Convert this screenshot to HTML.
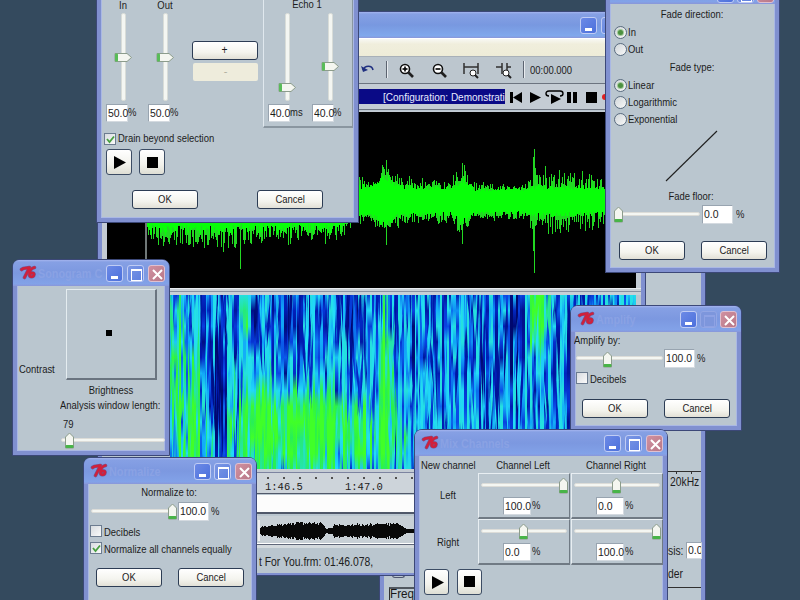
<!DOCTYPE html><html><head><meta charset="utf-8"><style>
*{margin:0;padding:0;box-sizing:border-box}
html,body{width:800px;height:600px;overflow:hidden;background:#344a5e;font-family:"Liberation Sans",sans-serif;font-size:11px;color:#1c1c1c}
.a{position:absolute}
.dlg{position:absolute;background:#bac6cf;border:4px solid #8090d0;outline:1px solid #3c4878;box-shadow:inset 0 0 0 1px #aab8e4}
.tb{position:absolute;left:0;right:0;top:0;height:26px;background:linear-gradient(#a4b4ee 0,#86a0e4 2px,#7c98e0 50%,#82a2e8 92%,#8a96d8 100%);}
.ttl{position:absolute;left:24px;top:6px;font-size:12px;font-weight:bold;color:#8aa2e4;white-space:nowrap;transform:scaleX(.9);transform-origin:0 0}
.logo{position:absolute;left:4px;top:3px;font:italic bold 15px "Liberation Sans",sans-serif;color:#d0203a;letter-spacing:-1px;text-shadow:1px 0 0 #a01828}
.tbtn{position:absolute;top:5px;width:17px;height:17px;border-radius:3px;border:1px solid #c0ccf4}
.bmin{background:linear-gradient(135deg,#6c8ae6,#4c70dc);}
.bmin:after{content:"";position:absolute;left:4px;top:10px;width:7px;height:3px;background:#fff}
.bmax{background:linear-gradient(135deg,#7c98e4,#5c7ee0)}
.bmax:after{content:"";position:absolute;left:3px;top:3px;width:9px;height:9px;border:1px solid #fff;border-top-width:2px}
.bmaxd{background:#7d96dc;border-color:#92a6e4}
.bmaxd:after{content:"";position:absolute;left:3px;top:3px;width:9px;height:9px;border:1px solid #8ea2e4;border-top-width:2px}
.bcls{background:linear-gradient(135deg,#d090a0,#b87888);border-color:#e0c0d0}
.btn{position:absolute;height:19px;border:1px solid #2c3c54;border-radius:3px;background:linear-gradient(#ffffff,#f4f4ee 60%,#e2e0d6);text-align:center;line-height:17px;font-size:11px;color:#1c1c1c}
.edit{position:absolute;height:19px;background:#fff;border:1px solid;border-color:#98a4b0 #d4dae0 #d4dae0 #98a4b0;line-height:17px;padding-left:1px;font-size:11px;color:#1c1c1c;white-space:nowrap}
.edit .sx{transform-origin:0 0;transform:scaleX(.95)}
.chk{position:absolute;width:12px;height:12px;background:linear-gradient(135deg,#d8dce0,#fafafa);border:1px solid #6c7c90}
.rad{position:absolute;width:13px;height:13px;border-radius:50%;background:linear-gradient(135deg,#d0d6da,#f8f8f8);border:1px solid #5a6c80}
.rad.on:after{content:"";position:absolute;left:3px;top:3px;width:5px;height:5px;border-radius:50%;background:#4c9040;box-shadow:0 0 0 1px #a0c898}
.trk{position:absolute;height:4px;background:#f4f6f2;border:1px solid #dcdcd8;border-radius:2px}
.vtrk{position:absolute;width:5px;background:#f4f6f2;border:1px solid #d8dcd8;border-radius:2px}
.t{position:absolute;white-space:nowrap;transform:scaleX(.86);transform-origin:0 0}
.sx{display:inline-block;transform:scaleX(.86)}
.pbtn{position:absolute;width:26px;height:26px;border:1px solid #3c4c64;border-radius:3px;background:linear-gradient(#fff,#f2f2ec 60%,#deded4)}
</style></head><body>
<div class="a" style="left:380px;top:260px;width:325px;height:345px;background:#bcc8d0;border:4px solid #8090d0;outline:1px solid #3c4878"></div>
<div class="a" style="left:668px;top:471px;width:33px;height:1px;background:#303030"></div><div class="a" style="left:676px;top:471px;width:1px;height:3px;background:#303030"></div><div class="a" style="left:691px;top:471px;width:1px;height:3px;background:#303030"></div>
<div class="t" style="left:670px;top:475px;font-size:12px">20kHz</div>
<div class="t" style="left:668px;top:544px;font-size:12px">sis:</div>
<div class="edit" style="left:686px;top:542px;width:16px;height:17px;overflow:hidden;line-height:15px"><span class="sx">0.0</span></div>
<div class="t" style="left:668px;top:567px;font-size:12px">der</div>
<div class="a" style="left:668px;top:587px;width:33px;height:1px;background:#303030"></div>
<div class="a" style="left:389px;top:587px;width:30px;height:14px;border-top:2px solid #505860;border-left:1px solid #303030"></div>
<div class="t" style="left:390px;top:586px;font-size:13px;color:#181818;transform:scaleX(.9)">Frequ</div>
<div class="a" style="left:392px;top:574px;width:13px;height:4px;border:1px solid #505870;border-top:0;border-radius:0 0 3px 3px"></div>
<div class="a" style="left:98px;top:12px;width:547px;height:563px;background:#bac6cf;border:4px solid #8090d0;border-top:0;outline:1px solid #3c4878"></div>
<div class="a" style="left:98px;top:12px;width:547px;height:26px;background:linear-gradient(#a4b4ee 0,#86a0e4 2px,#7898e0 50%,#80a8ec 92%,#8a96d8 100%)"></div>
<div class="tbtn bmin" style="left:580px;top:17px"></div>
<div class="tbtn bmax" style="left:601px;top:17px"></div>
<div class="a" style="left:102px;top:38px;width:539px;height:19px;background:linear-gradient(#f8f8f4,#f0eedc 30%,#eeecd8);border-top:1px solid #fff;border-bottom:1px solid #a8b0b8"></div>
<div class="a" style="left:102px;top:57px;width:539px;height:27px;background:#bcc6ce;border-bottom:1px solid #6c7480"></div>
<svg class="a" style="left:360px;top:62px" width="16" height="14"><path d="M3 8C5 3 12 3 13 8" stroke="#203080" stroke-width="1.6" fill="none"/><path d="M1 4L3 10L8 8Z" fill="#203080"/></svg>
<div class="a" style="left:386px;top:61px;width:2px;height:17px;background:#5c6470;border-right:1px solid #e8ecf0"></div>
<svg class="a" style="left:399px;top:63px" width="16" height="16"><circle cx="6" cy="6" r="4.5" fill="#fff" stroke="#101010" stroke-width="1.6"/><path d="M3.5 6H8.5" stroke="#000" stroke-width="1.6"/><path d="M6 3.5V8.5" stroke="#000" stroke-width="1.6"/><path d="M9 9L14 14" stroke="#202020" stroke-width="2.6"/></svg>
<svg class="a" style="left:432px;top:63px" width="16" height="16"><circle cx="6" cy="6" r="4.5" fill="#fff" stroke="#101010" stroke-width="1.6"/><path d="M3.5 6H8.5" stroke="#000" stroke-width="1.6"/><path d="M9 9L14 14" stroke="#202020" stroke-width="2.6"/></svg>
<svg class="a" style="left:462px;top:62px" width="18" height="17"><path d="M2 1V12M16 1V12M2 5H16" stroke="#303030" stroke-width="1.5" fill="none"/><circle cx="11" cy="11" r="3" fill="#fff" stroke="#202020"/><path d="M13 13L16 16" stroke="#202020" stroke-width="2"/></svg>
<svg class="a" style="left:495px;top:62px" width="18" height="17"><path d="M1 5H7M7 1V12M12 1V12M12 5H16" stroke="#303030" stroke-width="1.5" fill="none"/><circle cx="11" cy="11" r="3" fill="#fff" stroke="#202020"/><path d="M13 13L16 16" stroke="#202020" stroke-width="2"/></svg>
<div class="a" style="left:523px;top:61px;width:2px;height:17px;background:#5c6470;border-right:1px solid #e8ecf0"></div>
<div class="t" style="left:530px;top:64px;font-size:11px;color:#202020">00:00.000</div>
<div class="a" style="left:102px;top:84px;width:539px;height:26px;background:#c4ccd4;border-bottom:1px solid #6c7480"></div>
<div class="a" style="left:102px;top:89px;width:403px;height:15px;background:#0a0a86;overflow:hidden"><div class="t" style="left:281px;top:1px;color:#e8ecff;font-size:11px;line-height:15px;transform:scaleX(.91)">[Configuration: Demonstration</div></div>
<svg class="a" style="left:508px;top:90px" width="100" height="16"><rect x="2" y="2" width="3" height="11" fill="#000"/><path d="M14 2V13L5 7.5Z" fill="#000"/><path d="M22 2V13L33 7.5Z" fill="#000"/><path d="M41 6C37 6 37 1 41 1H52C56 1 56 6 52 6" stroke="#000" stroke-width="1.4" fill="none"/><path d="M43 4V14L53 9Z" fill="#000"/><rect x="59" y="2" width="4" height="11" fill="#000"/><rect x="65" y="2" width="4" height="11" fill="#000"/><rect x="78" y="2" width="11" height="11" fill="#000"/><circle cx="97" cy="7" r="3" fill="#e02020"/></svg>
<div class="a" style="left:102px;top:111px;width:539px;height:178px;background:#c4ccd4"></div>
<div class="a" style="left:107px;top:112px;width:529px;height:176px;background:#000"></div>
<div class="a" style="left:145px;top:112px;width:2px;height:176px;background:#707878"></div>
<svg class="a" style="left:0;top:0" width="800" height="600"><path d="M147.5 165V227M148.5 171V235M149.5 176V230M150.5 172V235M151.5 163V239M152.5 153V228M153.5 173V239M154.5 167V234M155.5 171V227M156.5 167V237M157.5 160V238M158.5 168V245M159.5 152V228M160.5 172V238M161.5 165V239M162.5 158V236M163.5 158V246M164.5 172V242M165.5 157V237M166.5 173V237M167.5 175V238M168.5 172V242M169.5 170V244M170.5 167V238M171.5 157V235M172.5 174V233M173.5 171V232M174.5 157V240M175.5 162V231M176.5 153V245M177.5 173V237M178.5 175V226M179.5 174V226M180.5 176V243M181.5 169V229M182.5 160V244M183.5 172V230M184.5 160V228M185.5 171V235M186.5 165V243M187.5 167V235M188.5 169V245M189.5 161V245M190.5 155V244M191.5 172V230M192.5 175V237M193.5 151V247M194.5 166V230M195.5 167V242M196.5 160V242M197.5 161V244M198.5 169V242M199.5 156V237M200.5 163V235M201.5 160V239M202.5 158V242M203.5 173V230M204.5 161V248M205.5 160V235M206.5 173V235M207.5 174V245M208.5 166V245M209.5 167V240M210.5 168V226M211.5 177V238M212.5 167V236M213.5 171V239M214.5 163V233M215.5 156V237M216.5 165V240M217.5 168V247M218.5 153V235M219.5 158V235M220.5 176V231M221.5 164V247M222.5 167V232M223.5 167V252M224.5 155V243M225.5 170V232M226.5 165V228M227.5 172V232M228.5 171V248M229.5 169V236M230.5 175V233M231.5 160V235M232.5 169V244M233.5 167V229M234.5 168V247M235.5 177V248M236.5 166V244M237.5 169V227M238.5 177V227M239.5 164V229M240.5 170V269M241.5 165V230M242.5 161V229M243.5 165V240M244.5 166V244M245.5 166V240M246.5 174V228M247.5 176V232M248.5 165V240M249.5 173V231M250.5 175V243M251.5 167V244M252.5 175V231M253.5 172V234M254.5 178V230M255.5 176V226M256.5 163V237M257.5 168V235M258.5 159V233M259.5 165V239M260.5 170V237M261.5 163V243M262.5 164V241M263.5 175V227M264.5 171V239M265.5 167V231M266.5 165V237M267.5 163V226M268.5 169V228M269.5 166V237M270.5 164V237M271.5 171V226M272.5 165V227M273.5 170V235M274.5 166V231M275.5 161V226M276.5 168V237M277.5 166V235M278.5 175V239M279.5 163V230M280.5 158V237M281.5 172V233M282.5 174V231M283.5 175V238M284.5 167V232M285.5 157V233M286.5 160V234M287.5 173V228M288.5 175V245M289.5 171V227M290.5 163V244M291.5 159V238M292.5 162V228M293.5 169V230M294.5 165V227M295.5 161V233M296.5 166V230M297.5 176V238M298.5 161V240M299.5 173V225M300.5 174V226M301.5 164V236M302.5 171V231M303.5 164V227M304.5 162V231M305.5 173V230M306.5 157V232M307.5 166V235M308.5 170V236M309.5 156V233M310.5 173V233M311.5 162V240M312.5 174V239M313.5 169V235M314.5 170V234M315.5 173V230M316.5 169V226M317.5 162V235M318.5 168V230M319.5 167V231M320.5 170V232M321.5 171V233M322.5 168V229M323.5 166V232M324.5 159V228M325.5 175V244M326.5 172V229M327.5 171V236M328.5 176V233M329.5 166V239M330.5 159V235M331.5 168V233M332.5 169V229M333.5 175V226M334.5 156V226M335.5 165V235M336.5 175V240M337.5 165V227M338.5 166V231M339.5 166V225M340.5 169V234M341.5 169V236M342.5 178V232M343.5 162V226M344.5 169V235M345.5 177V224M346.5 169V226M347.5 174V224M348.5 177V218M349.5 185V220M350.5 186V228M351.5 183V219M352.5 184V217M353.5 184V219M354.5 181V217M355.5 182V216M356.5 185V214M357.5 185V218M358.5 185V218M359.5 177V216M360.5 180V224M361.5 189V215M362.5 177V217M363.5 184V221M364.5 181V217M365.5 187V216M366.5 184V217M367.5 185V215M368.5 182V217M369.5 187V216M370.5 185V218M371.5 185V221M372.5 186V218M373.5 182V220M374.5 184V222M375.5 183V227M376.5 184V220M377.5 182V226M378.5 183V221M379.5 181V227M380.5 178V225M381.5 173V225M382.5 165V227M383.5 167V222M384.5 169V228M385.5 175V227M386.5 160V245M387.5 172V225M388.5 169V226M389.5 175V227M390.5 177V227M391.5 180V223M392.5 176V223M393.5 182V220M394.5 182V219M395.5 176V223M396.5 181V217M397.5 174V226M398.5 184V228M399.5 178V218M400.5 185V219M401.5 178V215M402.5 182V221M403.5 185V216M404.5 189V222M405.5 185V223M406.5 184V217M407.5 181V223M408.5 185V220M409.5 176V218M410.5 185V217M411.5 179V214M412.5 183V222M413.5 188V213M414.5 183V222M415.5 184V214M416.5 189V216M417.5 185V216M418.5 186V223M419.5 188V217M420.5 183V217M421.5 186V217M422.5 178V220M423.5 189V220M424.5 188V219M425.5 182V215M426.5 186V219M427.5 185V214M428.5 184V221M429.5 184V219M430.5 186V214M431.5 187V218M432.5 182V217M433.5 181V217M434.5 180V216M435.5 185V213M436.5 181V218M437.5 185V221M438.5 183V224M439.5 183V223M440.5 185V216M441.5 189V222M442.5 189V220M443.5 189V212M444.5 182V220M445.5 189V221M446.5 187V223M447.5 186V216M448.5 183V218M449.5 184V216M450.5 185V212M451.5 188V215M452.5 186V218M453.5 175V221M454.5 185V224M455.5 181V219M456.5 172V216M457.5 177V231M458.5 181V230M459.5 181V232M460.5 181V225M461.5 178V230M462.5 163V244M463.5 176V224M464.5 165V218M465.5 171V223M466.5 182V226M467.5 175V227M468.5 185V226M469.5 184V221M470.5 184V219M471.5 184V215M472.5 186V216M473.5 187V213M474.5 182V216M475.5 191V216M476.5 183V216M477.5 190V214M478.5 188V216M479.5 185V215M480.5 189V218M481.5 185V217M482.5 185V218M483.5 182V218M484.5 188V216M485.5 186V217M486.5 187V214M487.5 185V219M488.5 186V215M489.5 189V217M490.5 184V216M491.5 188V217M492.5 184V216M493.5 189V218M494.5 190V221M495.5 189V212M496.5 190V216M497.5 189V216M498.5 187V218M499.5 190V216M500.5 186V216M501.5 189V218M502.5 186V215M503.5 184V212M504.5 187V212M505.5 190V215M506.5 189V214M507.5 186V214M508.5 187V219M509.5 187V219M510.5 189V217M511.5 189V212M512.5 189V214M513.5 187V219M514.5 186V219M515.5 188V218M516.5 188V219M517.5 189V212M518.5 188V211M519.5 187V218M520.5 190V216M521.5 187V216M522.5 185V214M523.5 188V219M524.5 188V216M525.5 184V213M526.5 189V216M527.5 188V216M528.5 181V215M529.5 182V215M530.5 180V228M531.5 186V221M532.5 186V229M533.5 157V251M534.5 149V273M535.5 168V226M536.5 175V225M537.5 175V220M538.5 184V213M539.5 175V221M540.5 177V219M541.5 185V220M542.5 186V225M543.5 175V221M544.5 185V219M545.5 166V223M546.5 178V215M547.5 189V223M548.5 188V234M549.5 177V214M550.5 186V227M551.5 174V217M552.5 181V234M553.5 177V217M554.5 175V216M555.5 187V232M556.5 184V220M557.5 187V229M558.5 179V220M559.5 170V229M560.5 187V233M561.5 183V225M562.5 177V219M563.5 184V227M564.5 173V219M565.5 185V221M566.5 186V230M567.5 179V218M568.5 176V232M569.5 181V225M570.5 173V217M571.5 182V217M572.5 177V220M573.5 178V217M574.5 173V222M575.5 187V216M576.5 186V222M577.5 188V214M578.5 185V222M579.5 179V215M580.5 188V229M581.5 180V216M582.5 171V224M583.5 185V216M584.5 189V213M585.5 183V231M586.5 179V215M587.5 188V222M588.5 179V219M589.5 174V228M590.5 188V214M591.5 175V216M592.5 180V230M593.5 181V226M594.5 181V222M595.5 188V213M596.5 187V213M597.5 179V212M598.5 189V228M599.5 186V219M600.5 180V222M601.5 179V217M602.5 187V212M603.5 187V224M604.5 189V215M605.5 186V217M606.5 189V228M607.5 184V216M608.5 187V214M609.5 176V227M610.5 179V213M611.5 175V213M612.5 186V213M613.5 186V217M614.5 181V213M615.5 182V216M616.5 185V216M617.5 184V220M618.5 186V214M619.5 180V213M620.5 177V223M621.5 177V215M622.5 186V222M623.5 187V218M624.5 187V218M625.5 181V225M626.5 187V223M627.5 178V219M628.5 184V214M629.5 185V213M630.5 189V215M631.5 187V218M632.5 181V214M633.5 187V215M634.5 187V214M635.5 183V222" stroke="#22d822" stroke-width="1" fill="none"/><path d="M147.5 174V227M148.5 171V229M149.5 177V230M150.5 173V234M151.5 170V235M152.5 167V225M153.5 176V226M154.5 175V231M155.5 171V226M156.5 170V229M157.5 172V228M158.5 175V231M159.5 169V228M160.5 173V233M161.5 177V232M162.5 168V228M163.5 171V230M164.5 172V232M165.5 170V235M166.5 173V232M167.5 175V226M168.5 176V227M169.5 176V229M170.5 169V234M171.5 173V234M172.5 175V227M173.5 171V228M174.5 173V231M175.5 172V231M176.5 168V233M177.5 173V229M178.5 177V225M179.5 174V225M180.5 176V229M181.5 171V226M182.5 174V226M183.5 172V230M184.5 174V227M185.5 177V235M186.5 172V225M187.5 168V232M188.5 176V233M189.5 174V227M190.5 169V233M191.5 175V230M192.5 177V228M193.5 167V229M194.5 168V228M195.5 175V227M196.5 169V230M197.5 177V231M198.5 170V230M199.5 174V233M200.5 173V234M201.5 176V226M202.5 176V233M203.5 174V230M204.5 167V231M205.5 173V233M206.5 175V228M207.5 175V229M208.5 174V229M209.5 173V234M210.5 172V225M211.5 177V233M212.5 170V230M213.5 172V232M214.5 175V227M215.5 172V232M216.5 171V230M217.5 173V230M218.5 170V233M219.5 172V234M220.5 176V229M221.5 177V231M222.5 176V232M223.5 169V234M224.5 174V229M225.5 176V229M226.5 176V228M227.5 172V229M228.5 171V230M229.5 170V234M230.5 177V232M231.5 173V234M232.5 176V234M233.5 177V225M234.5 177V234M235.5 177V233M236.5 173V228M237.5 175V226M238.5 177V226M239.5 175V227M240.5 173V226M241.5 175V224M242.5 176V229M243.5 169V229M244.5 174V229M245.5 174V233M246.5 174V228M247.5 177V232M248.5 177V233M249.5 175V227M250.5 176V229M251.5 168V230M252.5 175V228M253.5 173V229M254.5 178V227M255.5 177V224M256.5 172V229M257.5 171V233M258.5 168V226M259.5 177V233M260.5 171V232M261.5 173V232M262.5 172V233M263.5 176V224M264.5 177V232M265.5 172V231M266.5 170V232M267.5 171V225M268.5 177V227M269.5 171V234M270.5 173V231M271.5 172V225M272.5 171V227M273.5 177V227M274.5 171V227M275.5 173V225M276.5 168V233M277.5 170V234M278.5 176V233M279.5 177V229M280.5 170V229M281.5 176V233M282.5 178V229M283.5 177V227M284.5 178V231M285.5 169V231M286.5 174V228M287.5 175V228M288.5 177V232M289.5 176V226M290.5 174V233M291.5 172V233M292.5 171V224M293.5 171V230M294.5 169V225M295.5 175V231M296.5 172V227M297.5 177V225M298.5 173V226M299.5 174V225M300.5 175V225M301.5 173V233M302.5 174V229M303.5 178V226M304.5 173V230M305.5 176V226M306.5 169V232M307.5 178V231M308.5 173V224M309.5 170V232M310.5 177V225M311.5 169V231M312.5 174V229M313.5 176V233M314.5 177V226M315.5 177V224M316.5 175V226M317.5 175V228M318.5 170V228M319.5 169V231M320.5 174V230M321.5 172V233M322.5 175V228M323.5 171V231M324.5 169V227M325.5 176V231M326.5 174V225M327.5 172V233M328.5 176V233M329.5 178V227M330.5 171V233M331.5 177V233M332.5 172V227M333.5 177V223M334.5 169V225M335.5 175V232M336.5 178V228M337.5 177V227M338.5 175V231M339.5 178V224M340.5 171V232M341.5 171V228M342.5 178V224M343.5 174V226M344.5 180V224M345.5 180V221M346.5 177V219M347.5 179V222M348.5 184V218M349.5 186V220M350.5 188V217M351.5 184V218M352.5 189V215M353.5 189V214M354.5 186V217M355.5 185V214M356.5 186V213M357.5 189V217M358.5 187V218M359.5 185V216M360.5 187V217M361.5 189V214M362.5 184V216M363.5 184V215M364.5 184V214M365.5 188V215M366.5 187V216M367.5 189V215M368.5 187V214M369.5 188V214M370.5 185V214M371.5 186V215M372.5 187V217M373.5 183V219M374.5 184V215M375.5 185V219M376.5 184V216M377.5 182V221M378.5 183V220M379.5 182V223M380.5 179V224M381.5 177V225M382.5 176V222M383.5 176V220M384.5 179V227M385.5 180V224M386.5 180V223M387.5 181V225M388.5 175V221M389.5 178V221M390.5 180V223M391.5 184V222M392.5 180V222M393.5 182V217M394.5 186V219M395.5 183V216M396.5 185V215M397.5 183V214M398.5 185V217M399.5 186V218M400.5 185V218M401.5 185V214M402.5 185V214M403.5 188V214M404.5 189V214M405.5 186V217M406.5 189V215M407.5 185V216M408.5 189V218M409.5 185V214M410.5 188V217M411.5 186V213M412.5 186V218M413.5 188V213M414.5 186V215M415.5 189V214M416.5 190V214M417.5 188V215M418.5 187V215M419.5 188V213M420.5 185V216M421.5 190V215M422.5 187V214M423.5 189V217M424.5 188V213M425.5 190V215M426.5 189V215M427.5 186V213M428.5 190V216M429.5 190V216M430.5 186V214M431.5 189V212M432.5 187V216M433.5 187V214M434.5 189V215M435.5 186V212M436.5 187V216M437.5 186V213M438.5 187V215M439.5 188V216M440.5 188V215M441.5 189V215M442.5 190V212M443.5 189V212M444.5 187V215M445.5 190V214M446.5 187V216M447.5 186V216M448.5 190V212M449.5 188V215M450.5 190V212M451.5 188V214M452.5 188V216M453.5 184V216M454.5 188V216M455.5 186V219M456.5 182V216M457.5 186V217M458.5 186V219M459.5 184V220M460.5 183V224M461.5 179V222M462.5 183V225M463.5 179V221M464.5 178V218M465.5 184V218M466.5 184V222M467.5 183V220M468.5 185V217M469.5 184V218M470.5 185V216M471.5 185V214M472.5 187V216M473.5 190V213M474.5 190V211M475.5 191V215M476.5 187V214M477.5 191V213M478.5 190V211M479.5 188V213M480.5 191V213M481.5 188V212M482.5 190V212M483.5 188V214M484.5 189V213M485.5 191V212M486.5 189V212M487.5 189V212M488.5 191V213M489.5 189V215M490.5 191V214M491.5 191V213M492.5 189V213M493.5 190V215M494.5 190V214M495.5 190V211M496.5 191V212M497.5 190V212M498.5 187V213M499.5 190V211M500.5 188V213M501.5 190V215M502.5 188V214M503.5 189V211M504.5 188V212M505.5 190V211M506.5 190V212M507.5 190V213M508.5 187V214M509.5 188V214M510.5 189V211M511.5 189V212M512.5 190V214M513.5 188V214M514.5 189V214M515.5 188V214M516.5 189V214M517.5 189V212M518.5 189V211M519.5 189V213M520.5 191V214M521.5 189V214M522.5 187V211M523.5 191V213M524.5 190V215M525.5 188V211M526.5 190V214M527.5 189V214M528.5 189V214M529.5 187V213M530.5 188V216M531.5 188V214M532.5 186V216M533.5 185V215M534.5 189V214M535.5 186V217M536.5 186V216M537.5 186V214M538.5 185V213M539.5 185V218M540.5 185V217M541.5 188V215M542.5 186V218M543.5 189V213M544.5 185V215M545.5 186V217M546.5 187V213M547.5 189V213M548.5 189V217M549.5 189V213M550.5 186V213M551.5 186V217M552.5 186V216M553.5 188V217M554.5 190V216M555.5 188V216M556.5 187V213M557.5 188V216M558.5 188V215M559.5 188V216M560.5 187V214M561.5 186V216M562.5 185V216M563.5 188V216M564.5 187V216M565.5 190V213M566.5 186V216M567.5 186V216M568.5 186V216M569.5 188V212M570.5 189V216M571.5 187V215M572.5 189V216M573.5 190V216M574.5 187V216M575.5 188V215M576.5 189V215M577.5 188V214M578.5 185V214M579.5 186V213M580.5 188V212M581.5 186V214M582.5 187V214M583.5 186V216M584.5 189V213M585.5 188V216M586.5 186V212M587.5 190V216M588.5 187V216M589.5 188V212M590.5 189V212M591.5 186V216M592.5 187V215M593.5 190V212M594.5 187V213M595.5 190V213M596.5 188V212M597.5 187V212M598.5 190V216M599.5 187V216M600.5 190V216M601.5 188V213M602.5 188V212M603.5 187V214M604.5 189V213M605.5 187V213M606.5 189V216M607.5 190V215M608.5 188V213M609.5 189V216M610.5 190V213M611.5 187V213M612.5 187V213M613.5 187V214M614.5 186V212M615.5 190V215M616.5 190V212M617.5 189V212M618.5 187V214M619.5 187V213M620.5 187V213M621.5 188V211M622.5 187V213M623.5 189V212M624.5 191V214M625.5 190V215M626.5 189V215M627.5 190V215M628.5 188V214M629.5 186V212M630.5 189V215M631.5 187V212M632.5 188V214M633.5 187V215M634.5 188V214M635.5 189V212" stroke="#08ff08" stroke-width="1" fill="none"/></svg>
<div class="a" style="left:102px;top:288px;width:539px;height:7px;background:#c8d0d6;border-top:1px solid #e8ecf0"></div>
<div class="a" style="left:102px;top:291px;width:539px;height:1px;background:#8890a0"></div>
<svg class="a" style="left:107px;top:295px" width="529" height="174"><defs><linearGradient id="g0" x2="0" y2="1"><stop offset="0.00" stop-color="#0fa0f7"/><stop offset="0.09" stop-color="#24e3be"/><stop offset="0.18" stop-color="#19c0f8"/><stop offset="0.27" stop-color="#11a7f8"/><stop offset="0.36" stop-color="#1dc9f8"/><stop offset="0.45" stop-color="#24e795"/><stop offset="0.55" stop-color="#19c0f8"/><stop offset="0.64" stop-color="#18bbf8"/><stop offset="0.73" stop-color="#20d3f8"/><stop offset="0.82" stop-color="#1dccf8"/><stop offset="0.91" stop-color="#0c72ee"/><stop offset="1.00" stop-color="#0d75ef"/></linearGradient><linearGradient id="g1" x2="0" y2="1"><stop offset="0.00" stop-color="#1eccf8"/><stop offset="0.09" stop-color="#24e3bc"/><stop offset="0.18" stop-color="#25ea7a"/><stop offset="0.27" stop-color="#24e1d4"/><stop offset="0.36" stop-color="#37f935"/><stop offset="0.45" stop-color="#24e4af"/><stop offset="0.55" stop-color="#27ee58"/><stop offset="0.64" stop-color="#36f937"/><stop offset="0.73" stop-color="#29f04d"/><stop offset="0.82" stop-color="#24e3ba"/><stop offset="0.91" stop-color="#24e1d2"/><stop offset="1.00" stop-color="#11a7f8"/></linearGradient><linearGradient id="g2" x2="0" y2="1"><stop offset="0.00" stop-color="#0531cd"/><stop offset="0.09" stop-color="#1ecdf8"/><stop offset="0.18" stop-color="#0c70ee"/><stop offset="0.27" stop-color="#1cc7f8"/><stop offset="0.36" stop-color="#2cf248"/><stop offset="0.45" stop-color="#0d7bf0"/><stop offset="0.55" stop-color="#25ea7d"/><stop offset="0.64" stop-color="#24e4af"/><stop offset="0.73" stop-color="#24dfea"/><stop offset="0.82" stop-color="#24e4b3"/><stop offset="0.91" stop-color="#24e3be"/><stop offset="1.00" stop-color="#24e4ad"/></linearGradient><linearGradient id="g3" x2="0" y2="1"><stop offset="0.00" stop-color="#0a46e6"/><stop offset="0.09" stop-color="#24e88f"/><stop offset="0.18" stop-color="#1fd0f8"/><stop offset="0.27" stop-color="#24e2c3"/><stop offset="0.36" stop-color="#24e2c4"/><stop offset="0.45" stop-color="#25ea79"/><stop offset="0.55" stop-color="#20d3f8"/><stop offset="0.64" stop-color="#3cfd2d"/><stop offset="0.73" stop-color="#26ec6d"/><stop offset="0.82" stop-color="#24e4ad"/><stop offset="0.91" stop-color="#15b3f8"/><stop offset="1.00" stop-color="#13aef8"/></linearGradient><linearGradient id="g4" x2="0" y2="1"><stop offset="0.00" stop-color="#27ef57"/><stop offset="0.09" stop-color="#25e981"/><stop offset="0.18" stop-color="#39fa33"/><stop offset="0.27" stop-color="#40ff28"/><stop offset="0.36" stop-color="#40ff28"/><stop offset="0.45" stop-color="#40ff28"/><stop offset="0.55" stop-color="#40ff28"/><stop offset="0.64" stop-color="#40ff28"/><stop offset="0.73" stop-color="#40ff28"/><stop offset="0.82" stop-color="#40ff28"/><stop offset="0.91" stop-color="#40ff28"/><stop offset="1.00" stop-color="#40ff28"/></linearGradient><linearGradient id="g5" x2="0" y2="1"><stop offset="0.00" stop-color="#1dcbf8"/><stop offset="0.09" stop-color="#11a8f8"/><stop offset="0.18" stop-color="#0f98f5"/><stop offset="0.27" stop-color="#22daf8"/><stop offset="0.36" stop-color="#0c6bed"/><stop offset="0.45" stop-color="#0f94f5"/><stop offset="0.55" stop-color="#10a5f8"/><stop offset="0.64" stop-color="#24e69f"/><stop offset="0.73" stop-color="#0942e2"/><stop offset="0.82" stop-color="#18bbf8"/><stop offset="0.91" stop-color="#1fd0f8"/><stop offset="1.00" stop-color="#24dfe4"/></linearGradient><linearGradient id="g6" x2="0" y2="1"><stop offset="0.00" stop-color="#20d4f8"/><stop offset="0.09" stop-color="#1ac2f8"/><stop offset="0.18" stop-color="#22daf8"/><stop offset="0.27" stop-color="#24e3be"/><stop offset="0.36" stop-color="#26eb75"/><stop offset="0.45" stop-color="#24e0dc"/><stop offset="0.55" stop-color="#24e2c6"/><stop offset="0.64" stop-color="#40ff28"/><stop offset="0.73" stop-color="#27ed63"/><stop offset="0.82" stop-color="#24dfe6"/><stop offset="0.91" stop-color="#40ff28"/><stop offset="1.00" stop-color="#25e88b"/></linearGradient><linearGradient id="g7" x2="0" y2="1"><stop offset="0.00" stop-color="#19c0f8"/><stop offset="0.09" stop-color="#0b5bea"/><stop offset="0.18" stop-color="#24e0da"/><stop offset="0.27" stop-color="#0c69ec"/><stop offset="0.36" stop-color="#28f04e"/><stop offset="0.45" stop-color="#27ed63"/><stop offset="0.55" stop-color="#24e3bc"/><stop offset="0.64" stop-color="#22d9f8"/><stop offset="0.73" stop-color="#1ecdf8"/><stop offset="0.82" stop-color="#1ac3f8"/><stop offset="0.91" stop-color="#25ea7b"/><stop offset="1.00" stop-color="#1cc9f8"/></linearGradient><linearGradient id="g8" x2="0" y2="1"><stop offset="0.00" stop-color="#0637d5"/><stop offset="0.09" stop-color="#12aaf8"/><stop offset="0.18" stop-color="#0b63eb"/><stop offset="0.27" stop-color="#0b64eb"/><stop offset="0.36" stop-color="#0e8cf3"/><stop offset="0.45" stop-color="#0a4de7"/><stop offset="0.55" stop-color="#0d7cf0"/><stop offset="0.64" stop-color="#24e792"/><stop offset="0.73" stop-color="#24e2c5"/><stop offset="0.82" stop-color="#0c74ee"/><stop offset="0.91" stop-color="#24dfec"/><stop offset="1.00" stop-color="#0b63eb"/></linearGradient><linearGradient id="g9" x2="0" y2="1"><stop offset="0.00" stop-color="#24e0de"/><stop offset="0.09" stop-color="#24e0de"/><stop offset="0.18" stop-color="#23dbf8"/><stop offset="0.27" stop-color="#10a4f8"/><stop offset="0.36" stop-color="#26ec69"/><stop offset="0.45" stop-color="#40ff28"/><stop offset="0.55" stop-color="#27ed63"/><stop offset="0.64" stop-color="#31f540"/><stop offset="0.73" stop-color="#34f73b"/><stop offset="0.82" stop-color="#40ff28"/><stop offset="0.91" stop-color="#27ee5c"/><stop offset="1.00" stop-color="#40ff28"/></linearGradient><linearGradient id="g10" x2="0" y2="1"><stop offset="0.00" stop-color="#0f9bf6"/><stop offset="0.09" stop-color="#24e0de"/><stop offset="0.18" stop-color="#0120b9"/><stop offset="0.27" stop-color="#1fcff8"/><stop offset="0.36" stop-color="#20d4f8"/><stop offset="0.45" stop-color="#14b1f8"/><stop offset="0.55" stop-color="#24e797"/><stop offset="0.64" stop-color="#25e981"/><stop offset="0.73" stop-color="#38fa34"/><stop offset="0.82" stop-color="#24e69c"/><stop offset="0.91" stop-color="#24dfe8"/><stop offset="1.00" stop-color="#2bf24a"/></linearGradient><linearGradient id="g11" x2="0" y2="1"><stop offset="0.00" stop-color="#21d6f8"/><stop offset="0.09" stop-color="#1cc8f8"/><stop offset="0.18" stop-color="#24e0de"/><stop offset="0.27" stop-color="#0b5ae9"/><stop offset="0.36" stop-color="#35f839"/><stop offset="0.45" stop-color="#2ff443"/><stop offset="0.55" stop-color="#2cf347"/><stop offset="0.64" stop-color="#40ff28"/><stop offset="0.73" stop-color="#2ff443"/><stop offset="0.82" stop-color="#40ff28"/><stop offset="0.91" stop-color="#40ff28"/><stop offset="1.00" stop-color="#30f541"/></linearGradient><linearGradient id="g12" x2="0" y2="1"><stop offset="0.00" stop-color="#0a53e8"/><stop offset="0.09" stop-color="#24e0de"/><stop offset="0.18" stop-color="#24e0de"/><stop offset="0.27" stop-color="#24e0de"/><stop offset="0.36" stop-color="#1ac3f8"/><stop offset="0.45" stop-color="#26ec6c"/><stop offset="0.55" stop-color="#24e4ac"/><stop offset="0.64" stop-color="#3afb30"/><stop offset="0.73" stop-color="#40ff28"/><stop offset="0.82" stop-color="#37f935"/><stop offset="0.91" stop-color="#25e985"/><stop offset="1.00" stop-color="#24e69f"/></linearGradient><linearGradient id="g13" x2="0" y2="1"><stop offset="0.00" stop-color="#24def4"/><stop offset="0.09" stop-color="#24dfe3"/><stop offset="0.18" stop-color="#22daf8"/><stop offset="0.27" stop-color="#24e0de"/><stop offset="0.36" stop-color="#13aef8"/><stop offset="0.45" stop-color="#27ed61"/><stop offset="0.55" stop-color="#24e69e"/><stop offset="0.64" stop-color="#25ea7c"/><stop offset="0.73" stop-color="#20d3f8"/><stop offset="0.82" stop-color="#25ea79"/><stop offset="0.91" stop-color="#2ff443"/><stop offset="1.00" stop-color="#26eb71"/></linearGradient><linearGradient id="g14" x2="0" y2="1"><stop offset="0.00" stop-color="#0e93f4"/><stop offset="0.09" stop-color="#17baf8"/><stop offset="0.18" stop-color="#24e0de"/><stop offset="0.27" stop-color="#24dfe3"/><stop offset="0.36" stop-color="#26eb74"/><stop offset="0.45" stop-color="#37f936"/><stop offset="0.55" stop-color="#30f541"/><stop offset="0.64" stop-color="#26ed67"/><stop offset="0.73" stop-color="#40ff28"/><stop offset="0.82" stop-color="#40ff28"/><stop offset="0.91" stop-color="#3cfc2d"/><stop offset="1.00" stop-color="#24e4ab"/></linearGradient><linearGradient id="g15" x2="0" y2="1"><stop offset="0.00" stop-color="#0017a3"/><stop offset="0.09" stop-color="#0018a8"/><stop offset="0.18" stop-color="#001aaf"/><stop offset="0.27" stop-color="#0016a2"/><stop offset="0.36" stop-color="#001bb3"/><stop offset="0.45" stop-color="#16b6f8"/><stop offset="0.55" stop-color="#0124bd"/><stop offset="0.64" stop-color="#0c6eed"/><stop offset="0.73" stop-color="#24dfe5"/><stop offset="0.82" stop-color="#0c68ec"/><stop offset="0.91" stop-color="#0b5bea"/><stop offset="1.00" stop-color="#0f99f5"/></linearGradient><linearGradient id="g16" x2="0" y2="1"><stop offset="0.00" stop-color="#032cc7"/><stop offset="0.09" stop-color="#0019ac"/><stop offset="0.18" stop-color="#083fde"/><stop offset="0.27" stop-color="#000e85"/><stop offset="0.36" stop-color="#042dc8"/><stop offset="0.45" stop-color="#11a8f8"/><stop offset="0.55" stop-color="#24dfe4"/><stop offset="0.64" stop-color="#24e2c7"/><stop offset="0.73" stop-color="#0b5eea"/><stop offset="0.82" stop-color="#16b6f8"/><stop offset="0.91" stop-color="#0f9ef6"/><stop offset="1.00" stop-color="#0123bc"/></linearGradient><linearGradient id="g17" x2="0" y2="1"><stop offset="0.00" stop-color="#0430cc"/><stop offset="0.09" stop-color="#0019aa"/><stop offset="0.18" stop-color="#0019a9"/><stop offset="0.27" stop-color="#001bb2"/><stop offset="0.36" stop-color="#0f9cf6"/><stop offset="0.45" stop-color="#0d82f1"/><stop offset="0.55" stop-color="#1cc6f8"/><stop offset="0.64" stop-color="#0123bc"/><stop offset="0.73" stop-color="#17b9f8"/><stop offset="0.82" stop-color="#12aaf8"/><stop offset="0.91" stop-color="#24e1d5"/><stop offset="1.00" stop-color="#14b1f8"/></linearGradient><linearGradient id="g18" x2="0" y2="1"><stop offset="0.00" stop-color="#13adf8"/><stop offset="0.09" stop-color="#0d80f1"/><stop offset="0.18" stop-color="#1cc9f8"/><stop offset="0.27" stop-color="#18bbf8"/><stop offset="0.36" stop-color="#24e0de"/><stop offset="0.45" stop-color="#19bef8"/><stop offset="0.55" stop-color="#1ac1f8"/><stop offset="0.64" stop-color="#24e1cf"/><stop offset="0.73" stop-color="#26ec6a"/><stop offset="0.82" stop-color="#24e69f"/><stop offset="0.91" stop-color="#26ec6d"/><stop offset="1.00" stop-color="#15b5f8"/></linearGradient><linearGradient id="g19" x2="0" y2="1"><stop offset="0.00" stop-color="#0f9af6"/><stop offset="0.09" stop-color="#0226bf"/><stop offset="0.18" stop-color="#1ecef8"/><stop offset="0.27" stop-color="#0fa1f7"/><stop offset="0.36" stop-color="#0a47e6"/><stop offset="0.45" stop-color="#0943e2"/><stop offset="0.55" stop-color="#11a9f8"/><stop offset="0.64" stop-color="#17baf8"/><stop offset="0.73" stop-color="#24dfe5"/><stop offset="0.82" stop-color="#23dbf8"/><stop offset="0.91" stop-color="#0f96f5"/><stop offset="1.00" stop-color="#0c72ee"/></linearGradient><linearGradient id="g20" x2="0" y2="1"><stop offset="0.00" stop-color="#0b5dea"/><stop offset="0.09" stop-color="#0019aa"/><stop offset="0.18" stop-color="#0635d2"/><stop offset="0.27" stop-color="#00108b"/><stop offset="0.36" stop-color="#001db5"/><stop offset="0.45" stop-color="#0c6ded"/><stop offset="0.55" stop-color="#0a4de7"/><stop offset="0.64" stop-color="#001292"/><stop offset="0.73" stop-color="#16b7f8"/><stop offset="0.82" stop-color="#1dcaf8"/><stop offset="0.91" stop-color="#0c69ec"/><stop offset="1.00" stop-color="#24def1"/></linearGradient><linearGradient id="g21" x2="0" y2="1"><stop offset="0.00" stop-color="#0f9ff7"/><stop offset="0.09" stop-color="#0e90f4"/><stop offset="0.18" stop-color="#12a9f8"/><stop offset="0.27" stop-color="#0018a9"/><stop offset="0.36" stop-color="#083edd"/><stop offset="0.45" stop-color="#00118e"/><stop offset="0.55" stop-color="#0018a9"/><stop offset="0.64" stop-color="#0638d6"/><stop offset="0.73" stop-color="#032ac5"/><stop offset="0.82" stop-color="#1cc8f8"/><stop offset="0.91" stop-color="#17b8f8"/><stop offset="1.00" stop-color="#0121ba"/></linearGradient><linearGradient id="g22" x2="0" y2="1"><stop offset="0.00" stop-color="#24e0de"/><stop offset="0.09" stop-color="#24e0de"/><stop offset="0.18" stop-color="#23dcf8"/><stop offset="0.27" stop-color="#24e0de"/><stop offset="0.36" stop-color="#24dfe6"/><stop offset="0.45" stop-color="#0e85f2"/><stop offset="0.55" stop-color="#0e89f2"/><stop offset="0.64" stop-color="#12acf8"/><stop offset="0.73" stop-color="#11a9f8"/><stop offset="0.82" stop-color="#24e0de"/><stop offset="0.91" stop-color="#1ac2f8"/><stop offset="1.00" stop-color="#24e0de"/></linearGradient><linearGradient id="g23" x2="0" y2="1"><stop offset="0.00" stop-color="#00149a"/><stop offset="0.09" stop-color="#0017a4"/><stop offset="0.18" stop-color="#001db5"/><stop offset="0.27" stop-color="#00086f"/><stop offset="0.36" stop-color="#00086e"/><stop offset="0.45" stop-color="#00086e"/><stop offset="0.55" stop-color="#00086e"/><stop offset="0.64" stop-color="#00086e"/><stop offset="0.73" stop-color="#00086e"/><stop offset="0.82" stop-color="#000b7a"/><stop offset="0.91" stop-color="#001bb2"/><stop offset="1.00" stop-color="#00159c"/></linearGradient><linearGradient id="g24" x2="0" y2="1"><stop offset="0.00" stop-color="#1cc9f8"/><stop offset="0.09" stop-color="#0d84f1"/><stop offset="0.18" stop-color="#1dcbf8"/><stop offset="0.27" stop-color="#0533cf"/><stop offset="0.36" stop-color="#000f88"/><stop offset="0.45" stop-color="#000c7e"/><stop offset="0.55" stop-color="#0019aa"/><stop offset="0.64" stop-color="#000e85"/><stop offset="0.73" stop-color="#0945e5"/><stop offset="0.82" stop-color="#15b2f8"/><stop offset="0.91" stop-color="#1bc5f8"/><stop offset="1.00" stop-color="#24e0de"/></linearGradient><linearGradient id="g25" x2="0" y2="1"><stop offset="0.00" stop-color="#0533cf"/><stop offset="0.09" stop-color="#13adf8"/><stop offset="0.18" stop-color="#00118f"/><stop offset="0.27" stop-color="#00149a"/><stop offset="0.36" stop-color="#0016a1"/><stop offset="0.45" stop-color="#000d82"/><stop offset="0.55" stop-color="#00086e"/><stop offset="0.64" stop-color="#0531ce"/><stop offset="0.73" stop-color="#0739d7"/><stop offset="0.82" stop-color="#12aaf8"/><stop offset="0.91" stop-color="#0122bc"/><stop offset="1.00" stop-color="#14b1f8"/></linearGradient><linearGradient id="g26" x2="0" y2="1"><stop offset="0.00" stop-color="#00108d"/><stop offset="0.09" stop-color="#083fde"/><stop offset="0.18" stop-color="#0639d6"/><stop offset="0.27" stop-color="#0018a9"/><stop offset="0.36" stop-color="#00159e"/><stop offset="0.45" stop-color="#001aae"/><stop offset="0.55" stop-color="#00086e"/><stop offset="0.64" stop-color="#00086e"/><stop offset="0.73" stop-color="#000c7d"/><stop offset="0.82" stop-color="#000f86"/><stop offset="0.91" stop-color="#000c7c"/><stop offset="1.00" stop-color="#001498"/></linearGradient><linearGradient id="g27" x2="0" y2="1"><stop offset="0.00" stop-color="#0e93f4"/><stop offset="0.09" stop-color="#042ec9"/><stop offset="0.18" stop-color="#0533d0"/><stop offset="0.27" stop-color="#17b9f8"/><stop offset="0.36" stop-color="#0532cf"/><stop offset="0.45" stop-color="#0a54e8"/><stop offset="0.55" stop-color="#001bb2"/><stop offset="0.64" stop-color="#0c67ec"/><stop offset="0.73" stop-color="#0c71ee"/><stop offset="0.82" stop-color="#0532cf"/><stop offset="0.91" stop-color="#0a53e8"/><stop offset="1.00" stop-color="#0121ba"/></linearGradient><linearGradient id="g28" x2="0" y2="1"><stop offset="0.00" stop-color="#0226c0"/><stop offset="0.09" stop-color="#032bc6"/><stop offset="0.18" stop-color="#000c7f"/><stop offset="0.27" stop-color="#00086e"/><stop offset="0.36" stop-color="#0017a4"/><stop offset="0.45" stop-color="#001bb0"/><stop offset="0.55" stop-color="#000c7f"/><stop offset="0.64" stop-color="#00159d"/><stop offset="0.73" stop-color="#00086e"/><stop offset="0.82" stop-color="#001aad"/><stop offset="0.91" stop-color="#073ddb"/><stop offset="1.00" stop-color="#0635d2"/></linearGradient><linearGradient id="g29" x2="0" y2="1"><stop offset="0.00" stop-color="#24e0de"/><stop offset="0.09" stop-color="#24e0de"/><stop offset="0.18" stop-color="#24e0de"/><stop offset="0.27" stop-color="#24e0de"/><stop offset="0.36" stop-color="#24e0de"/><stop offset="0.45" stop-color="#24e0de"/><stop offset="0.55" stop-color="#24e0de"/><stop offset="0.64" stop-color="#14b1f8"/><stop offset="0.73" stop-color="#24e0de"/><stop offset="0.82" stop-color="#25ea7c"/><stop offset="0.91" stop-color="#35f839"/><stop offset="1.00" stop-color="#24e0de"/></linearGradient><linearGradient id="g30" x2="0" y2="1"><stop offset="0.00" stop-color="#24e0de"/><stop offset="0.09" stop-color="#24e0de"/><stop offset="0.18" stop-color="#24e0de"/><stop offset="0.27" stop-color="#24e0de"/><stop offset="0.36" stop-color="#24e0de"/><stop offset="0.45" stop-color="#15b4f8"/><stop offset="0.55" stop-color="#24e0de"/><stop offset="0.64" stop-color="#24e0de"/><stop offset="0.73" stop-color="#28f04f"/><stop offset="0.82" stop-color="#26eb75"/><stop offset="0.91" stop-color="#3dfd2c"/><stop offset="1.00" stop-color="#3ffe28"/></linearGradient><linearGradient id="g31" x2="0" y2="1"><stop offset="0.00" stop-color="#10a6f8"/><stop offset="0.09" stop-color="#24e0de"/><stop offset="0.18" stop-color="#24e0de"/><stop offset="0.27" stop-color="#24e0de"/><stop offset="0.36" stop-color="#1fd0f8"/><stop offset="0.45" stop-color="#1dc9f8"/><stop offset="0.55" stop-color="#24e0de"/><stop offset="0.64" stop-color="#13aef8"/><stop offset="0.73" stop-color="#40ff28"/><stop offset="0.82" stop-color="#38fa34"/><stop offset="0.91" stop-color="#22d8f8"/><stop offset="1.00" stop-color="#27ef54"/></linearGradient><linearGradient id="g32" x2="0" y2="1"><stop offset="0.00" stop-color="#24e0de"/><stop offset="0.09" stop-color="#0840df"/><stop offset="0.18" stop-color="#032ac4"/><stop offset="0.27" stop-color="#0d79ef"/><stop offset="0.36" stop-color="#24e0de"/><stop offset="0.45" stop-color="#24e0de"/><stop offset="0.55" stop-color="#0d84f1"/><stop offset="0.64" stop-color="#0fa3f7"/><stop offset="0.73" stop-color="#21d6f8"/><stop offset="0.82" stop-color="#13adf8"/><stop offset="0.91" stop-color="#23dcf8"/><stop offset="1.00" stop-color="#12aaf8"/></linearGradient><linearGradient id="g33" x2="0" y2="1"><stop offset="0.00" stop-color="#0532cf"/><stop offset="0.09" stop-color="#0016a1"/><stop offset="0.18" stop-color="#073ad8"/><stop offset="0.27" stop-color="#001bb1"/><stop offset="0.36" stop-color="#00108b"/><stop offset="0.45" stop-color="#15b3f8"/><stop offset="0.55" stop-color="#032bc6"/><stop offset="0.64" stop-color="#0d76ef"/><stop offset="0.73" stop-color="#0019aa"/><stop offset="0.82" stop-color="#0a52e8"/><stop offset="0.91" stop-color="#073cda"/><stop offset="1.00" stop-color="#001bb3"/></linearGradient><linearGradient id="g34" x2="0" y2="1"><stop offset="0.00" stop-color="#032cc7"/><stop offset="0.09" stop-color="#0531ce"/><stop offset="0.18" stop-color="#0c6eed"/><stop offset="0.27" stop-color="#0840df"/><stop offset="0.36" stop-color="#0942e1"/><stop offset="0.45" stop-color="#0329c3"/><stop offset="0.55" stop-color="#00159d"/><stop offset="0.64" stop-color="#001eb7"/><stop offset="0.73" stop-color="#0e93f4"/><stop offset="0.82" stop-color="#0f95f5"/><stop offset="0.91" stop-color="#1cc8f8"/><stop offset="1.00" stop-color="#0019ac"/></linearGradient><linearGradient id="g35" x2="0" y2="1"><stop offset="0.00" stop-color="#24e0de"/><stop offset="0.09" stop-color="#27ef56"/><stop offset="0.18" stop-color="#24e796"/><stop offset="0.27" stop-color="#21d6f8"/><stop offset="0.36" stop-color="#24e0de"/><stop offset="0.45" stop-color="#14b0f8"/><stop offset="0.55" stop-color="#1bc6f8"/><stop offset="0.64" stop-color="#38fa34"/><stop offset="0.73" stop-color="#40ff28"/><stop offset="0.82" stop-color="#40ff28"/><stop offset="0.91" stop-color="#3dfd2c"/><stop offset="1.00" stop-color="#26eb72"/></linearGradient><linearGradient id="g36" x2="0" y2="1"><stop offset="0.00" stop-color="#24e0de"/><stop offset="0.09" stop-color="#24e795"/><stop offset="0.18" stop-color="#0fa1f7"/><stop offset="0.27" stop-color="#24dfe7"/><stop offset="0.36" stop-color="#24e0de"/><stop offset="0.45" stop-color="#0b63eb"/><stop offset="0.55" stop-color="#24e69a"/><stop offset="0.64" stop-color="#27ed63"/><stop offset="0.73" stop-color="#24dfe3"/><stop offset="0.82" stop-color="#25e88b"/><stop offset="0.91" stop-color="#24e4ab"/><stop offset="1.00" stop-color="#24def6"/></linearGradient><linearGradient id="g37" x2="0" y2="1"><stop offset="0.00" stop-color="#24e0de"/><stop offset="0.09" stop-color="#25ea79"/><stop offset="0.18" stop-color="#25e88b"/><stop offset="0.27" stop-color="#13adf8"/><stop offset="0.36" stop-color="#13adf8"/><stop offset="0.45" stop-color="#24e0de"/><stop offset="0.55" stop-color="#18bcf8"/><stop offset="0.64" stop-color="#26ed65"/><stop offset="0.73" stop-color="#35f839"/><stop offset="0.82" stop-color="#24e88c"/><stop offset="0.91" stop-color="#2bf24a"/><stop offset="1.00" stop-color="#24deed"/></linearGradient><linearGradient id="g38" x2="0" y2="1"><stop offset="0.00" stop-color="#24e0de"/><stop offset="0.09" stop-color="#25e88a"/><stop offset="0.18" stop-color="#40ff28"/><stop offset="0.27" stop-color="#1ecdf8"/><stop offset="0.36" stop-color="#24e0de"/><stop offset="0.45" stop-color="#24e0de"/><stop offset="0.55" stop-color="#27ed63"/><stop offset="0.64" stop-color="#40ff28"/><stop offset="0.73" stop-color="#31f540"/><stop offset="0.82" stop-color="#34f73b"/><stop offset="0.91" stop-color="#40ff28"/><stop offset="1.00" stop-color="#25e88a"/></linearGradient><linearGradient id="g39" x2="0" y2="1"><stop offset="0.00" stop-color="#22d8f8"/><stop offset="0.09" stop-color="#24e0de"/><stop offset="0.18" stop-color="#24e0de"/><stop offset="0.27" stop-color="#0a46e6"/><stop offset="0.36" stop-color="#24def6"/><stop offset="0.45" stop-color="#24dfe8"/><stop offset="0.55" stop-color="#24def0"/><stop offset="0.64" stop-color="#24e794"/><stop offset="0.73" stop-color="#2df346"/><stop offset="0.82" stop-color="#35f839"/><stop offset="0.91" stop-color="#26ec6c"/><stop offset="1.00" stop-color="#24e0da"/></linearGradient><linearGradient id="g40" x2="0" y2="1"><stop offset="0.00" stop-color="#11a9f8"/><stop offset="0.09" stop-color="#000f88"/><stop offset="0.18" stop-color="#032bc6"/><stop offset="0.27" stop-color="#0635d2"/><stop offset="0.36" stop-color="#24e0de"/><stop offset="0.45" stop-color="#16b6f8"/><stop offset="0.55" stop-color="#21d8f8"/><stop offset="0.64" stop-color="#3bfb30"/><stop offset="0.73" stop-color="#27ee5a"/><stop offset="0.82" stop-color="#40ff28"/><stop offset="0.91" stop-color="#24e4b4"/><stop offset="1.00" stop-color="#24e0db"/></linearGradient><linearGradient id="g41" x2="0" y2="1"><stop offset="0.00" stop-color="#11a9f8"/><stop offset="0.09" stop-color="#000c7c"/><stop offset="0.18" stop-color="#00086e"/><stop offset="0.27" stop-color="#083edd"/><stop offset="0.36" stop-color="#042dc8"/><stop offset="0.45" stop-color="#0c6bed"/><stop offset="0.55" stop-color="#1fd1f8"/><stop offset="0.64" stop-color="#24e69b"/><stop offset="0.73" stop-color="#31f540"/><stop offset="0.82" stop-color="#32f63e"/><stop offset="0.91" stop-color="#0f9ff7"/><stop offset="1.00" stop-color="#16b8f8"/></linearGradient><linearGradient id="g42" x2="0" y2="1"><stop offset="0.00" stop-color="#0b5cea"/><stop offset="0.09" stop-color="#0638d6"/><stop offset="0.18" stop-color="#0942e2"/><stop offset="0.27" stop-color="#0329c3"/><stop offset="0.36" stop-color="#23ddf8"/><stop offset="0.45" stop-color="#0f9df6"/><stop offset="0.55" stop-color="#25ea7e"/><stop offset="0.64" stop-color="#40ff28"/><stop offset="0.73" stop-color="#40ff28"/><stop offset="0.82" stop-color="#40ff28"/><stop offset="0.91" stop-color="#25e986"/><stop offset="1.00" stop-color="#24e0de"/></linearGradient><linearGradient id="g43" x2="0" y2="1"><stop offset="0.00" stop-color="#1fd1f8"/><stop offset="0.09" stop-color="#0a49e6"/><stop offset="0.18" stop-color="#042dc9"/><stop offset="0.27" stop-color="#24e0de"/><stop offset="0.36" stop-color="#18bdf8"/><stop offset="0.45" stop-color="#24e0de"/><stop offset="0.55" stop-color="#3dfd2b"/><stop offset="0.64" stop-color="#40ff28"/><stop offset="0.73" stop-color="#40ff28"/><stop offset="0.82" stop-color="#40ff28"/><stop offset="0.91" stop-color="#40ff28"/><stop offset="1.00" stop-color="#34f73b"/></linearGradient><linearGradient id="g44" x2="0" y2="1"><stop offset="0.00" stop-color="#0b62eb"/><stop offset="0.09" stop-color="#0fa0f7"/><stop offset="0.18" stop-color="#0945e4"/><stop offset="0.27" stop-color="#001bb3"/><stop offset="0.36" stop-color="#1cc7f8"/><stop offset="0.45" stop-color="#24dfeb"/><stop offset="0.55" stop-color="#24e2c8"/><stop offset="0.64" stop-color="#27ef55"/><stop offset="0.73" stop-color="#40ff28"/><stop offset="0.82" stop-color="#40ff28"/><stop offset="0.91" stop-color="#25e983"/><stop offset="1.00" stop-color="#24e69d"/></linearGradient><linearGradient id="g45" x2="0" y2="1"><stop offset="0.00" stop-color="#18bcf8"/><stop offset="0.09" stop-color="#21d6f8"/><stop offset="0.18" stop-color="#24e0de"/><stop offset="0.27" stop-color="#0f9ef7"/><stop offset="0.36" stop-color="#24dfe3"/><stop offset="0.45" stop-color="#1ac2f8"/><stop offset="0.55" stop-color="#40ff28"/><stop offset="0.64" stop-color="#40ff28"/><stop offset="0.73" stop-color="#40ff28"/><stop offset="0.82" stop-color="#27ed63"/><stop offset="0.91" stop-color="#25ea7c"/><stop offset="1.00" stop-color="#25e980"/></linearGradient><linearGradient id="g46" x2="0" y2="1"><stop offset="0.00" stop-color="#0b5eea"/><stop offset="0.09" stop-color="#14aff8"/><stop offset="0.18" stop-color="#21d6f8"/><stop offset="0.27" stop-color="#0d75ef"/><stop offset="0.36" stop-color="#0329c4"/><stop offset="0.45" stop-color="#24dfe9"/><stop offset="0.55" stop-color="#25e88b"/><stop offset="0.64" stop-color="#40ff28"/><stop offset="0.73" stop-color="#40ff28"/><stop offset="0.82" stop-color="#40ff28"/><stop offset="0.91" stop-color="#40ff28"/><stop offset="1.00" stop-color="#39fa33"/></linearGradient><linearGradient id="g47" x2="0" y2="1"><stop offset="0.00" stop-color="#24e0de"/><stop offset="0.09" stop-color="#24e0de"/><stop offset="0.18" stop-color="#0533d0"/><stop offset="0.27" stop-color="#22d8f8"/><stop offset="0.36" stop-color="#24e0de"/><stop offset="0.45" stop-color="#0f9bf6"/><stop offset="0.55" stop-color="#2af14b"/><stop offset="0.64" stop-color="#40ff28"/><stop offset="0.73" stop-color="#39fb32"/><stop offset="0.82" stop-color="#39fa32"/><stop offset="0.91" stop-color="#40ff28"/><stop offset="1.00" stop-color="#26ec6d"/></linearGradient><linearGradient id="g48" x2="0" y2="1"><stop offset="0.00" stop-color="#24e0de"/><stop offset="0.09" stop-color="#0fa3f7"/><stop offset="0.18" stop-color="#24e0de"/><stop offset="0.27" stop-color="#24e0de"/><stop offset="0.36" stop-color="#20d4f8"/><stop offset="0.45" stop-color="#24e0de"/><stop offset="0.55" stop-color="#22daf8"/><stop offset="0.64" stop-color="#40ff28"/><stop offset="0.73" stop-color="#40ff28"/><stop offset="0.82" stop-color="#40ff28"/><stop offset="0.91" stop-color="#37f936"/><stop offset="1.00" stop-color="#24e4ab"/></linearGradient><linearGradient id="g49" x2="0" y2="1"><stop offset="0.00" stop-color="#0c65ec"/><stop offset="0.09" stop-color="#24e0de"/><stop offset="0.18" stop-color="#0534d0"/><stop offset="0.27" stop-color="#18bbf8"/><stop offset="0.36" stop-color="#24e0de"/><stop offset="0.45" stop-color="#13aef8"/><stop offset="0.55" stop-color="#25e984"/><stop offset="0.64" stop-color="#40ff28"/><stop offset="0.73" stop-color="#40ff28"/><stop offset="0.82" stop-color="#40ff28"/><stop offset="0.91" stop-color="#3dfd2c"/><stop offset="1.00" stop-color="#24e3ba"/></linearGradient><linearGradient id="g50" x2="0" y2="1"><stop offset="0.00" stop-color="#1cc7f8"/><stop offset="0.09" stop-color="#0b5eea"/><stop offset="0.18" stop-color="#083edc"/><stop offset="0.27" stop-color="#0a49e6"/><stop offset="0.36" stop-color="#0b5cea"/><stop offset="0.45" stop-color="#0019ac"/><stop offset="0.55" stop-color="#24e1d5"/><stop offset="0.64" stop-color="#1fd2f8"/><stop offset="0.73" stop-color="#24e2cb"/><stop offset="0.82" stop-color="#40ff28"/><stop offset="0.91" stop-color="#26eb77"/><stop offset="1.00" stop-color="#24e2c8"/></linearGradient><linearGradient id="g51" x2="0" y2="1"><stop offset="0.00" stop-color="#00118e"/><stop offset="0.09" stop-color="#001292"/><stop offset="0.18" stop-color="#0533cf"/><stop offset="0.27" stop-color="#0121bb"/><stop offset="0.36" stop-color="#0017a5"/><stop offset="0.45" stop-color="#0226c0"/><stop offset="0.55" stop-color="#0f97f5"/><stop offset="0.64" stop-color="#24e699"/><stop offset="0.73" stop-color="#24e794"/><stop offset="0.82" stop-color="#24e5a6"/><stop offset="0.91" stop-color="#24def5"/><stop offset="1.00" stop-color="#24e4b2"/></linearGradient><linearGradient id="g52" x2="0" y2="1"><stop offset="0.00" stop-color="#0e93f4"/><stop offset="0.09" stop-color="#042dc8"/><stop offset="0.18" stop-color="#1dc9f8"/><stop offset="0.27" stop-color="#0f9ff7"/><stop offset="0.36" stop-color="#24e0de"/><stop offset="0.45" stop-color="#24e0de"/><stop offset="0.55" stop-color="#24e0df"/><stop offset="0.64" stop-color="#40ff28"/><stop offset="0.73" stop-color="#40ff28"/><stop offset="0.82" stop-color="#40ff28"/><stop offset="0.91" stop-color="#26ed65"/><stop offset="1.00" stop-color="#27ee59"/></linearGradient><linearGradient id="g53" x2="0" y2="1"><stop offset="0.00" stop-color="#1bc4f8"/><stop offset="0.09" stop-color="#0fa1f7"/><stop offset="0.18" stop-color="#0e88f2"/><stop offset="0.27" stop-color="#24e0de"/><stop offset="0.36" stop-color="#0534d1"/><stop offset="0.45" stop-color="#0a48e6"/><stop offset="0.55" stop-color="#24dfe3"/><stop offset="0.64" stop-color="#1fd1f8"/><stop offset="0.73" stop-color="#31f63f"/><stop offset="0.82" stop-color="#40ff28"/><stop offset="0.91" stop-color="#25e88b"/><stop offset="1.00" stop-color="#24e1cc"/></linearGradient><linearGradient id="g54" x2="0" y2="1"><stop offset="0.00" stop-color="#0a54e8"/><stop offset="0.09" stop-color="#073ad7"/><stop offset="0.18" stop-color="#0739d7"/><stop offset="0.27" stop-color="#032bc6"/><stop offset="0.36" stop-color="#19bff8"/><stop offset="0.45" stop-color="#0943e3"/><stop offset="0.55" stop-color="#22d9f8"/><stop offset="0.64" stop-color="#24e69f"/><stop offset="0.73" stop-color="#24def3"/><stop offset="0.82" stop-color="#27ee5b"/><stop offset="0.91" stop-color="#24dfe5"/><stop offset="1.00" stop-color="#20d2f8"/></linearGradient><linearGradient id="g55" x2="0" y2="1"><stop offset="0.00" stop-color="#0d7ff1"/><stop offset="0.09" stop-color="#11a8f8"/><stop offset="0.18" stop-color="#10a5f8"/><stop offset="0.27" stop-color="#0b5dea"/><stop offset="0.36" stop-color="#0a54e8"/><stop offset="0.45" stop-color="#12acf8"/><stop offset="0.55" stop-color="#24def4"/><stop offset="0.64" stop-color="#2af14c"/><stop offset="0.73" stop-color="#40ff28"/><stop offset="0.82" stop-color="#29f14d"/><stop offset="0.91" stop-color="#40ff28"/><stop offset="1.00" stop-color="#0b56e9"/></linearGradient><linearGradient id="g56" x2="0" y2="1"><stop offset="0.00" stop-color="#0123bc"/><stop offset="0.09" stop-color="#001bb1"/><stop offset="0.18" stop-color="#000b7a"/><stop offset="0.27" stop-color="#001bb2"/><stop offset="0.36" stop-color="#0b5bea"/><stop offset="0.45" stop-color="#000d82"/><stop offset="0.55" stop-color="#1cc6f8"/><stop offset="0.64" stop-color="#24e69a"/><stop offset="0.73" stop-color="#24e69a"/><stop offset="0.82" stop-color="#24e5a1"/><stop offset="0.91" stop-color="#24dfe8"/><stop offset="1.00" stop-color="#13aef8"/></linearGradient><linearGradient id="g57" x2="0" y2="1"><stop offset="0.00" stop-color="#0fa0f7"/><stop offset="0.09" stop-color="#073bda"/><stop offset="0.18" stop-color="#001cb4"/><stop offset="0.27" stop-color="#0639d6"/><stop offset="0.36" stop-color="#0639d6"/><stop offset="0.45" stop-color="#14b0f8"/><stop offset="0.55" stop-color="#24e1d2"/><stop offset="0.64" stop-color="#3cfc2d"/><stop offset="0.73" stop-color="#40ff28"/><stop offset="0.82" stop-color="#40ff28"/><stop offset="0.91" stop-color="#37f935"/><stop offset="1.00" stop-color="#32f63d"/></linearGradient><linearGradient id="g58" x2="0" y2="1"><stop offset="0.00" stop-color="#1cc8f8"/><stop offset="0.09" stop-color="#083edd"/><stop offset="0.18" stop-color="#0945e4"/><stop offset="0.27" stop-color="#14b1f8"/><stop offset="0.36" stop-color="#24e0de"/><stop offset="0.45" stop-color="#0fa2f7"/><stop offset="0.55" stop-color="#0b59e9"/><stop offset="0.64" stop-color="#40ff28"/><stop offset="0.73" stop-color="#40ff28"/><stop offset="0.82" stop-color="#40ff28"/><stop offset="0.91" stop-color="#40ff28"/><stop offset="1.00" stop-color="#24e796"/></linearGradient><linearGradient id="g59" x2="0" y2="1"><stop offset="0.00" stop-color="#24def3"/><stop offset="0.09" stop-color="#0a55e8"/><stop offset="0.18" stop-color="#0c70ee"/><stop offset="0.27" stop-color="#0840df"/><stop offset="0.36" stop-color="#24dfe8"/><stop offset="0.45" stop-color="#24e0de"/><stop offset="0.55" stop-color="#24dfec"/><stop offset="0.64" stop-color="#40ff28"/><stop offset="0.73" stop-color="#40ff28"/><stop offset="0.82" stop-color="#27ee5a"/><stop offset="0.91" stop-color="#40ff28"/><stop offset="1.00" stop-color="#28f04f"/></linearGradient><linearGradient id="g60" x2="0" y2="1"><stop offset="0.00" stop-color="#0b64eb"/><stop offset="0.09" stop-color="#0121ba"/><stop offset="0.18" stop-color="#0017a2"/><stop offset="0.27" stop-color="#0f96f5"/><stop offset="0.36" stop-color="#083fde"/><stop offset="0.45" stop-color="#042dc8"/><stop offset="0.55" stop-color="#31f63f"/><stop offset="0.64" stop-color="#24e69b"/><stop offset="0.73" stop-color="#40ff28"/><stop offset="0.82" stop-color="#33f73c"/><stop offset="0.91" stop-color="#2ff443"/><stop offset="1.00" stop-color="#24e2c4"/></linearGradient><linearGradient id="g61" x2="0" y2="1"><stop offset="0.00" stop-color="#14b1f8"/><stop offset="0.09" stop-color="#0d80f1"/><stop offset="0.18" stop-color="#0d79ef"/><stop offset="0.27" stop-color="#24def0"/><stop offset="0.36" stop-color="#24dfea"/><stop offset="0.45" stop-color="#24e0de"/><stop offset="0.55" stop-color="#36f937"/><stop offset="0.64" stop-color="#40ff28"/><stop offset="0.73" stop-color="#40ff28"/><stop offset="0.82" stop-color="#40ff28"/><stop offset="0.91" stop-color="#40ff28"/><stop offset="1.00" stop-color="#40ff28"/></linearGradient><linearGradient id="g62" x2="0" y2="1"><stop offset="0.00" stop-color="#0f9ef7"/><stop offset="0.09" stop-color="#0739d7"/><stop offset="0.18" stop-color="#000d7f"/><stop offset="0.27" stop-color="#000f89"/><stop offset="0.36" stop-color="#0b64eb"/><stop offset="0.45" stop-color="#0c66ec"/><stop offset="0.55" stop-color="#24def1"/><stop offset="0.64" stop-color="#2bf24a"/><stop offset="0.73" stop-color="#40ff28"/><stop offset="0.82" stop-color="#27ee5c"/><stop offset="0.91" stop-color="#24e1d1"/><stop offset="1.00" stop-color="#27ed61"/></linearGradient><linearGradient id="g63" x2="0" y2="1"><stop offset="0.00" stop-color="#001ab0"/><stop offset="0.09" stop-color="#0228c2"/><stop offset="0.18" stop-color="#0019a9"/><stop offset="0.27" stop-color="#001bb3"/><stop offset="0.36" stop-color="#0d7cf0"/><stop offset="0.45" stop-color="#0f94f5"/><stop offset="0.55" stop-color="#23dbf8"/><stop offset="0.64" stop-color="#24e69c"/><stop offset="0.73" stop-color="#40ff28"/><stop offset="0.82" stop-color="#25ea7a"/><stop offset="0.91" stop-color="#25e88b"/><stop offset="1.00" stop-color="#24e4ae"/></linearGradient><linearGradient id="g64" x2="0" y2="1"><stop offset="0.00" stop-color="#15b4f8"/><stop offset="0.09" stop-color="#0d79ef"/><stop offset="0.18" stop-color="#24dfe5"/><stop offset="0.27" stop-color="#0535d1"/><stop offset="0.36" stop-color="#24e0de"/><stop offset="0.45" stop-color="#24e0de"/><stop offset="0.55" stop-color="#11a8f8"/><stop offset="0.64" stop-color="#3efe29"/><stop offset="0.73" stop-color="#40ff28"/><stop offset="0.82" stop-color="#40ff28"/><stop offset="0.91" stop-color="#2ff444"/><stop offset="1.00" stop-color="#24e3be"/></linearGradient><linearGradient id="g65" x2="0" y2="1"><stop offset="0.00" stop-color="#24deed"/><stop offset="0.09" stop-color="#19c0f8"/><stop offset="0.18" stop-color="#0637d4"/><stop offset="0.27" stop-color="#1fd1f8"/><stop offset="0.36" stop-color="#24e0de"/><stop offset="0.45" stop-color="#0841e0"/><stop offset="0.55" stop-color="#24e0e1"/><stop offset="0.64" stop-color="#2af14b"/><stop offset="0.73" stop-color="#40ff28"/><stop offset="0.82" stop-color="#40ff28"/><stop offset="0.91" stop-color="#24e4af"/><stop offset="1.00" stop-color="#2cf248"/></linearGradient><linearGradient id="g66" x2="0" y2="1"><stop offset="0.00" stop-color="#20d4f8"/><stop offset="0.09" stop-color="#24dfe8"/><stop offset="0.18" stop-color="#1ac2f8"/><stop offset="0.27" stop-color="#0d7cf0"/><stop offset="0.36" stop-color="#10a6f8"/><stop offset="0.45" stop-color="#24e0de"/><stop offset="0.55" stop-color="#26ec6d"/><stop offset="0.64" stop-color="#26eb72"/><stop offset="0.73" stop-color="#40ff28"/><stop offset="0.82" stop-color="#27ee5e"/><stop offset="0.91" stop-color="#40ff28"/><stop offset="1.00" stop-color="#25ea7c"/></linearGradient><linearGradient id="g67" x2="0" y2="1"><stop offset="0.00" stop-color="#001aae"/><stop offset="0.09" stop-color="#00086e"/><stop offset="0.18" stop-color="#000b7a"/><stop offset="0.27" stop-color="#000d81"/><stop offset="0.36" stop-color="#0a4ce7"/><stop offset="0.45" stop-color="#0637d4"/><stop offset="0.55" stop-color="#14b0f8"/><stop offset="0.64" stop-color="#24e4b1"/><stop offset="0.73" stop-color="#2cf248"/><stop offset="0.82" stop-color="#40ff28"/><stop offset="0.91" stop-color="#24e0df"/><stop offset="1.00" stop-color="#24e0de"/></linearGradient><linearGradient id="g68" x2="0" y2="1"><stop offset="0.00" stop-color="#24e0de"/><stop offset="0.09" stop-color="#18bcf8"/><stop offset="0.18" stop-color="#1dcbf8"/><stop offset="0.27" stop-color="#10a4f8"/><stop offset="0.36" stop-color="#0b56e9"/><stop offset="0.45" stop-color="#12aaf8"/><stop offset="0.55" stop-color="#25ea79"/><stop offset="0.64" stop-color="#40ff28"/><stop offset="0.73" stop-color="#40ff28"/><stop offset="0.82" stop-color="#40ff28"/><stop offset="0.91" stop-color="#40ff28"/><stop offset="1.00" stop-color="#24e4ae"/></linearGradient><linearGradient id="g69" x2="0" y2="1"><stop offset="0.00" stop-color="#24e0de"/><stop offset="0.09" stop-color="#21d7f8"/><stop offset="0.18" stop-color="#24e0de"/><stop offset="0.27" stop-color="#24dfeb"/><stop offset="0.36" stop-color="#24e0de"/><stop offset="0.45" stop-color="#24e0de"/><stop offset="0.55" stop-color="#23ddf8"/><stop offset="0.64" stop-color="#40ff28"/><stop offset="0.73" stop-color="#40ff28"/><stop offset="0.82" stop-color="#40ff28"/><stop offset="0.91" stop-color="#40ff28"/><stop offset="1.00" stop-color="#3cfc2d"/></linearGradient><linearGradient id="g70" x2="0" y2="1"><stop offset="0.00" stop-color="#1fd1f8"/><stop offset="0.09" stop-color="#24deed"/><stop offset="0.18" stop-color="#23dcf8"/><stop offset="0.27" stop-color="#23dcf8"/><stop offset="0.36" stop-color="#24e0de"/><stop offset="0.45" stop-color="#24e0de"/><stop offset="0.55" stop-color="#2ef345"/><stop offset="0.64" stop-color="#2ef445"/><stop offset="0.73" stop-color="#40ff28"/><stop offset="0.82" stop-color="#40ff28"/><stop offset="0.91" stop-color="#40ff28"/><stop offset="1.00" stop-color="#24e2c3"/></linearGradient><linearGradient id="g71" x2="0" y2="1"><stop offset="0.00" stop-color="#11a9f8"/><stop offset="0.09" stop-color="#001bb2"/><stop offset="0.18" stop-color="#073ad8"/><stop offset="0.27" stop-color="#0d82f1"/><stop offset="0.36" stop-color="#0b64eb"/><stop offset="0.45" stop-color="#1bc6f8"/><stop offset="0.55" stop-color="#12abf8"/><stop offset="0.64" stop-color="#3afb30"/><stop offset="0.73" stop-color="#40ff28"/><stop offset="0.82" stop-color="#40ff28"/><stop offset="0.91" stop-color="#40ff28"/><stop offset="1.00" stop-color="#24e0de"/></linearGradient><linearGradient id="g72" x2="0" y2="1"><stop offset="0.00" stop-color="#24def6"/><stop offset="0.09" stop-color="#0d79ef"/><stop offset="0.18" stop-color="#042fcb"/><stop offset="0.27" stop-color="#0b64eb"/><stop offset="0.36" stop-color="#0840df"/><stop offset="0.45" stop-color="#0c6fed"/><stop offset="0.55" stop-color="#1ecff8"/><stop offset="0.64" stop-color="#25ea79"/><stop offset="0.73" stop-color="#3ffe29"/><stop offset="0.82" stop-color="#2ef345"/><stop offset="0.91" stop-color="#24e69c"/><stop offset="1.00" stop-color="#24e3b9"/></linearGradient><linearGradient id="g73" x2="0" y2="1"><stop offset="0.00" stop-color="#12aaf8"/><stop offset="0.09" stop-color="#0a4ce7"/><stop offset="0.18" stop-color="#17b8f8"/><stop offset="0.27" stop-color="#13aff8"/><stop offset="0.36" stop-color="#0f96f5"/><stop offset="0.45" stop-color="#24def1"/><stop offset="0.55" stop-color="#2ef444"/><stop offset="0.64" stop-color="#40ff28"/><stop offset="0.73" stop-color="#40ff28"/><stop offset="0.82" stop-color="#40ff28"/><stop offset="0.91" stop-color="#2df346"/><stop offset="1.00" stop-color="#2cf249"/></linearGradient><linearGradient id="g74" x2="0" y2="1"><stop offset="0.00" stop-color="#0016a0"/><stop offset="0.09" stop-color="#0636d3"/><stop offset="0.18" stop-color="#001ab0"/><stop offset="0.27" stop-color="#083ddc"/><stop offset="0.36" stop-color="#0534d1"/><stop offset="0.45" stop-color="#1ecff8"/><stop offset="0.55" stop-color="#20d3f8"/><stop offset="0.64" stop-color="#30f541"/><stop offset="0.73" stop-color="#40ff28"/><stop offset="0.82" stop-color="#40ff28"/><stop offset="0.91" stop-color="#40ff28"/><stop offset="1.00" stop-color="#23ddf8"/></linearGradient><linearGradient id="g75" x2="0" y2="1"><stop offset="0.00" stop-color="#0fa1f7"/><stop offset="0.09" stop-color="#0227c1"/><stop offset="0.18" stop-color="#00149a"/><stop offset="0.27" stop-color="#0a48e6"/><stop offset="0.36" stop-color="#24e0de"/><stop offset="0.45" stop-color="#00159e"/><stop offset="0.55" stop-color="#0c6bed"/><stop offset="0.64" stop-color="#24e69b"/><stop offset="0.73" stop-color="#2df346"/><stop offset="0.82" stop-color="#27ee5b"/><stop offset="0.91" stop-color="#13aef8"/><stop offset="1.00" stop-color="#24e2c2"/></linearGradient><linearGradient id="g76" x2="0" y2="1"><stop offset="0.00" stop-color="#24e0de"/><stop offset="0.09" stop-color="#0c6aed"/><stop offset="0.18" stop-color="#24e0de"/><stop offset="0.27" stop-color="#24e0de"/><stop offset="0.36" stop-color="#24e0de"/><stop offset="0.45" stop-color="#1bc5f8"/><stop offset="0.55" stop-color="#27ee5d"/><stop offset="0.64" stop-color="#2ef444"/><stop offset="0.73" stop-color="#40ff28"/><stop offset="0.82" stop-color="#40ff28"/><stop offset="0.91" stop-color="#40ff28"/><stop offset="1.00" stop-color="#31f540"/></linearGradient><linearGradient id="g77" x2="0" y2="1"><stop offset="0.00" stop-color="#0944e3"/><stop offset="0.09" stop-color="#24e0de"/><stop offset="0.18" stop-color="#1cc7f8"/><stop offset="0.27" stop-color="#1ecdf8"/><stop offset="0.36" stop-color="#1ac3f8"/><stop offset="0.45" stop-color="#24e0de"/><stop offset="0.55" stop-color="#27ef55"/><stop offset="0.64" stop-color="#40ff28"/><stop offset="0.73" stop-color="#40ff28"/><stop offset="0.82" stop-color="#40ff28"/><stop offset="0.91" stop-color="#40ff28"/><stop offset="1.00" stop-color="#3ffe28"/></linearGradient><linearGradient id="g78" x2="0" y2="1"><stop offset="0.00" stop-color="#24e0de"/><stop offset="0.09" stop-color="#24e0de"/><stop offset="0.18" stop-color="#15b4f8"/><stop offset="0.27" stop-color="#24dfec"/><stop offset="0.36" stop-color="#0d7df0"/><stop offset="0.45" stop-color="#24e0de"/><stop offset="0.55" stop-color="#1dcbf8"/><stop offset="0.64" stop-color="#26eb73"/><stop offset="0.73" stop-color="#40ff28"/><stop offset="0.82" stop-color="#40ff28"/><stop offset="0.91" stop-color="#40ff28"/><stop offset="1.00" stop-color="#24e69b"/></linearGradient><linearGradient id="g79" x2="0" y2="1"><stop offset="0.00" stop-color="#1ac3f8"/><stop offset="0.09" stop-color="#24def7"/><stop offset="0.18" stop-color="#24def6"/><stop offset="0.27" stop-color="#0c70ee"/><stop offset="0.36" stop-color="#24e0e1"/><stop offset="0.45" stop-color="#24e0de"/><stop offset="0.55" stop-color="#24e4ac"/><stop offset="0.64" stop-color="#33f63d"/><stop offset="0.73" stop-color="#40ff28"/><stop offset="0.82" stop-color="#3afb30"/><stop offset="0.91" stop-color="#2ef444"/><stop offset="1.00" stop-color="#32f63f"/></linearGradient><linearGradient id="g80" x2="0" y2="1"><stop offset="0.00" stop-color="#0018a6"/><stop offset="0.09" stop-color="#0a49e6"/><stop offset="0.18" stop-color="#001db6"/><stop offset="0.27" stop-color="#032bc6"/><stop offset="0.36" stop-color="#19c0f8"/><stop offset="0.45" stop-color="#0b56e9"/><stop offset="0.55" stop-color="#0019ac"/><stop offset="0.64" stop-color="#2bf24a"/><stop offset="0.73" stop-color="#2bf14a"/><stop offset="0.82" stop-color="#24e791"/><stop offset="0.91" stop-color="#1ac1f8"/><stop offset="1.00" stop-color="#23dcf8"/></linearGradient><linearGradient id="g81" x2="0" y2="1"><stop offset="0.00" stop-color="#042dc9"/><stop offset="0.09" stop-color="#001bb1"/><stop offset="0.18" stop-color="#0018a6"/><stop offset="0.27" stop-color="#0018a7"/><stop offset="0.36" stop-color="#0e8cf3"/><stop offset="0.45" stop-color="#0841e0"/><stop offset="0.55" stop-color="#0c65ec"/><stop offset="0.64" stop-color="#26eb71"/><stop offset="0.73" stop-color="#26ed64"/><stop offset="0.82" stop-color="#25e889"/><stop offset="0.91" stop-color="#0b61eb"/><stop offset="1.00" stop-color="#15b5f8"/></linearGradient><linearGradient id="g82" x2="0" y2="1"><stop offset="0.00" stop-color="#0019aa"/><stop offset="0.09" stop-color="#001bb1"/><stop offset="0.18" stop-color="#001bb1"/><stop offset="0.27" stop-color="#000974"/><stop offset="0.36" stop-color="#0841e0"/><stop offset="0.45" stop-color="#001bb0"/><stop offset="0.55" stop-color="#0a49e6"/><stop offset="0.64" stop-color="#24e69f"/><stop offset="0.73" stop-color="#24e2c1"/><stop offset="0.82" stop-color="#24dfea"/><stop offset="0.91" stop-color="#1fd0f8"/><stop offset="1.00" stop-color="#0a50e7"/></linearGradient><linearGradient id="g83" x2="0" y2="1"><stop offset="0.00" stop-color="#21d6f8"/><stop offset="0.09" stop-color="#16b8f8"/><stop offset="0.18" stop-color="#18bbf8"/><stop offset="0.27" stop-color="#24e0de"/><stop offset="0.36" stop-color="#24e0de"/><stop offset="0.45" stop-color="#24e0de"/><stop offset="0.55" stop-color="#27ef50"/><stop offset="0.64" stop-color="#2ff443"/><stop offset="0.73" stop-color="#40ff28"/><stop offset="0.82" stop-color="#40ff28"/><stop offset="0.91" stop-color="#40ff28"/><stop offset="1.00" stop-color="#26eb70"/></linearGradient><linearGradient id="g84" x2="0" y2="1"><stop offset="0.00" stop-color="#0a4ae6"/><stop offset="0.09" stop-color="#0d7bf0"/><stop offset="0.18" stop-color="#00118f"/><stop offset="0.27" stop-color="#24e0de"/><stop offset="0.36" stop-color="#24e0de"/><stop offset="0.45" stop-color="#15b3f8"/><stop offset="0.55" stop-color="#24e0de"/><stop offset="0.64" stop-color="#27ee5b"/><stop offset="0.73" stop-color="#40ff28"/><stop offset="0.82" stop-color="#2cf248"/><stop offset="0.91" stop-color="#27ef50"/><stop offset="1.00" stop-color="#28f04e"/></linearGradient><linearGradient id="g85" x2="0" y2="1"><stop offset="0.00" stop-color="#001395"/><stop offset="0.09" stop-color="#000f89"/><stop offset="0.18" stop-color="#000f86"/><stop offset="0.27" stop-color="#0636d3"/><stop offset="0.36" stop-color="#001db6"/><stop offset="0.45" stop-color="#0638d6"/><stop offset="0.55" stop-color="#1cc9f8"/><stop offset="0.64" stop-color="#11a8f8"/><stop offset="0.73" stop-color="#24e88f"/><stop offset="0.82" stop-color="#27ed62"/><stop offset="0.91" stop-color="#23ddf8"/><stop offset="1.00" stop-color="#11a7f8"/></linearGradient><linearGradient id="g86" x2="0" y2="1"><stop offset="0.00" stop-color="#0019ac"/><stop offset="0.09" stop-color="#000b7b"/><stop offset="0.18" stop-color="#000f87"/><stop offset="0.27" stop-color="#12abf8"/><stop offset="0.36" stop-color="#24e0de"/><stop offset="0.45" stop-color="#0943e2"/><stop offset="0.55" stop-color="#24e0de"/><stop offset="0.64" stop-color="#22d8f8"/><stop offset="0.73" stop-color="#27ee5a"/><stop offset="0.82" stop-color="#2ef444"/><stop offset="0.91" stop-color="#25e987"/><stop offset="1.00" stop-color="#24e2cb"/></linearGradient><linearGradient id="g87" x2="0" y2="1"><stop offset="0.00" stop-color="#001190"/><stop offset="0.09" stop-color="#00086e"/><stop offset="0.18" stop-color="#00086e"/><stop offset="0.27" stop-color="#001396"/><stop offset="0.36" stop-color="#000f87"/><stop offset="0.45" stop-color="#001bb2"/><stop offset="0.55" stop-color="#00149a"/><stop offset="0.64" stop-color="#11a7f8"/><stop offset="0.73" stop-color="#1dcbf8"/><stop offset="0.82" stop-color="#25ea7b"/><stop offset="0.91" stop-color="#15b2f8"/><stop offset="1.00" stop-color="#042fca"/></linearGradient><linearGradient id="g88" x2="0" y2="1"><stop offset="0.00" stop-color="#0a47e6"/><stop offset="0.09" stop-color="#00086e"/><stop offset="0.18" stop-color="#00108c"/><stop offset="0.27" stop-color="#000d81"/><stop offset="0.36" stop-color="#0637d4"/><stop offset="0.45" stop-color="#001bb1"/><stop offset="0.55" stop-color="#0f9df6"/><stop offset="0.64" stop-color="#24e69c"/><stop offset="0.73" stop-color="#25e888"/><stop offset="0.82" stop-color="#24e3be"/><stop offset="0.91" stop-color="#24e2c7"/><stop offset="1.00" stop-color="#1bc6f8"/></linearGradient><linearGradient id="g89" x2="0" y2="1"><stop offset="0.00" stop-color="#001396"/><stop offset="0.09" stop-color="#00086e"/><stop offset="0.18" stop-color="#000b7a"/><stop offset="0.27" stop-color="#0121ba"/><stop offset="0.36" stop-color="#0943e2"/><stop offset="0.45" stop-color="#0739d7"/><stop offset="0.55" stop-color="#0d7af0"/><stop offset="0.64" stop-color="#26eb71"/><stop offset="0.73" stop-color="#40ff28"/><stop offset="0.82" stop-color="#26ec6d"/><stop offset="0.91" stop-color="#26ed65"/><stop offset="1.00" stop-color="#11a7f8"/></linearGradient><linearGradient id="g90" x2="0" y2="1"><stop offset="0.00" stop-color="#001aae"/><stop offset="0.09" stop-color="#000a76"/><stop offset="0.18" stop-color="#0531cd"/><stop offset="0.27" stop-color="#0d78ef"/><stop offset="0.36" stop-color="#24e0de"/><stop offset="0.45" stop-color="#0a53e8"/><stop offset="0.55" stop-color="#15b3f8"/><stop offset="0.64" stop-color="#2df346"/><stop offset="0.73" stop-color="#40ff28"/><stop offset="0.82" stop-color="#2cf248"/><stop offset="0.91" stop-color="#3dfd2b"/><stop offset="1.00" stop-color="#24e3c0"/></linearGradient><linearGradient id="g91" x2="0" y2="1"><stop offset="0.00" stop-color="#24e0de"/><stop offset="0.09" stop-color="#0534d0"/><stop offset="0.18" stop-color="#073ad8"/><stop offset="0.27" stop-color="#24e0de"/><stop offset="0.36" stop-color="#0f96f5"/><stop offset="0.45" stop-color="#15b5f8"/><stop offset="0.55" stop-color="#24e0de"/><stop offset="0.64" stop-color="#40ff28"/><stop offset="0.73" stop-color="#40ff28"/><stop offset="0.82" stop-color="#40ff28"/><stop offset="0.91" stop-color="#40ff28"/><stop offset="1.00" stop-color="#27ef51"/></linearGradient><linearGradient id="g92" x2="0" y2="1"><stop offset="0.00" stop-color="#0122bb"/><stop offset="0.09" stop-color="#032ac5"/><stop offset="0.18" stop-color="#0226c1"/><stop offset="0.27" stop-color="#0018a6"/><stop offset="0.36" stop-color="#24dfe8"/><stop offset="0.45" stop-color="#22d9f8"/><stop offset="0.55" stop-color="#24dfe7"/><stop offset="0.64" stop-color="#0e87f2"/><stop offset="0.73" stop-color="#25ea78"/><stop offset="0.82" stop-color="#24e698"/><stop offset="0.91" stop-color="#3afb30"/><stop offset="1.00" stop-color="#1cc7f8"/></linearGradient><linearGradient id="g93" x2="0" y2="1"><stop offset="0.00" stop-color="#24e0de"/><stop offset="0.09" stop-color="#14b0f8"/><stop offset="0.18" stop-color="#22d8f8"/><stop offset="0.27" stop-color="#24e0de"/><stop offset="0.36" stop-color="#24def7"/><stop offset="0.45" stop-color="#24e0de"/><stop offset="0.55" stop-color="#24e0de"/><stop offset="0.64" stop-color="#40ff28"/><stop offset="0.73" stop-color="#40ff28"/><stop offset="0.82" stop-color="#40ff28"/><stop offset="0.91" stop-color="#40ff28"/><stop offset="1.00" stop-color="#26eb75"/></linearGradient><linearGradient id="g94" x2="0" y2="1"><stop offset="0.00" stop-color="#18bcf8"/><stop offset="0.09" stop-color="#0b5eea"/><stop offset="0.18" stop-color="#0f9cf6"/><stop offset="0.27" stop-color="#073bd9"/><stop offset="0.36" stop-color="#17baf8"/><stop offset="0.45" stop-color="#001aad"/><stop offset="0.55" stop-color="#24dfeb"/><stop offset="0.64" stop-color="#1bc5f8"/><stop offset="0.73" stop-color="#1bc6f8"/><stop offset="0.82" stop-color="#24e2c9"/><stop offset="0.91" stop-color="#13adf8"/><stop offset="1.00" stop-color="#1bc6f8"/></linearGradient><linearGradient id="g95" x2="0" y2="1"><stop offset="0.00" stop-color="#0636d3"/><stop offset="0.09" stop-color="#22daf8"/><stop offset="0.18" stop-color="#083fde"/><stop offset="0.27" stop-color="#0b58e9"/><stop offset="0.36" stop-color="#0a51e8"/><stop offset="0.45" stop-color="#0b65eb"/><stop offset="0.55" stop-color="#0e8ef3"/><stop offset="0.64" stop-color="#0f9ff7"/><stop offset="0.73" stop-color="#24e1d0"/><stop offset="0.82" stop-color="#24deed"/><stop offset="0.91" stop-color="#1ecef8"/><stop offset="1.00" stop-color="#0942e1"/></linearGradient><linearGradient id="g96" x2="0" y2="1"><stop offset="0.00" stop-color="#24e0de"/><stop offset="0.09" stop-color="#24def0"/><stop offset="0.18" stop-color="#073cda"/><stop offset="0.27" stop-color="#24e0de"/><stop offset="0.36" stop-color="#24e0de"/><stop offset="0.45" stop-color="#24e0de"/><stop offset="0.55" stop-color="#24e0de"/><stop offset="0.64" stop-color="#24def7"/><stop offset="0.73" stop-color="#39fa32"/><stop offset="0.82" stop-color="#40ff28"/><stop offset="0.91" stop-color="#40ff28"/><stop offset="1.00" stop-color="#24e5a4"/></linearGradient><linearGradient id="g97" x2="0" y2="1"><stop offset="0.00" stop-color="#042eca"/><stop offset="0.09" stop-color="#0639d6"/><stop offset="0.18" stop-color="#0d83f1"/><stop offset="0.27" stop-color="#0b5cea"/><stop offset="0.36" stop-color="#10a5f8"/><stop offset="0.45" stop-color="#0e88f2"/><stop offset="0.55" stop-color="#0123bd"/><stop offset="0.64" stop-color="#073ad8"/><stop offset="0.73" stop-color="#13adf8"/><stop offset="0.82" stop-color="#0d7af0"/><stop offset="0.91" stop-color="#0f9df6"/><stop offset="1.00" stop-color="#083fde"/></linearGradient><linearGradient id="g98" x2="0" y2="1"><stop offset="0.00" stop-color="#0f98f5"/><stop offset="0.09" stop-color="#0c6ced"/><stop offset="0.18" stop-color="#24e0de"/><stop offset="0.27" stop-color="#12aaf8"/><stop offset="0.36" stop-color="#18bcf8"/><stop offset="0.45" stop-color="#0c65ec"/><stop offset="0.55" stop-color="#18bdf8"/><stop offset="0.64" stop-color="#24e2ca"/><stop offset="0.73" stop-color="#24e3bc"/><stop offset="0.82" stop-color="#25ea7b"/><stop offset="0.91" stop-color="#23ddf8"/><stop offset="1.00" stop-color="#24e2c1"/></linearGradient><linearGradient id="g99" x2="0" y2="1"><stop offset="0.00" stop-color="#001eb6"/><stop offset="0.09" stop-color="#001aaf"/><stop offset="0.18" stop-color="#0639d6"/><stop offset="0.27" stop-color="#0a46e6"/><stop offset="0.36" stop-color="#0b5bea"/><stop offset="0.45" stop-color="#0f94f5"/><stop offset="0.55" stop-color="#0636d3"/><stop offset="0.64" stop-color="#1cc9f8"/><stop offset="0.73" stop-color="#24dfe9"/><stop offset="0.82" stop-color="#23ddf8"/><stop offset="0.91" stop-color="#18bcf8"/><stop offset="1.00" stop-color="#0c70ee"/></linearGradient><linearGradient id="g100" x2="0" y2="1"><stop offset="0.00" stop-color="#1ac1f8"/><stop offset="0.09" stop-color="#0f9ff7"/><stop offset="0.18" stop-color="#24def6"/><stop offset="0.27" stop-color="#0f99f5"/><stop offset="0.36" stop-color="#1ac1f8"/><stop offset="0.45" stop-color="#24deef"/><stop offset="0.55" stop-color="#0e8ef3"/><stop offset="0.64" stop-color="#1fd1f8"/><stop offset="0.73" stop-color="#20d5f8"/><stop offset="0.82" stop-color="#24e2ca"/><stop offset="0.91" stop-color="#24e791"/><stop offset="1.00" stop-color="#24e2c4"/></linearGradient><linearGradient id="g101" x2="0" y2="1"><stop offset="0.00" stop-color="#15b3f8"/><stop offset="0.09" stop-color="#1dcbf8"/><stop offset="0.18" stop-color="#24e0de"/><stop offset="0.27" stop-color="#18bdf8"/><stop offset="0.36" stop-color="#19bff8"/><stop offset="0.45" stop-color="#1cc9f8"/><stop offset="0.55" stop-color="#40ff28"/><stop offset="0.64" stop-color="#40ff28"/><stop offset="0.73" stop-color="#29f04d"/><stop offset="0.82" stop-color="#3afb30"/><stop offset="0.91" stop-color="#2cf248"/><stop offset="1.00" stop-color="#24e5a5"/></linearGradient><linearGradient id="g102" x2="0" y2="1"><stop offset="0.00" stop-color="#24e0de"/><stop offset="0.09" stop-color="#24e0de"/><stop offset="0.18" stop-color="#23ddf8"/><stop offset="0.27" stop-color="#2df346"/><stop offset="0.36" stop-color="#2ff443"/><stop offset="0.45" stop-color="#2cf248"/><stop offset="0.55" stop-color="#31f63f"/><stop offset="0.64" stop-color="#27ee5e"/><stop offset="0.73" stop-color="#40ff28"/><stop offset="0.82" stop-color="#40ff28"/><stop offset="0.91" stop-color="#40ff28"/><stop offset="1.00" stop-color="#2df347"/></linearGradient><linearGradient id="g103" x2="0" y2="1"><stop offset="0.00" stop-color="#26ec6d"/><stop offset="0.09" stop-color="#3dfd2c"/><stop offset="0.18" stop-color="#40ff28"/><stop offset="0.27" stop-color="#40ff28"/><stop offset="0.36" stop-color="#40ff28"/><stop offset="0.45" stop-color="#40ff28"/><stop offset="0.55" stop-color="#40ff28"/><stop offset="0.64" stop-color="#40ff28"/><stop offset="0.73" stop-color="#40ff28"/><stop offset="0.82" stop-color="#40ff28"/><stop offset="0.91" stop-color="#40ff28"/><stop offset="1.00" stop-color="#27ee5c"/></linearGradient><linearGradient id="g104" x2="0" y2="1"><stop offset="0.00" stop-color="#24e5a8"/><stop offset="0.09" stop-color="#25ea7e"/><stop offset="0.18" stop-color="#24e3bd"/><stop offset="0.27" stop-color="#28f04f"/><stop offset="0.36" stop-color="#24e2c3"/><stop offset="0.45" stop-color="#24e4b2"/><stop offset="0.55" stop-color="#28f04f"/><stop offset="0.64" stop-color="#27ee5c"/><stop offset="0.73" stop-color="#38fa34"/><stop offset="0.82" stop-color="#30f541"/><stop offset="0.91" stop-color="#26eb70"/><stop offset="1.00" stop-color="#27ee5d"/></linearGradient><linearGradient id="g105" x2="0" y2="1"><stop offset="0.00" stop-color="#0c72ee"/><stop offset="0.09" stop-color="#0d83f1"/><stop offset="0.18" stop-color="#0c72ee"/><stop offset="0.27" stop-color="#24e5a3"/><stop offset="0.36" stop-color="#1eccf8"/><stop offset="0.45" stop-color="#24e69d"/><stop offset="0.55" stop-color="#24deed"/><stop offset="0.64" stop-color="#25e984"/><stop offset="0.73" stop-color="#20d3f8"/><stop offset="0.82" stop-color="#1bc4f8"/><stop offset="0.91" stop-color="#26ec6a"/><stop offset="1.00" stop-color="#1ac1f8"/></linearGradient><linearGradient id="g106" x2="0" y2="1"><stop offset="0.00" stop-color="#0a46e6"/><stop offset="0.09" stop-color="#0534d0"/><stop offset="0.18" stop-color="#0017a4"/><stop offset="0.27" stop-color="#24e5a6"/><stop offset="0.36" stop-color="#24e2c9"/><stop offset="0.45" stop-color="#1fcff8"/><stop offset="0.55" stop-color="#24e794"/><stop offset="0.64" stop-color="#1cc9f8"/><stop offset="0.73" stop-color="#18bcf8"/><stop offset="0.82" stop-color="#24e1d2"/><stop offset="0.91" stop-color="#25ea7a"/><stop offset="1.00" stop-color="#16b6f8"/></linearGradient><linearGradient id="g107" x2="0" y2="1"><stop offset="0.00" stop-color="#23ddf8"/><stop offset="0.09" stop-color="#24e0de"/><stop offset="0.18" stop-color="#24dfe9"/><stop offset="0.27" stop-color="#0e93f4"/><stop offset="0.36" stop-color="#1dcbf8"/><stop offset="0.45" stop-color="#2bf24a"/><stop offset="0.55" stop-color="#24e5a6"/><stop offset="0.64" stop-color="#2af14b"/><stop offset="0.73" stop-color="#27ee59"/><stop offset="0.82" stop-color="#39fb32"/><stop offset="0.91" stop-color="#24e3be"/><stop offset="1.00" stop-color="#24e0d9"/></linearGradient><linearGradient id="g108" x2="0" y2="1"><stop offset="0.00" stop-color="#0638d5"/><stop offset="0.09" stop-color="#001eb7"/><stop offset="0.18" stop-color="#0d75ef"/><stop offset="0.27" stop-color="#0123bd"/><stop offset="0.36" stop-color="#0a52e8"/><stop offset="0.45" stop-color="#0c6fed"/><stop offset="0.55" stop-color="#11a8f8"/><stop offset="0.64" stop-color="#0e8df3"/><stop offset="0.73" stop-color="#1bc4f8"/><stop offset="0.82" stop-color="#25e888"/><stop offset="0.91" stop-color="#24def0"/><stop offset="1.00" stop-color="#0b5dea"/></linearGradient><linearGradient id="g109" x2="0" y2="1"><stop offset="0.00" stop-color="#001bb2"/><stop offset="0.09" stop-color="#001499"/><stop offset="0.18" stop-color="#0019aa"/><stop offset="0.27" stop-color="#00086e"/><stop offset="0.36" stop-color="#0636d3"/><stop offset="0.45" stop-color="#0739d7"/><stop offset="0.55" stop-color="#073bd9"/><stop offset="0.64" stop-color="#001cb4"/><stop offset="0.73" stop-color="#12aaf8"/><stop offset="0.82" stop-color="#001498"/><stop offset="0.91" stop-color="#0329c4"/><stop offset="1.00" stop-color="#0535d1"/></linearGradient><linearGradient id="g110" x2="0" y2="1"><stop offset="0.00" stop-color="#0120b9"/><stop offset="0.09" stop-color="#001bb1"/><stop offset="0.18" stop-color="#0c69ec"/><stop offset="0.27" stop-color="#0b59e9"/><stop offset="0.36" stop-color="#0d7bf0"/><stop offset="0.45" stop-color="#032cc7"/><stop offset="0.55" stop-color="#0c71ee"/><stop offset="0.64" stop-color="#0c74ee"/><stop offset="0.73" stop-color="#24e3b8"/><stop offset="0.82" stop-color="#24deee"/><stop offset="0.91" stop-color="#24e1d6"/><stop offset="1.00" stop-color="#1dccf8"/></linearGradient><linearGradient id="g111" x2="0" y2="1"><stop offset="0.00" stop-color="#20d5f8"/><stop offset="0.09" stop-color="#24e0de"/><stop offset="0.18" stop-color="#24e0de"/><stop offset="0.27" stop-color="#19bef8"/><stop offset="0.36" stop-color="#24e0de"/><stop offset="0.45" stop-color="#17baf8"/><stop offset="0.55" stop-color="#21d8f8"/><stop offset="0.64" stop-color="#24e0de"/><stop offset="0.73" stop-color="#1bc5f8"/><stop offset="0.82" stop-color="#24e3b8"/><stop offset="0.91" stop-color="#24deef"/><stop offset="1.00" stop-color="#25e983"/></linearGradient><linearGradient id="g112" x2="0" y2="1"><stop offset="0.00" stop-color="#0d7ff0"/><stop offset="0.09" stop-color="#1ecef8"/><stop offset="0.18" stop-color="#21d5f8"/><stop offset="0.27" stop-color="#0635d2"/><stop offset="0.36" stop-color="#0c65ec"/><stop offset="0.45" stop-color="#0f9cf6"/><stop offset="0.55" stop-color="#24e0de"/><stop offset="0.64" stop-color="#19c0f8"/><stop offset="0.73" stop-color="#24e4b0"/><stop offset="0.82" stop-color="#24e5a6"/><stop offset="0.91" stop-color="#27ee5c"/><stop offset="1.00" stop-color="#24e1d5"/></linearGradient><linearGradient id="g113" x2="0" y2="1"><stop offset="0.00" stop-color="#20d2f8"/><stop offset="0.09" stop-color="#0b5fea"/><stop offset="0.18" stop-color="#032bc6"/><stop offset="0.27" stop-color="#0c67ec"/><stop offset="0.36" stop-color="#0b5ae9"/><stop offset="0.45" stop-color="#042eca"/><stop offset="0.55" stop-color="#0d82f1"/><stop offset="0.64" stop-color="#0639d6"/><stop offset="0.73" stop-color="#0b5bea"/><stop offset="0.82" stop-color="#0b63eb"/><stop offset="0.91" stop-color="#1cc6f8"/><stop offset="1.00" stop-color="#073ddb"/></linearGradient><linearGradient id="g114" x2="0" y2="1"><stop offset="0.00" stop-color="#073cda"/><stop offset="0.09" stop-color="#1ac3f8"/><stop offset="0.18" stop-color="#24e0de"/><stop offset="0.27" stop-color="#0fa0f7"/><stop offset="0.36" stop-color="#12aaf8"/><stop offset="0.45" stop-color="#23ddf8"/><stop offset="0.55" stop-color="#24e0de"/><stop offset="0.64" stop-color="#17b9f8"/><stop offset="0.73" stop-color="#21d7f8"/><stop offset="0.82" stop-color="#2df346"/><stop offset="0.91" stop-color="#24e5a2"/><stop offset="1.00" stop-color="#23ddf8"/></linearGradient><linearGradient id="g115" x2="0" y2="1"><stop offset="0.00" stop-color="#0c6fed"/><stop offset="0.09" stop-color="#0c6eed"/><stop offset="0.18" stop-color="#001bb1"/><stop offset="0.27" stop-color="#11a8f8"/><stop offset="0.36" stop-color="#13aef8"/><stop offset="0.45" stop-color="#0d7ff1"/><stop offset="0.55" stop-color="#24e0de"/><stop offset="0.64" stop-color="#11a7f8"/><stop offset="0.73" stop-color="#0942e2"/><stop offset="0.82" stop-color="#24e5a1"/><stop offset="0.91" stop-color="#14b0f8"/><stop offset="1.00" stop-color="#24e0de"/></linearGradient><linearGradient id="g116" x2="0" y2="1"><stop offset="0.00" stop-color="#0e8df3"/><stop offset="0.09" stop-color="#0e92f4"/><stop offset="0.18" stop-color="#24dfe9"/><stop offset="0.27" stop-color="#24e0de"/><stop offset="0.36" stop-color="#1bc5f8"/><stop offset="0.45" stop-color="#0b63eb"/><stop offset="0.55" stop-color="#21d8f8"/><stop offset="0.64" stop-color="#0e91f4"/><stop offset="0.73" stop-color="#24e0de"/><stop offset="0.82" stop-color="#24e0df"/><stop offset="0.91" stop-color="#1fd1f8"/><stop offset="1.00" stop-color="#24e0de"/></linearGradient><linearGradient id="g117" x2="0" y2="1"><stop offset="0.00" stop-color="#1ecef8"/><stop offset="0.09" stop-color="#24e0de"/><stop offset="0.18" stop-color="#0d7ef0"/><stop offset="0.27" stop-color="#11a8f8"/><stop offset="0.36" stop-color="#0019ac"/><stop offset="0.45" stop-color="#0b5eea"/><stop offset="0.55" stop-color="#24dfe9"/><stop offset="0.64" stop-color="#032cc7"/><stop offset="0.73" stop-color="#1fd1f8"/><stop offset="0.82" stop-color="#1bc5f8"/><stop offset="0.91" stop-color="#15b2f8"/><stop offset="1.00" stop-color="#20d2f8"/></linearGradient><linearGradient id="g118" x2="0" y2="1"><stop offset="0.00" stop-color="#0532ce"/><stop offset="0.09" stop-color="#0943e3"/><stop offset="0.18" stop-color="#00086e"/><stop offset="0.27" stop-color="#00108c"/><stop offset="0.36" stop-color="#00086e"/><stop offset="0.45" stop-color="#0017a3"/><stop offset="0.55" stop-color="#001bb2"/><stop offset="0.64" stop-color="#0635d2"/><stop offset="0.73" stop-color="#0224be"/><stop offset="0.82" stop-color="#17b9f8"/><stop offset="0.91" stop-color="#0e85f2"/><stop offset="1.00" stop-color="#0226c0"/></linearGradient><linearGradient id="g119" x2="0" y2="1"><stop offset="0.00" stop-color="#24e0de"/><stop offset="0.09" stop-color="#24dfe5"/><stop offset="0.18" stop-color="#23dbf8"/><stop offset="0.27" stop-color="#24e0de"/><stop offset="0.36" stop-color="#24e0de"/><stop offset="0.45" stop-color="#19c0f8"/><stop offset="0.55" stop-color="#24dfe8"/><stop offset="0.64" stop-color="#24e0de"/><stop offset="0.73" stop-color="#24e0de"/><stop offset="0.82" stop-color="#24e0de"/><stop offset="0.91" stop-color="#24dfeb"/><stop offset="1.00" stop-color="#24e0de"/></linearGradient><linearGradient id="g120" x2="0" y2="1"><stop offset="0.00" stop-color="#001bb2"/><stop offset="0.09" stop-color="#24def5"/><stop offset="0.18" stop-color="#0b62eb"/><stop offset="0.27" stop-color="#0018a8"/><stop offset="0.36" stop-color="#0e93f4"/><stop offset="0.45" stop-color="#0531cd"/><stop offset="0.55" stop-color="#18bdf8"/><stop offset="0.64" stop-color="#0533d0"/><stop offset="0.73" stop-color="#18bdf8"/><stop offset="0.82" stop-color="#0226c0"/><stop offset="0.91" stop-color="#032bc6"/><stop offset="1.00" stop-color="#0c67ec"/></linearGradient><linearGradient id="g121" x2="0" y2="1"><stop offset="0.00" stop-color="#24e0de"/><stop offset="0.09" stop-color="#24e0de"/><stop offset="0.18" stop-color="#24e0de"/><stop offset="0.27" stop-color="#1cc7f8"/><stop offset="0.36" stop-color="#16b6f8"/><stop offset="0.45" stop-color="#24e0de"/><stop offset="0.55" stop-color="#24dfe4"/><stop offset="0.64" stop-color="#20d4f8"/><stop offset="0.73" stop-color="#23ddf8"/><stop offset="0.82" stop-color="#24e0de"/><stop offset="0.91" stop-color="#24e0de"/><stop offset="1.00" stop-color="#24deee"/></linearGradient><linearGradient id="g122" x2="0" y2="1"><stop offset="0.00" stop-color="#24e0de"/><stop offset="0.09" stop-color="#0f95f5"/><stop offset="0.18" stop-color="#24dfe3"/><stop offset="0.27" stop-color="#24e0de"/><stop offset="0.36" stop-color="#0f97f5"/><stop offset="0.45" stop-color="#24dfe2"/><stop offset="0.55" stop-color="#0225bf"/><stop offset="0.64" stop-color="#19bef8"/><stop offset="0.73" stop-color="#1dc9f8"/><stop offset="0.82" stop-color="#1fd0f8"/><stop offset="0.91" stop-color="#0e8cf3"/><stop offset="1.00" stop-color="#24e0de"/></linearGradient><linearGradient id="g123" x2="0" y2="1"><stop offset="0.00" stop-color="#0e88f2"/><stop offset="0.09" stop-color="#0a4fe7"/><stop offset="0.18" stop-color="#0b61eb"/><stop offset="0.27" stop-color="#0c66ec"/><stop offset="0.36" stop-color="#0945e5"/><stop offset="0.45" stop-color="#12abf8"/><stop offset="0.55" stop-color="#1fd2f8"/><stop offset="0.64" stop-color="#10a4f8"/><stop offset="0.73" stop-color="#24def7"/><stop offset="0.82" stop-color="#11a7f8"/><stop offset="0.91" stop-color="#24dfe7"/><stop offset="1.00" stop-color="#1bc5f8"/></linearGradient><linearGradient id="g124" x2="0" y2="1"><stop offset="0.00" stop-color="#0a4de7"/><stop offset="0.09" stop-color="#24def2"/><stop offset="0.18" stop-color="#24e0de"/><stop offset="0.27" stop-color="#0b5ae9"/><stop offset="0.36" stop-color="#00149b"/><stop offset="0.45" stop-color="#1cc9f8"/><stop offset="0.55" stop-color="#0d7ff1"/><stop offset="0.64" stop-color="#24e0de"/><stop offset="0.73" stop-color="#15b4f8"/><stop offset="0.82" stop-color="#0fa1f7"/><stop offset="0.91" stop-color="#10a4f8"/><stop offset="1.00" stop-color="#15b4f8"/></linearGradient><linearGradient id="g125" x2="0" y2="1"><stop offset="0.00" stop-color="#0329c3"/><stop offset="0.09" stop-color="#0017a5"/><stop offset="0.18" stop-color="#0a46e6"/><stop offset="0.27" stop-color="#0943e3"/><stop offset="0.36" stop-color="#001bb1"/><stop offset="0.45" stop-color="#0d7bf0"/><stop offset="0.55" stop-color="#24def2"/><stop offset="0.64" stop-color="#0f9df6"/><stop offset="0.73" stop-color="#0b57e9"/><stop offset="0.82" stop-color="#1ac1f8"/><stop offset="0.91" stop-color="#073ad8"/><stop offset="1.00" stop-color="#0739d7"/></linearGradient><linearGradient id="g126" x2="0" y2="1"><stop offset="0.00" stop-color="#24e0de"/><stop offset="0.09" stop-color="#0018a8"/><stop offset="0.18" stop-color="#042dc8"/><stop offset="0.27" stop-color="#032ac4"/><stop offset="0.36" stop-color="#0532ce"/><stop offset="0.45" stop-color="#0637d4"/><stop offset="0.55" stop-color="#0225be"/><stop offset="0.64" stop-color="#0942e1"/><stop offset="0.73" stop-color="#0225be"/><stop offset="0.82" stop-color="#001cb4"/><stop offset="0.91" stop-color="#0a4de7"/><stop offset="1.00" stop-color="#0c6bed"/></linearGradient><linearGradient id="g127" x2="0" y2="1"><stop offset="0.00" stop-color="#0d81f1"/><stop offset="0.09" stop-color="#22daf8"/><stop offset="0.18" stop-color="#19bef8"/><stop offset="0.27" stop-color="#1ac2f8"/><stop offset="0.36" stop-color="#0a47e6"/><stop offset="0.45" stop-color="#14b0f8"/><stop offset="0.55" stop-color="#14b0f8"/><stop offset="0.64" stop-color="#24e0de"/><stop offset="0.73" stop-color="#13aef8"/><stop offset="0.82" stop-color="#21d6f8"/><stop offset="0.91" stop-color="#24e0de"/><stop offset="1.00" stop-color="#15b4f8"/></linearGradient><linearGradient id="g128" x2="0" y2="1"><stop offset="0.00" stop-color="#24e0de"/><stop offset="0.09" stop-color="#17b9f8"/><stop offset="0.18" stop-color="#0fa3f7"/><stop offset="0.27" stop-color="#24e0de"/><stop offset="0.36" stop-color="#0b63eb"/><stop offset="0.45" stop-color="#24e0de"/><stop offset="0.55" stop-color="#0e94f4"/><stop offset="0.64" stop-color="#0533cf"/><stop offset="0.73" stop-color="#0840df"/><stop offset="0.82" stop-color="#21d5f8"/><stop offset="0.91" stop-color="#24e0de"/><stop offset="1.00" stop-color="#24e0de"/></linearGradient><linearGradient id="g129" x2="0" y2="1"><stop offset="0.00" stop-color="#12acf8"/><stop offset="0.09" stop-color="#18bcf8"/><stop offset="0.18" stop-color="#0e86f2"/><stop offset="0.27" stop-color="#0945e5"/><stop offset="0.36" stop-color="#11a7f8"/><stop offset="0.45" stop-color="#1bc5f8"/><stop offset="0.55" stop-color="#001bb2"/><stop offset="0.64" stop-color="#24e0de"/><stop offset="0.73" stop-color="#24dfe5"/><stop offset="0.82" stop-color="#19bef8"/><stop offset="0.91" stop-color="#24e0de"/><stop offset="1.00" stop-color="#14aff8"/></linearGradient><linearGradient id="g130" x2="0" y2="1"><stop offset="0.00" stop-color="#00159b"/><stop offset="0.09" stop-color="#0b56e9"/><stop offset="0.18" stop-color="#042fcb"/><stop offset="0.27" stop-color="#0018a6"/><stop offset="0.36" stop-color="#0b5bea"/><stop offset="0.45" stop-color="#0e92f4"/><stop offset="0.55" stop-color="#0636d2"/><stop offset="0.64" stop-color="#083ddc"/><stop offset="0.73" stop-color="#24def5"/><stop offset="0.82" stop-color="#15b3f8"/><stop offset="0.91" stop-color="#24e0de"/><stop offset="1.00" stop-color="#24e0de"/></linearGradient><linearGradient id="g131" x2="0" y2="1"><stop offset="0.00" stop-color="#0e92f4"/><stop offset="0.09" stop-color="#15b4f8"/><stop offset="0.18" stop-color="#24e0de"/><stop offset="0.27" stop-color="#00169f"/><stop offset="0.36" stop-color="#0d7af0"/><stop offset="0.45" stop-color="#0228c2"/><stop offset="0.55" stop-color="#14b1f8"/><stop offset="0.64" stop-color="#083fdd"/><stop offset="0.73" stop-color="#24e0de"/><stop offset="0.82" stop-color="#0943e3"/><stop offset="0.91" stop-color="#0c74ee"/><stop offset="1.00" stop-color="#1dcaf8"/></linearGradient><linearGradient id="g132" x2="0" y2="1"><stop offset="0.00" stop-color="#0840df"/><stop offset="0.09" stop-color="#13aff8"/><stop offset="0.18" stop-color="#24deed"/><stop offset="0.27" stop-color="#0fa2f7"/><stop offset="0.36" stop-color="#24e0e0"/><stop offset="0.45" stop-color="#001bb0"/><stop offset="0.55" stop-color="#0840df"/><stop offset="0.64" stop-color="#0c68ec"/><stop offset="0.73" stop-color="#20d2f8"/><stop offset="0.82" stop-color="#24e0de"/><stop offset="0.91" stop-color="#0c66ec"/><stop offset="1.00" stop-color="#0b5dea"/></linearGradient><linearGradient id="g133" x2="0" y2="1"><stop offset="0.00" stop-color="#24e0de"/><stop offset="0.09" stop-color="#24e0de"/><stop offset="0.18" stop-color="#24e0de"/><stop offset="0.27" stop-color="#24e0de"/><stop offset="0.36" stop-color="#0f9cf6"/><stop offset="0.45" stop-color="#24e0de"/><stop offset="0.55" stop-color="#24e0e0"/><stop offset="0.64" stop-color="#0b61eb"/><stop offset="0.73" stop-color="#24e0de"/><stop offset="0.82" stop-color="#24e0de"/><stop offset="0.91" stop-color="#0d83f1"/><stop offset="1.00" stop-color="#24e0de"/></linearGradient><linearGradient id="g134" x2="0" y2="1"><stop offset="0.00" stop-color="#0533cf"/><stop offset="0.09" stop-color="#0017a5"/><stop offset="0.18" stop-color="#001aad"/><stop offset="0.27" stop-color="#00149b"/><stop offset="0.36" stop-color="#00118e"/><stop offset="0.45" stop-color="#0840df"/><stop offset="0.55" stop-color="#042fcb"/><stop offset="0.64" stop-color="#000c7d"/><stop offset="0.73" stop-color="#0019ab"/><stop offset="0.82" stop-color="#0123bc"/><stop offset="0.91" stop-color="#001aae"/><stop offset="1.00" stop-color="#0a52e8"/></linearGradient><linearGradient id="g135" x2="0" y2="1"><stop offset="0.00" stop-color="#00149a"/><stop offset="0.09" stop-color="#073ad8"/><stop offset="0.18" stop-color="#0942e1"/><stop offset="0.27" stop-color="#12acf8"/><stop offset="0.36" stop-color="#0a55e8"/><stop offset="0.45" stop-color="#073ad7"/><stop offset="0.55" stop-color="#0fa1f7"/><stop offset="0.64" stop-color="#0b5ae9"/><stop offset="0.73" stop-color="#24e0de"/><stop offset="0.82" stop-color="#0e8af3"/><stop offset="0.91" stop-color="#0c74ee"/><stop offset="1.00" stop-color="#0a55e8"/></linearGradient><linearGradient id="g136" x2="0" y2="1"><stop offset="0.00" stop-color="#24e0de"/><stop offset="0.09" stop-color="#24dfeb"/><stop offset="0.18" stop-color="#0a48e6"/><stop offset="0.27" stop-color="#24e0de"/><stop offset="0.36" stop-color="#24e0de"/><stop offset="0.45" stop-color="#24e0de"/><stop offset="0.55" stop-color="#24def4"/><stop offset="0.64" stop-color="#1ecef8"/><stop offset="0.73" stop-color="#24dfe2"/><stop offset="0.82" stop-color="#0c69ec"/><stop offset="0.91" stop-color="#24e0de"/><stop offset="1.00" stop-color="#1fd1f8"/></linearGradient><linearGradient id="g137" x2="0" y2="1"><stop offset="0.00" stop-color="#0019ac"/><stop offset="0.09" stop-color="#1fd0f8"/><stop offset="0.18" stop-color="#0430cb"/><stop offset="0.27" stop-color="#0943e3"/><stop offset="0.36" stop-color="#0a4ce7"/><stop offset="0.45" stop-color="#0638d6"/><stop offset="0.55" stop-color="#083fde"/><stop offset="0.64" stop-color="#21d7f8"/><stop offset="0.73" stop-color="#13aff8"/><stop offset="0.82" stop-color="#13aef8"/><stop offset="0.91" stop-color="#15b3f8"/><stop offset="1.00" stop-color="#0329c4"/></linearGradient><linearGradient id="g138" x2="0" y2="1"><stop offset="0.00" stop-color="#24def1"/><stop offset="0.09" stop-color="#0c6ded"/><stop offset="0.18" stop-color="#21d6f8"/><stop offset="0.27" stop-color="#23ddf8"/><stop offset="0.36" stop-color="#001eb6"/><stop offset="0.45" stop-color="#0d7cf0"/><stop offset="0.55" stop-color="#0c6eed"/><stop offset="0.64" stop-color="#0942e2"/><stop offset="0.73" stop-color="#0c65ec"/><stop offset="0.82" stop-color="#0636d4"/><stop offset="0.91" stop-color="#0739d7"/><stop offset="1.00" stop-color="#1cc8f8"/></linearGradient><linearGradient id="g139" x2="0" y2="1"><stop offset="0.00" stop-color="#1dcaf8"/><stop offset="0.09" stop-color="#0e90f4"/><stop offset="0.18" stop-color="#24e0de"/><stop offset="0.27" stop-color="#10a4f8"/><stop offset="0.36" stop-color="#24e0de"/><stop offset="0.45" stop-color="#0945e5"/><stop offset="0.55" stop-color="#20d3f8"/><stop offset="0.64" stop-color="#24e0de"/><stop offset="0.73" stop-color="#0fa1f7"/><stop offset="0.82" stop-color="#24deed"/><stop offset="0.91" stop-color="#24e0de"/><stop offset="1.00" stop-color="#24e0de"/></linearGradient><linearGradient id="g140" x2="0" y2="1"><stop offset="0.00" stop-color="#001db6"/><stop offset="0.09" stop-color="#0e90f4"/><stop offset="0.18" stop-color="#0639d6"/><stop offset="0.27" stop-color="#0e8ff4"/><stop offset="0.36" stop-color="#1bc5f8"/><stop offset="0.45" stop-color="#14b1f8"/><stop offset="0.55" stop-color="#0e8ff3"/><stop offset="0.64" stop-color="#0a4ce7"/><stop offset="0.73" stop-color="#0a49e6"/><stop offset="0.82" stop-color="#0f97f5"/><stop offset="0.91" stop-color="#23ddf8"/><stop offset="1.00" stop-color="#0531cd"/></linearGradient><linearGradient id="g141" x2="0" y2="1"><stop offset="0.00" stop-color="#0d75ef"/><stop offset="0.09" stop-color="#0c6bed"/><stop offset="0.18" stop-color="#17baf8"/><stop offset="0.27" stop-color="#20d3f8"/><stop offset="0.36" stop-color="#24dfec"/><stop offset="0.45" stop-color="#24e0de"/><stop offset="0.55" stop-color="#24deef"/><stop offset="0.64" stop-color="#20d4f8"/><stop offset="0.73" stop-color="#24e0de"/><stop offset="0.82" stop-color="#0840df"/><stop offset="0.91" stop-color="#24e0de"/><stop offset="1.00" stop-color="#0d7af0"/></linearGradient><linearGradient id="g142" x2="0" y2="1"><stop offset="0.00" stop-color="#1dccf8"/><stop offset="0.09" stop-color="#24dfe5"/><stop offset="0.18" stop-color="#24e0de"/><stop offset="0.27" stop-color="#24e0df"/><stop offset="0.36" stop-color="#11a8f8"/><stop offset="0.45" stop-color="#0b5eea"/><stop offset="0.55" stop-color="#24def4"/><stop offset="0.64" stop-color="#20d2f8"/><stop offset="0.73" stop-color="#24e0de"/><stop offset="0.82" stop-color="#24e0de"/><stop offset="0.91" stop-color="#0f9bf6"/><stop offset="1.00" stop-color="#1dcaf8"/></linearGradient><linearGradient id="g143" x2="0" y2="1"><stop offset="0.00" stop-color="#0c6bed"/><stop offset="0.09" stop-color="#0f97f5"/><stop offset="0.18" stop-color="#0f94f5"/><stop offset="0.27" stop-color="#00118f"/><stop offset="0.36" stop-color="#0b5bea"/><stop offset="0.45" stop-color="#001bb1"/><stop offset="0.55" stop-color="#0635d2"/><stop offset="0.64" stop-color="#0840df"/><stop offset="0.73" stop-color="#0c70ee"/><stop offset="0.82" stop-color="#1cc7f8"/><stop offset="0.91" stop-color="#0d7cf0"/><stop offset="1.00" stop-color="#0b58e9"/></linearGradient><linearGradient id="g144" x2="0" y2="1"><stop offset="0.00" stop-color="#24e0de"/><stop offset="0.09" stop-color="#24e0de"/><stop offset="0.18" stop-color="#24e0de"/><stop offset="0.27" stop-color="#24e0de"/><stop offset="0.36" stop-color="#12abf8"/><stop offset="0.45" stop-color="#22daf8"/><stop offset="0.55" stop-color="#24e0de"/><stop offset="0.64" stop-color="#24e0de"/><stop offset="0.73" stop-color="#24e0de"/><stop offset="0.82" stop-color="#24e0de"/><stop offset="0.91" stop-color="#24e0de"/><stop offset="1.00" stop-color="#24e0de"/></linearGradient><linearGradient id="g145" x2="0" y2="1"><stop offset="0.00" stop-color="#0d76ef"/><stop offset="0.09" stop-color="#0f9af6"/><stop offset="0.18" stop-color="#0c65ec"/><stop offset="0.27" stop-color="#0c6fed"/><stop offset="0.36" stop-color="#073cda"/><stop offset="0.45" stop-color="#1ecef8"/><stop offset="0.55" stop-color="#1dcbf8"/><stop offset="0.64" stop-color="#0b59e9"/><stop offset="0.73" stop-color="#1ecef8"/><stop offset="0.82" stop-color="#0121ba"/><stop offset="0.91" stop-color="#0d79ef"/><stop offset="1.00" stop-color="#083edd"/></linearGradient><linearGradient id="g146" x2="0" y2="1"><stop offset="0.00" stop-color="#16b7f8"/><stop offset="0.09" stop-color="#0018a6"/><stop offset="0.18" stop-color="#0d76ef"/><stop offset="0.27" stop-color="#0e92f4"/><stop offset="0.36" stop-color="#073cda"/><stop offset="0.45" stop-color="#0017a2"/><stop offset="0.55" stop-color="#0e8cf3"/><stop offset="0.64" stop-color="#0017a3"/><stop offset="0.73" stop-color="#0a52e8"/><stop offset="0.82" stop-color="#0e91f4"/><stop offset="0.91" stop-color="#0c6bed"/><stop offset="1.00" stop-color="#0017a5"/></linearGradient><linearGradient id="g147" x2="0" y2="1"><stop offset="0.00" stop-color="#001bb3"/><stop offset="0.09" stop-color="#24e0de"/><stop offset="0.18" stop-color="#001aad"/><stop offset="0.27" stop-color="#001ab0"/><stop offset="0.36" stop-color="#0019a9"/><stop offset="0.45" stop-color="#0a4de7"/><stop offset="0.55" stop-color="#0a54e8"/><stop offset="0.64" stop-color="#0944e4"/><stop offset="0.73" stop-color="#042ec9"/><stop offset="0.82" stop-color="#0e93f4"/><stop offset="0.91" stop-color="#0534d1"/><stop offset="1.00" stop-color="#1bc3f8"/></linearGradient><linearGradient id="g148" x2="0" y2="1"><stop offset="0.00" stop-color="#0739d7"/><stop offset="0.09" stop-color="#24e0de"/><stop offset="0.18" stop-color="#24e0de"/><stop offset="0.27" stop-color="#032ac4"/><stop offset="0.36" stop-color="#0122bc"/><stop offset="0.45" stop-color="#1bc4f8"/><stop offset="0.55" stop-color="#0fa2f7"/><stop offset="0.64" stop-color="#24dfeb"/><stop offset="0.73" stop-color="#13adf8"/><stop offset="0.82" stop-color="#12aaf8"/><stop offset="0.91" stop-color="#0b5dea"/><stop offset="1.00" stop-color="#0e90f4"/></linearGradient><linearGradient id="g149" x2="0" y2="1"><stop offset="0.00" stop-color="#18bbf8"/><stop offset="0.09" stop-color="#24e0de"/><stop offset="0.18" stop-color="#042fca"/><stop offset="0.27" stop-color="#24e0de"/><stop offset="0.36" stop-color="#24e0de"/><stop offset="0.45" stop-color="#23ddf8"/><stop offset="0.55" stop-color="#0c6ced"/><stop offset="0.64" stop-color="#0d82f1"/><stop offset="0.73" stop-color="#24e0de"/><stop offset="0.82" stop-color="#24e0de"/><stop offset="0.91" stop-color="#0f9ff7"/><stop offset="1.00" stop-color="#24e0de"/></linearGradient><linearGradient id="g150" x2="0" y2="1"><stop offset="0.00" stop-color="#24e0de"/><stop offset="0.09" stop-color="#001499"/><stop offset="0.18" stop-color="#073ad7"/><stop offset="0.27" stop-color="#001499"/><stop offset="0.36" stop-color="#00149a"/><stop offset="0.45" stop-color="#0840df"/><stop offset="0.55" stop-color="#001291"/><stop offset="0.64" stop-color="#001db5"/><stop offset="0.73" stop-color="#0018a9"/><stop offset="0.82" stop-color="#032bc6"/><stop offset="0.91" stop-color="#073cda"/><stop offset="1.00" stop-color="#23dcf8"/></linearGradient><linearGradient id="g151" x2="0" y2="1"><stop offset="0.00" stop-color="#073cda"/><stop offset="0.09" stop-color="#001db5"/><stop offset="0.18" stop-color="#00159d"/><stop offset="0.27" stop-color="#00159c"/><stop offset="0.36" stop-color="#00086e"/><stop offset="0.45" stop-color="#001291"/><stop offset="0.55" stop-color="#000972"/><stop offset="0.64" stop-color="#000b7b"/><stop offset="0.73" stop-color="#083fde"/><stop offset="0.82" stop-color="#000e84"/><stop offset="0.91" stop-color="#0018a7"/><stop offset="1.00" stop-color="#0019ab"/></linearGradient><linearGradient id="g152" x2="0" y2="1"><stop offset="0.00" stop-color="#0b65eb"/><stop offset="0.09" stop-color="#0e8ef3"/><stop offset="0.18" stop-color="#0016a0"/><stop offset="0.27" stop-color="#0227c1"/><stop offset="0.36" stop-color="#001db6"/><stop offset="0.45" stop-color="#000b79"/><stop offset="0.55" stop-color="#0016a1"/><stop offset="0.64" stop-color="#1bc5f8"/><stop offset="0.73" stop-color="#0017a3"/><stop offset="0.82" stop-color="#0840de"/><stop offset="0.91" stop-color="#0122bb"/><stop offset="1.00" stop-color="#14aff8"/></linearGradient><linearGradient id="g153" x2="0" y2="1"><stop offset="0.00" stop-color="#0b62eb"/><stop offset="0.09" stop-color="#0840df"/><stop offset="0.18" stop-color="#001fb8"/><stop offset="0.27" stop-color="#0e89f2"/><stop offset="0.36" stop-color="#0f9ef6"/><stop offset="0.45" stop-color="#24def5"/><stop offset="0.55" stop-color="#0e8af3"/><stop offset="0.64" stop-color="#0d7af0"/><stop offset="0.73" stop-color="#0e8df3"/><stop offset="0.82" stop-color="#24e0de"/><stop offset="0.91" stop-color="#24e0de"/><stop offset="1.00" stop-color="#24dfe5"/></linearGradient><linearGradient id="g154" x2="0" y2="1"><stop offset="0.00" stop-color="#073cda"/><stop offset="0.09" stop-color="#0018a8"/><stop offset="0.18" stop-color="#0840df"/><stop offset="0.27" stop-color="#0b59e9"/><stop offset="0.36" stop-color="#001fb8"/><stop offset="0.45" stop-color="#0a54e8"/><stop offset="0.55" stop-color="#0018a8"/><stop offset="0.64" stop-color="#0018a9"/><stop offset="0.73" stop-color="#0017a5"/><stop offset="0.82" stop-color="#00159d"/><stop offset="0.91" stop-color="#0a4ce7"/><stop offset="1.00" stop-color="#1cc9f8"/></linearGradient><linearGradient id="g155" x2="0" y2="1"><stop offset="0.00" stop-color="#24e0de"/><stop offset="0.09" stop-color="#14b1f8"/><stop offset="0.18" stop-color="#13adf8"/><stop offset="0.27" stop-color="#24e0de"/><stop offset="0.36" stop-color="#0b5fea"/><stop offset="0.45" stop-color="#0f9af6"/><stop offset="0.55" stop-color="#24dfe5"/><stop offset="0.64" stop-color="#12abf8"/><stop offset="0.73" stop-color="#0533d0"/><stop offset="0.82" stop-color="#24dfea"/><stop offset="0.91" stop-color="#24def4"/><stop offset="1.00" stop-color="#24e0de"/></linearGradient><linearGradient id="g156" x2="0" y2="1"><stop offset="0.00" stop-color="#24e0de"/><stop offset="0.09" stop-color="#17baf8"/><stop offset="0.18" stop-color="#24e0de"/><stop offset="0.27" stop-color="#24e0de"/><stop offset="0.36" stop-color="#0c65ec"/><stop offset="0.45" stop-color="#21d6f8"/><stop offset="0.55" stop-color="#24deed"/><stop offset="0.64" stop-color="#24e0de"/><stop offset="0.73" stop-color="#14b0f8"/><stop offset="0.82" stop-color="#24e0de"/><stop offset="0.91" stop-color="#24e0de"/><stop offset="1.00" stop-color="#1cc7f8"/></linearGradient><linearGradient id="g157" x2="0" y2="1"><stop offset="0.00" stop-color="#0840df"/><stop offset="0.09" stop-color="#0e92f4"/><stop offset="0.18" stop-color="#0b5bea"/><stop offset="0.27" stop-color="#10a6f8"/><stop offset="0.36" stop-color="#19c0f8"/><stop offset="0.45" stop-color="#0016a1"/><stop offset="0.55" stop-color="#073bd9"/><stop offset="0.64" stop-color="#0b63eb"/><stop offset="0.73" stop-color="#19bef8"/><stop offset="0.82" stop-color="#0d82f1"/><stop offset="0.91" stop-color="#22d8f8"/><stop offset="1.00" stop-color="#24e0de"/></linearGradient><linearGradient id="g158" x2="0" y2="1"><stop offset="0.00" stop-color="#0019ac"/><stop offset="0.09" stop-color="#0227c2"/><stop offset="0.18" stop-color="#001396"/><stop offset="0.27" stop-color="#00118e"/><stop offset="0.36" stop-color="#000f88"/><stop offset="0.45" stop-color="#0121ba"/><stop offset="0.55" stop-color="#001396"/><stop offset="0.64" stop-color="#00159c"/><stop offset="0.73" stop-color="#00149a"/><stop offset="0.82" stop-color="#001aae"/><stop offset="0.91" stop-color="#00159d"/><stop offset="1.00" stop-color="#001eb6"/></linearGradient><linearGradient id="g159" x2="0" y2="1"><stop offset="0.00" stop-color="#0535d1"/><stop offset="0.09" stop-color="#24dfe7"/><stop offset="0.18" stop-color="#0f9bf6"/><stop offset="0.27" stop-color="#24def1"/><stop offset="0.36" stop-color="#19c0f8"/><stop offset="0.45" stop-color="#0b55e9"/><stop offset="0.55" stop-color="#24e0de"/><stop offset="0.64" stop-color="#1ac2f8"/><stop offset="0.73" stop-color="#24e0de"/><stop offset="0.82" stop-color="#0d7df0"/><stop offset="0.91" stop-color="#24e0de"/><stop offset="1.00" stop-color="#24e0de"/></linearGradient><linearGradient id="g160" x2="0" y2="1"><stop offset="0.00" stop-color="#11a7f8"/><stop offset="0.09" stop-color="#042fcb"/><stop offset="0.18" stop-color="#18bbf8"/><stop offset="0.27" stop-color="#083fde"/><stop offset="0.36" stop-color="#00159e"/><stop offset="0.45" stop-color="#1ac3f8"/><stop offset="0.55" stop-color="#0a4be7"/><stop offset="0.64" stop-color="#24e0e1"/><stop offset="0.73" stop-color="#24e0de"/><stop offset="0.82" stop-color="#24e0de"/><stop offset="0.91" stop-color="#24e0de"/><stop offset="1.00" stop-color="#24dfe3"/></linearGradient><linearGradient id="g161" x2="0" y2="1"><stop offset="0.00" stop-color="#0945e5"/><stop offset="0.09" stop-color="#24dfe6"/><stop offset="0.18" stop-color="#001bb2"/><stop offset="0.27" stop-color="#23dbf8"/><stop offset="0.36" stop-color="#0d7ef0"/><stop offset="0.45" stop-color="#18bcf8"/><stop offset="0.55" stop-color="#0fa2f7"/><stop offset="0.64" stop-color="#13adf8"/><stop offset="0.73" stop-color="#0840df"/><stop offset="0.82" stop-color="#0f99f6"/><stop offset="0.91" stop-color="#0c6ded"/><stop offset="1.00" stop-color="#11a7f8"/></linearGradient><linearGradient id="g162" x2="0" y2="1"><stop offset="0.00" stop-color="#0a46e6"/><stop offset="0.09" stop-color="#0739d7"/><stop offset="0.18" stop-color="#001397"/><stop offset="0.27" stop-color="#0d76ef"/><stop offset="0.36" stop-color="#24e0de"/><stop offset="0.45" stop-color="#24deee"/><stop offset="0.55" stop-color="#24e0de"/><stop offset="0.64" stop-color="#23dbf8"/><stop offset="0.73" stop-color="#0638d6"/><stop offset="0.82" stop-color="#0d7ff0"/><stop offset="0.91" stop-color="#20d4f8"/><stop offset="1.00" stop-color="#23dcf8"/></linearGradient><linearGradient id="g163" x2="0" y2="1"><stop offset="0.00" stop-color="#0b5cea"/><stop offset="0.09" stop-color="#1fd1f8"/><stop offset="0.18" stop-color="#083fdd"/><stop offset="0.27" stop-color="#0a51e8"/><stop offset="0.36" stop-color="#0c71ee"/><stop offset="0.45" stop-color="#0f95f5"/><stop offset="0.55" stop-color="#0fa1f7"/><stop offset="0.64" stop-color="#1dc9f8"/><stop offset="0.73" stop-color="#0b59e9"/><stop offset="0.82" stop-color="#0e8ef3"/><stop offset="0.91" stop-color="#16b5f8"/><stop offset="1.00" stop-color="#24e0de"/></linearGradient><linearGradient id="g164" x2="0" y2="1"><stop offset="0.00" stop-color="#000e86"/><stop offset="0.09" stop-color="#00086e"/><stop offset="0.18" stop-color="#00086e"/><stop offset="0.27" stop-color="#00086e"/><stop offset="0.36" stop-color="#00086e"/><stop offset="0.45" stop-color="#00086e"/><stop offset="0.55" stop-color="#0b57e9"/><stop offset="0.64" stop-color="#001bb3"/><stop offset="0.73" stop-color="#0638d5"/><stop offset="0.82" stop-color="#083edc"/><stop offset="0.91" stop-color="#0016a0"/><stop offset="1.00" stop-color="#0121bb"/></linearGradient><linearGradient id="g165" x2="0" y2="1"><stop offset="0.00" stop-color="#20d2f8"/><stop offset="0.09" stop-color="#0227c1"/><stop offset="0.18" stop-color="#000a76"/><stop offset="0.27" stop-color="#14b2f8"/><stop offset="0.36" stop-color="#24e0de"/><stop offset="0.45" stop-color="#1dccf8"/><stop offset="0.55" stop-color="#24e0de"/><stop offset="0.64" stop-color="#24e0de"/><stop offset="0.73" stop-color="#24def7"/><stop offset="0.82" stop-color="#24e0de"/><stop offset="0.91" stop-color="#24e0de"/><stop offset="1.00" stop-color="#24e0de"/></linearGradient><linearGradient id="g166" x2="0" y2="1"><stop offset="0.00" stop-color="#00086e"/><stop offset="0.09" stop-color="#00086e"/><stop offset="0.18" stop-color="#00086e"/><stop offset="0.27" stop-color="#00086e"/><stop offset="0.36" stop-color="#00086e"/><stop offset="0.45" stop-color="#00149a"/><stop offset="0.55" stop-color="#00086e"/><stop offset="0.64" stop-color="#000974"/><stop offset="0.73" stop-color="#001bb0"/><stop offset="0.82" stop-color="#042dc9"/><stop offset="0.91" stop-color="#083edd"/><stop offset="1.00" stop-color="#0e89f2"/></linearGradient><linearGradient id="g167" x2="0" y2="1"><stop offset="0.00" stop-color="#032ac5"/><stop offset="0.09" stop-color="#0840df"/><stop offset="0.18" stop-color="#001ab0"/><stop offset="0.27" stop-color="#0a4ee7"/><stop offset="0.36" stop-color="#0944e4"/><stop offset="0.45" stop-color="#11a9f8"/><stop offset="0.55" stop-color="#23dcf8"/><stop offset="0.64" stop-color="#0e8bf3"/><stop offset="0.73" stop-color="#1cc8f8"/><stop offset="0.82" stop-color="#24e0de"/><stop offset="0.91" stop-color="#21d6f8"/><stop offset="1.00" stop-color="#24e0de"/></linearGradient><linearGradient id="g168" x2="0" y2="1"><stop offset="0.00" stop-color="#0a4ae6"/><stop offset="0.09" stop-color="#001498"/><stop offset="0.18" stop-color="#001aae"/><stop offset="0.27" stop-color="#0532ce"/><stop offset="0.36" stop-color="#032ac5"/><stop offset="0.45" stop-color="#0f9bf6"/><stop offset="0.55" stop-color="#0533d0"/><stop offset="0.64" stop-color="#0b57e9"/><stop offset="0.73" stop-color="#0d75ef"/><stop offset="0.82" stop-color="#24def1"/><stop offset="0.91" stop-color="#0f9af6"/><stop offset="1.00" stop-color="#0a4de7"/></linearGradient><linearGradient id="g169" x2="0" y2="1"><stop offset="0.00" stop-color="#083edd"/><stop offset="0.09" stop-color="#00108b"/><stop offset="0.18" stop-color="#00108d"/><stop offset="0.27" stop-color="#00159e"/><stop offset="0.36" stop-color="#001293"/><stop offset="0.45" stop-color="#0c68ec"/><stop offset="0.55" stop-color="#18bef8"/><stop offset="0.64" stop-color="#0e8ef3"/><stop offset="0.73" stop-color="#073bd9"/><stop offset="0.82" stop-color="#0c72ee"/><stop offset="0.91" stop-color="#0d78ef"/><stop offset="1.00" stop-color="#24e0de"/></linearGradient><linearGradient id="g170" x2="0" y2="1"><stop offset="0.00" stop-color="#24e0de"/><stop offset="0.09" stop-color="#24e0de"/><stop offset="0.18" stop-color="#24e0de"/><stop offset="0.27" stop-color="#24e0de"/><stop offset="0.36" stop-color="#24e0de"/><stop offset="0.45" stop-color="#24e0de"/><stop offset="0.55" stop-color="#24e0de"/><stop offset="0.64" stop-color="#24e0de"/><stop offset="0.73" stop-color="#24e0de"/><stop offset="0.82" stop-color="#24e0de"/><stop offset="0.91" stop-color="#24e0de"/><stop offset="1.00" stop-color="#24e0de"/></linearGradient><linearGradient id="g171" x2="0" y2="1"><stop offset="0.00" stop-color="#14b0f8"/><stop offset="0.09" stop-color="#12acf8"/><stop offset="0.18" stop-color="#032bc6"/><stop offset="0.27" stop-color="#0840df"/><stop offset="0.36" stop-color="#13adf8"/><stop offset="0.45" stop-color="#001294"/><stop offset="0.55" stop-color="#0a50e8"/><stop offset="0.64" stop-color="#0016a0"/><stop offset="0.73" stop-color="#15b2f8"/><stop offset="0.82" stop-color="#073bda"/><stop offset="0.91" stop-color="#0329c3"/><stop offset="1.00" stop-color="#0018a8"/></linearGradient><linearGradient id="g172" x2="0" y2="1"><stop offset="0.00" stop-color="#24e0d9"/><stop offset="0.09" stop-color="#0c69ec"/><stop offset="0.18" stop-color="#0fa1f7"/><stop offset="0.27" stop-color="#0636d3"/><stop offset="0.36" stop-color="#24e0de"/><stop offset="0.45" stop-color="#1bc6f8"/><stop offset="0.55" stop-color="#032cc7"/><stop offset="0.64" stop-color="#0123bc"/><stop offset="0.73" stop-color="#0c6ded"/><stop offset="0.82" stop-color="#19c0f8"/><stop offset="0.91" stop-color="#24e0de"/><stop offset="1.00" stop-color="#24e0de"/></linearGradient><linearGradient id="g173" x2="0" y2="1"><stop offset="0.00" stop-color="#3cfc2e"/><stop offset="0.09" stop-color="#2df346"/><stop offset="0.18" stop-color="#25e981"/><stop offset="0.27" stop-color="#40ff28"/><stop offset="0.36" stop-color="#24e0de"/><stop offset="0.45" stop-color="#24e0de"/><stop offset="0.55" stop-color="#24e0de"/><stop offset="0.64" stop-color="#24e0de"/><stop offset="0.73" stop-color="#10a4f8"/><stop offset="0.82" stop-color="#24e0de"/><stop offset="0.91" stop-color="#24def2"/><stop offset="1.00" stop-color="#24e0de"/></linearGradient><linearGradient id="g174" x2="0" y2="1"><stop offset="0.00" stop-color="#31f540"/><stop offset="0.09" stop-color="#40ff28"/><stop offset="0.18" stop-color="#40ff28"/><stop offset="0.27" stop-color="#23dbf8"/><stop offset="0.36" stop-color="#0d77ef"/><stop offset="0.45" stop-color="#0637d5"/><stop offset="0.55" stop-color="#0f9cf6"/><stop offset="0.64" stop-color="#000d81"/><stop offset="0.73" stop-color="#0c66ec"/><stop offset="0.82" stop-color="#083edc"/><stop offset="0.91" stop-color="#073bd9"/><stop offset="1.00" stop-color="#0f9ef7"/></linearGradient><linearGradient id="g175" x2="0" y2="1"><stop offset="0.00" stop-color="#24e4b1"/><stop offset="0.09" stop-color="#40ff28"/><stop offset="0.18" stop-color="#24e5a9"/><stop offset="0.27" stop-color="#24e794"/><stop offset="0.36" stop-color="#001bb3"/><stop offset="0.45" stop-color="#0b5bea"/><stop offset="0.55" stop-color="#001499"/><stop offset="0.64" stop-color="#0e93f4"/><stop offset="0.73" stop-color="#0123bc"/><stop offset="0.82" stop-color="#00169f"/><stop offset="0.91" stop-color="#0124bd"/><stop offset="1.00" stop-color="#00086e"/></linearGradient><linearGradient id="g176" x2="0" y2="1"><stop offset="0.00" stop-color="#40ff28"/><stop offset="0.09" stop-color="#40ff28"/><stop offset="0.18" stop-color="#40ff28"/><stop offset="0.27" stop-color="#40ff28"/><stop offset="0.36" stop-color="#24e69f"/><stop offset="0.45" stop-color="#22d9f8"/><stop offset="0.55" stop-color="#0b63eb"/><stop offset="0.64" stop-color="#0c72ee"/><stop offset="0.73" stop-color="#24e0de"/><stop offset="0.82" stop-color="#24e0de"/><stop offset="0.91" stop-color="#24e0de"/><stop offset="1.00" stop-color="#24e0de"/></linearGradient><linearGradient id="g177" x2="0" y2="1"><stop offset="0.00" stop-color="#40ff28"/><stop offset="0.09" stop-color="#40ff28"/><stop offset="0.18" stop-color="#40ff28"/><stop offset="0.27" stop-color="#25ea7c"/><stop offset="0.36" stop-color="#16b6f8"/><stop offset="0.45" stop-color="#24e0de"/><stop offset="0.55" stop-color="#0b60eb"/><stop offset="0.64" stop-color="#001396"/><stop offset="0.73" stop-color="#0c65ec"/><stop offset="0.82" stop-color="#073ddb"/><stop offset="0.91" stop-color="#0016a1"/><stop offset="1.00" stop-color="#24deef"/></linearGradient><linearGradient id="g178" x2="0" y2="1"><stop offset="0.00" stop-color="#40ff28"/><stop offset="0.09" stop-color="#40ff28"/><stop offset="0.18" stop-color="#33f73c"/><stop offset="0.27" stop-color="#33f63d"/><stop offset="0.36" stop-color="#24e69b"/><stop offset="0.45" stop-color="#24dfe9"/><stop offset="0.55" stop-color="#24dfeb"/><stop offset="0.64" stop-color="#1fd0f8"/><stop offset="0.73" stop-color="#24e0de"/><stop offset="0.82" stop-color="#21d5f8"/><stop offset="0.91" stop-color="#24e0de"/><stop offset="1.00" stop-color="#24e0de"/></linearGradient><linearGradient id="g179" x2="0" y2="1"><stop offset="0.00" stop-color="#3ffe28"/><stop offset="0.09" stop-color="#30f541"/><stop offset="0.18" stop-color="#40ff28"/><stop offset="0.27" stop-color="#24e795"/><stop offset="0.36" stop-color="#1ecdf8"/><stop offset="0.45" stop-color="#1dcbf8"/><stop offset="0.55" stop-color="#0e86f2"/><stop offset="0.64" stop-color="#1ac2f8"/><stop offset="0.73" stop-color="#24e0de"/><stop offset="0.82" stop-color="#24e0de"/><stop offset="0.91" stop-color="#19bff8"/><stop offset="1.00" stop-color="#24e0de"/></linearGradient><linearGradient id="g180" x2="0" y2="1"><stop offset="0.00" stop-color="#24e4b0"/><stop offset="0.09" stop-color="#24dfe4"/><stop offset="0.18" stop-color="#24e4b4"/><stop offset="0.27" stop-color="#0f9ff7"/><stop offset="0.36" stop-color="#1fd0f8"/><stop offset="0.45" stop-color="#001eb7"/><stop offset="0.55" stop-color="#0637d5"/><stop offset="0.64" stop-color="#0018a8"/><stop offset="0.73" stop-color="#0d7aef"/><stop offset="0.82" stop-color="#0017a4"/><stop offset="0.91" stop-color="#0d75ef"/><stop offset="1.00" stop-color="#0b63eb"/></linearGradient><linearGradient id="g181" x2="0" y2="1"><stop offset="0.00" stop-color="#0c70ee"/><stop offset="0.09" stop-color="#25ea7c"/><stop offset="0.18" stop-color="#24e1d2"/><stop offset="0.27" stop-color="#0a4ee7"/><stop offset="0.36" stop-color="#0c72ee"/><stop offset="0.45" stop-color="#083edd"/><stop offset="0.55" stop-color="#073ddb"/><stop offset="0.64" stop-color="#000e83"/><stop offset="0.73" stop-color="#0430cc"/><stop offset="0.82" stop-color="#0016a2"/><stop offset="0.91" stop-color="#0225be"/><stop offset="1.00" stop-color="#0534d0"/></linearGradient><linearGradient id="g182" x2="0" y2="1"><stop offset="0.00" stop-color="#29f04e"/><stop offset="0.09" stop-color="#24e2c8"/><stop offset="0.18" stop-color="#24e699"/><stop offset="0.27" stop-color="#24def0"/><stop offset="0.36" stop-color="#24e0de"/><stop offset="0.45" stop-color="#20d4f8"/><stop offset="0.55" stop-color="#24e0de"/><stop offset="0.64" stop-color="#24e0de"/><stop offset="0.73" stop-color="#13adf8"/><stop offset="0.82" stop-color="#24e0de"/><stop offset="0.91" stop-color="#24e0de"/><stop offset="1.00" stop-color="#24e0de"/></linearGradient><linearGradient id="g183" x2="0" y2="1"><stop offset="0.00" stop-color="#11a9f8"/><stop offset="0.09" stop-color="#0a4ae6"/><stop offset="0.18" stop-color="#11a8f8"/><stop offset="0.27" stop-color="#0fa2f7"/><stop offset="0.36" stop-color="#0d7bf0"/><stop offset="0.45" stop-color="#0020b8"/><stop offset="0.55" stop-color="#13aef8"/><stop offset="0.64" stop-color="#0f9af6"/><stop offset="0.73" stop-color="#0c74ee"/><stop offset="0.82" stop-color="#19bff8"/><stop offset="0.91" stop-color="#0e8af3"/><stop offset="1.00" stop-color="#0a50e7"/></linearGradient><linearGradient id="g184" x2="0" y2="1"><stop offset="0.00" stop-color="#1cc9f8"/><stop offset="0.09" stop-color="#00149a"/><stop offset="0.18" stop-color="#24def3"/><stop offset="0.27" stop-color="#0531cd"/><stop offset="0.36" stop-color="#0019aa"/><stop offset="0.45" stop-color="#0016a1"/><stop offset="0.55" stop-color="#0121ba"/><stop offset="0.64" stop-color="#0a4ae6"/><stop offset="0.73" stop-color="#14b1f8"/><stop offset="0.82" stop-color="#0d7ff0"/><stop offset="0.91" stop-color="#0534d1"/><stop offset="1.00" stop-color="#0941e1"/></linearGradient><linearGradient id="g185" x2="0" y2="1"><stop offset="0.00" stop-color="#083edc"/><stop offset="0.09" stop-color="#0226c0"/><stop offset="0.18" stop-color="#001eb7"/><stop offset="0.27" stop-color="#00159e"/><stop offset="0.36" stop-color="#0636d3"/><stop offset="0.45" stop-color="#0017a3"/><stop offset="0.55" stop-color="#0c6ced"/><stop offset="0.64" stop-color="#0018a7"/><stop offset="0.73" stop-color="#0017a4"/><stop offset="0.82" stop-color="#032ac5"/><stop offset="0.91" stop-color="#0f97f5"/><stop offset="1.00" stop-color="#00086e"/></linearGradient><linearGradient id="g186" x2="0" y2="1"><stop offset="0.00" stop-color="#032bc6"/><stop offset="0.09" stop-color="#0c68ec"/><stop offset="0.18" stop-color="#001bb2"/><stop offset="0.27" stop-color="#00118e"/><stop offset="0.36" stop-color="#001394"/><stop offset="0.45" stop-color="#000871"/><stop offset="0.55" stop-color="#0227c1"/><stop offset="0.64" stop-color="#16b6f8"/><stop offset="0.73" stop-color="#042eca"/><stop offset="0.82" stop-color="#0329c4"/><stop offset="0.91" stop-color="#1dccf8"/><stop offset="1.00" stop-color="#001498"/></linearGradient><linearGradient id="g187" x2="0" y2="1"><stop offset="0.00" stop-color="#24dfe2"/><stop offset="0.09" stop-color="#21d7f8"/><stop offset="0.18" stop-color="#0e90f4"/><stop offset="0.27" stop-color="#24dfe8"/><stop offset="0.36" stop-color="#24e0de"/><stop offset="0.45" stop-color="#16b5f8"/><stop offset="0.55" stop-color="#24e0de"/><stop offset="0.64" stop-color="#24e0de"/><stop offset="0.73" stop-color="#24e0de"/><stop offset="0.82" stop-color="#24e0de"/><stop offset="0.91" stop-color="#24e0de"/><stop offset="1.00" stop-color="#24e0de"/></linearGradient><linearGradient id="g188" x2="0" y2="1"><stop offset="0.00" stop-color="#24e0de"/><stop offset="0.09" stop-color="#15b3f8"/><stop offset="0.18" stop-color="#1dccf8"/><stop offset="0.27" stop-color="#18bcf8"/><stop offset="0.36" stop-color="#24e0de"/><stop offset="0.45" stop-color="#1bc6f8"/><stop offset="0.55" stop-color="#24e0de"/><stop offset="0.64" stop-color="#15b3f8"/><stop offset="0.73" stop-color="#16b5f8"/><stop offset="0.82" stop-color="#0e91f4"/><stop offset="0.91" stop-color="#24e0de"/><stop offset="1.00" stop-color="#21d5f8"/></linearGradient><linearGradient id="g189" x2="0" y2="1"><stop offset="0.00" stop-color="#1fd0f8"/><stop offset="0.09" stop-color="#0c72ee"/><stop offset="0.18" stop-color="#001aad"/><stop offset="0.27" stop-color="#15b3f8"/><stop offset="0.36" stop-color="#0a51e8"/><stop offset="0.45" stop-color="#0123bd"/><stop offset="0.55" stop-color="#0636d3"/><stop offset="0.64" stop-color="#12aaf8"/><stop offset="0.73" stop-color="#1ac1f8"/><stop offset="0.82" stop-color="#14b0f8"/><stop offset="0.91" stop-color="#1cc7f8"/><stop offset="1.00" stop-color="#24def7"/></linearGradient><linearGradient id="g190" x2="0" y2="1"><stop offset="0.00" stop-color="#0a4de7"/><stop offset="0.09" stop-color="#001291"/><stop offset="0.18" stop-color="#001190"/><stop offset="0.27" stop-color="#000c7c"/><stop offset="0.36" stop-color="#0016a2"/><stop offset="0.45" stop-color="#00169f"/><stop offset="0.55" stop-color="#0635d2"/><stop offset="0.64" stop-color="#0635d2"/><stop offset="0.73" stop-color="#000e86"/><stop offset="0.82" stop-color="#001cb4"/><stop offset="0.91" stop-color="#00086e"/><stop offset="1.00" stop-color="#00086e"/></linearGradient><linearGradient id="g191" x2="0" y2="1"><stop offset="0.00" stop-color="#24e0de"/><stop offset="0.09" stop-color="#0f9df6"/><stop offset="0.18" stop-color="#0e92f4"/><stop offset="0.27" stop-color="#24e0df"/><stop offset="0.36" stop-color="#0d7cf0"/><stop offset="0.45" stop-color="#24e0de"/><stop offset="0.55" stop-color="#24e0de"/><stop offset="0.64" stop-color="#24e0de"/><stop offset="0.73" stop-color="#22daf8"/><stop offset="0.82" stop-color="#1dc9f8"/><stop offset="0.91" stop-color="#24def7"/><stop offset="1.00" stop-color="#10a6f8"/></linearGradient><linearGradient id="g192" x2="0" y2="1"><stop offset="0.00" stop-color="#17baf8"/><stop offset="0.09" stop-color="#16b6f8"/><stop offset="0.18" stop-color="#0c6aec"/><stop offset="0.27" stop-color="#23ddf8"/><stop offset="0.36" stop-color="#24e0de"/><stop offset="0.45" stop-color="#16b7f8"/><stop offset="0.55" stop-color="#16b6f8"/><stop offset="0.64" stop-color="#0c6fed"/><stop offset="0.73" stop-color="#1cc8f8"/><stop offset="0.82" stop-color="#24e0de"/><stop offset="0.91" stop-color="#1dccf8"/><stop offset="1.00" stop-color="#24e0de"/></linearGradient><linearGradient id="g193" x2="0" y2="1"><stop offset="0.00" stop-color="#21d6f8"/><stop offset="0.09" stop-color="#24e0de"/><stop offset="0.18" stop-color="#18bef8"/><stop offset="0.27" stop-color="#24dfea"/><stop offset="0.36" stop-color="#24e0de"/><stop offset="0.45" stop-color="#24e0de"/><stop offset="0.55" stop-color="#24e0de"/><stop offset="0.64" stop-color="#24e0de"/><stop offset="0.73" stop-color="#24e0de"/><stop offset="0.82" stop-color="#24e0de"/><stop offset="0.91" stop-color="#20d2f8"/><stop offset="1.00" stop-color="#24e0de"/></linearGradient><linearGradient id="g194" x2="0" y2="1"><stop offset="0.00" stop-color="#24e0de"/><stop offset="0.09" stop-color="#20d4f8"/><stop offset="0.18" stop-color="#15b3f8"/><stop offset="0.27" stop-color="#1ecff8"/><stop offset="0.36" stop-color="#1cc7f8"/><stop offset="0.45" stop-color="#24e0de"/><stop offset="0.55" stop-color="#11a9f8"/><stop offset="0.64" stop-color="#0f9ff7"/><stop offset="0.73" stop-color="#1cc7f8"/><stop offset="0.82" stop-color="#24e0de"/><stop offset="0.91" stop-color="#0224be"/><stop offset="1.00" stop-color="#0c74ee"/></linearGradient><linearGradient id="g195" x2="0" y2="1"><stop offset="0.00" stop-color="#001bb0"/><stop offset="0.09" stop-color="#001eb7"/><stop offset="0.18" stop-color="#001397"/><stop offset="0.27" stop-color="#16b6f8"/><stop offset="0.36" stop-color="#00086e"/><stop offset="0.45" stop-color="#042ec9"/><stop offset="0.55" stop-color="#032bc6"/><stop offset="0.64" stop-color="#0018a7"/><stop offset="0.73" stop-color="#00149a"/><stop offset="0.82" stop-color="#00086e"/><stop offset="0.91" stop-color="#000e86"/><stop offset="1.00" stop-color="#00108b"/></linearGradient><linearGradient id="g196" x2="0" y2="1"><stop offset="0.00" stop-color="#0018a7"/><stop offset="0.09" stop-color="#0019a9"/><stop offset="0.18" stop-color="#0b5fea"/><stop offset="0.27" stop-color="#000a75"/><stop offset="0.36" stop-color="#0017a3"/><stop offset="0.45" stop-color="#001fb7"/><stop offset="0.55" stop-color="#0123bd"/><stop offset="0.64" stop-color="#000b7a"/><stop offset="0.73" stop-color="#0b64eb"/><stop offset="0.82" stop-color="#073bd9"/><stop offset="0.91" stop-color="#0c6bed"/><stop offset="1.00" stop-color="#0637d4"/></linearGradient><linearGradient id="g197" x2="0" y2="1"><stop offset="0.00" stop-color="#24e0de"/><stop offset="0.09" stop-color="#1dc9f8"/><stop offset="0.18" stop-color="#24dfe7"/><stop offset="0.27" stop-color="#24e0de"/><stop offset="0.36" stop-color="#24e0de"/><stop offset="0.45" stop-color="#24e0de"/><stop offset="0.55" stop-color="#24e0de"/><stop offset="0.64" stop-color="#24def2"/><stop offset="0.73" stop-color="#24e0de"/><stop offset="0.82" stop-color="#1fd0f8"/><stop offset="0.91" stop-color="#1dcbf8"/><stop offset="1.00" stop-color="#10a5f8"/></linearGradient><linearGradient id="g198" x2="0" y2="1"><stop offset="0.00" stop-color="#042ec9"/><stop offset="0.09" stop-color="#0f94f5"/><stop offset="0.18" stop-color="#24e0de"/><stop offset="0.27" stop-color="#0e8cf3"/><stop offset="0.36" stop-color="#0841e0"/><stop offset="0.45" stop-color="#1fd1f8"/><stop offset="0.55" stop-color="#0c72ee"/><stop offset="0.64" stop-color="#073ad8"/><stop offset="0.73" stop-color="#0d7ef0"/><stop offset="0.82" stop-color="#0c74ee"/><stop offset="0.91" stop-color="#0d80f1"/><stop offset="1.00" stop-color="#0e8ff4"/></linearGradient><linearGradient id="g199" x2="0" y2="1"><stop offset="0.00" stop-color="#073ad8"/><stop offset="0.09" stop-color="#0c72ee"/><stop offset="0.18" stop-color="#1cc7f8"/><stop offset="0.27" stop-color="#24dfec"/><stop offset="0.36" stop-color="#12aaf8"/><stop offset="0.45" stop-color="#24e0de"/><stop offset="0.55" stop-color="#24e0de"/><stop offset="0.64" stop-color="#0532ce"/><stop offset="0.73" stop-color="#10a6f8"/><stop offset="0.82" stop-color="#23ddf8"/><stop offset="0.91" stop-color="#11a7f8"/><stop offset="1.00" stop-color="#1cc8f8"/></linearGradient><linearGradient id="g200" x2="0" y2="1"><stop offset="0.00" stop-color="#1cc6f8"/><stop offset="0.09" stop-color="#0d82f1"/><stop offset="0.18" stop-color="#1ecdf8"/><stop offset="0.27" stop-color="#0840df"/><stop offset="0.36" stop-color="#0d82f1"/><stop offset="0.45" stop-color="#0fa0f7"/><stop offset="0.55" stop-color="#0016a0"/><stop offset="0.64" stop-color="#20d3f8"/><stop offset="0.73" stop-color="#0c6ded"/><stop offset="0.82" stop-color="#0a52e8"/><stop offset="0.91" stop-color="#0328c3"/><stop offset="1.00" stop-color="#0e86f2"/></linearGradient><linearGradient id="g201" x2="0" y2="1"><stop offset="0.00" stop-color="#001bb1"/><stop offset="0.09" stop-color="#14b1f8"/><stop offset="0.18" stop-color="#0a50e8"/><stop offset="0.27" stop-color="#0b59e9"/><stop offset="0.36" stop-color="#0739d7"/><stop offset="0.45" stop-color="#0e89f2"/><stop offset="0.55" stop-color="#0fa0f7"/><stop offset="0.64" stop-color="#032bc6"/><stop offset="0.73" stop-color="#0c66ec"/><stop offset="0.82" stop-color="#0636d3"/><stop offset="0.91" stop-color="#0e85f2"/><stop offset="1.00" stop-color="#0840df"/></linearGradient><linearGradient id="g202" x2="0" y2="1"><stop offset="0.00" stop-color="#1dccf8"/><stop offset="0.09" stop-color="#0637d4"/><stop offset="0.18" stop-color="#0016a1"/><stop offset="0.27" stop-color="#0227c1"/><stop offset="0.36" stop-color="#1dccf8"/><stop offset="0.45" stop-color="#0943e3"/><stop offset="0.55" stop-color="#0a4fe7"/><stop offset="0.64" stop-color="#0637d4"/><stop offset="0.73" stop-color="#0a4fe7"/><stop offset="0.82" stop-color="#10a5f8"/><stop offset="0.91" stop-color="#00149b"/><stop offset="1.00" stop-color="#0534d0"/></linearGradient><linearGradient id="g203" x2="0" y2="1"><stop offset="0.00" stop-color="#24e0de"/><stop offset="0.09" stop-color="#20d3f8"/><stop offset="0.18" stop-color="#22d9f8"/><stop offset="0.27" stop-color="#1ac3f8"/><stop offset="0.36" stop-color="#24e0de"/><stop offset="0.45" stop-color="#24e0de"/><stop offset="0.55" stop-color="#24e0de"/><stop offset="0.64" stop-color="#23dbf8"/><stop offset="0.73" stop-color="#0e8ef3"/><stop offset="0.82" stop-color="#1cc7f8"/><stop offset="0.91" stop-color="#12acf8"/><stop offset="1.00" stop-color="#24e0de"/></linearGradient><linearGradient id="g204" x2="0" y2="1"><stop offset="0.00" stop-color="#0840e0"/><stop offset="0.09" stop-color="#001aad"/><stop offset="0.18" stop-color="#0016a2"/><stop offset="0.27" stop-color="#073cda"/><stop offset="0.36" stop-color="#0a53e8"/><stop offset="0.45" stop-color="#001bb2"/><stop offset="0.55" stop-color="#000e83"/><stop offset="0.64" stop-color="#001aaf"/><stop offset="0.73" stop-color="#0d75ef"/><stop offset="0.82" stop-color="#0d78ef"/><stop offset="0.91" stop-color="#0941e1"/><stop offset="1.00" stop-color="#000e83"/></linearGradient><linearGradient id="g205" x2="0" y2="1"><stop offset="0.00" stop-color="#24e0de"/><stop offset="0.09" stop-color="#24e0de"/><stop offset="0.18" stop-color="#24e0de"/><stop offset="0.27" stop-color="#24e0de"/><stop offset="0.36" stop-color="#24e0de"/><stop offset="0.45" stop-color="#1fd0f8"/><stop offset="0.55" stop-color="#1dcbf8"/><stop offset="0.64" stop-color="#24e0de"/><stop offset="0.73" stop-color="#24e0de"/><stop offset="0.82" stop-color="#0f97f5"/><stop offset="0.91" stop-color="#24e0de"/><stop offset="1.00" stop-color="#18bcf8"/></linearGradient><linearGradient id="g206" x2="0" y2="1"><stop offset="0.00" stop-color="#0531cd"/><stop offset="0.09" stop-color="#24e0de"/><stop offset="0.18" stop-color="#24e0de"/><stop offset="0.27" stop-color="#24e0de"/><stop offset="0.36" stop-color="#0b5fea"/><stop offset="0.45" stop-color="#1fd1f8"/><stop offset="0.55" stop-color="#0b5cea"/><stop offset="0.64" stop-color="#24dfeb"/><stop offset="0.73" stop-color="#24e0de"/><stop offset="0.82" stop-color="#24e0de"/><stop offset="0.91" stop-color="#24def6"/><stop offset="1.00" stop-color="#19bef8"/></linearGradient><linearGradient id="g207" x2="0" y2="1"><stop offset="0.00" stop-color="#24e0de"/><stop offset="0.09" stop-color="#0019ab"/><stop offset="0.18" stop-color="#0d78ef"/><stop offset="0.27" stop-color="#001291"/><stop offset="0.36" stop-color="#15b2f8"/><stop offset="0.45" stop-color="#1dcbf8"/><stop offset="0.55" stop-color="#16b6f8"/><stop offset="0.64" stop-color="#073ddb"/><stop offset="0.73" stop-color="#0d80f1"/><stop offset="0.82" stop-color="#0a4be7"/><stop offset="0.91" stop-color="#20d4f8"/><stop offset="1.00" stop-color="#1fd1f8"/></linearGradient><linearGradient id="g208" x2="0" y2="1"><stop offset="0.00" stop-color="#1ac3f8"/><stop offset="0.09" stop-color="#00108d"/><stop offset="0.18" stop-color="#1dcaf8"/><stop offset="0.27" stop-color="#1bc5f8"/><stop offset="0.36" stop-color="#001eb7"/><stop offset="0.45" stop-color="#0942e1"/><stop offset="0.55" stop-color="#0a55e8"/><stop offset="0.64" stop-color="#0532ce"/><stop offset="0.73" stop-color="#073ad7"/><stop offset="0.82" stop-color="#073ad8"/><stop offset="0.91" stop-color="#0b5bea"/><stop offset="1.00" stop-color="#0016a2"/></linearGradient><linearGradient id="g209" x2="0" y2="1"><stop offset="0.00" stop-color="#0d7df0"/><stop offset="0.09" stop-color="#0f9ef6"/><stop offset="0.18" stop-color="#1ecef8"/><stop offset="0.27" stop-color="#0944e3"/><stop offset="0.36" stop-color="#0016a2"/><stop offset="0.45" stop-color="#032bc6"/><stop offset="0.55" stop-color="#0c6ced"/><stop offset="0.64" stop-color="#0639d6"/><stop offset="0.73" stop-color="#0b56e9"/><stop offset="0.82" stop-color="#24def4"/><stop offset="0.91" stop-color="#0b56e9"/><stop offset="1.00" stop-color="#083edc"/></linearGradient><linearGradient id="g210" x2="0" y2="1"><stop offset="0.00" stop-color="#0840df"/><stop offset="0.09" stop-color="#000f87"/><stop offset="0.18" stop-color="#0226c0"/><stop offset="0.27" stop-color="#0f94f5"/><stop offset="0.36" stop-color="#083edd"/><stop offset="0.45" stop-color="#042dc9"/><stop offset="0.55" stop-color="#001aad"/><stop offset="0.64" stop-color="#083ddc"/><stop offset="0.73" stop-color="#00149a"/><stop offset="0.82" stop-color="#12aaf8"/><stop offset="0.91" stop-color="#0e86f2"/><stop offset="1.00" stop-color="#083fde"/></linearGradient><linearGradient id="g211" x2="0" y2="1"><stop offset="0.00" stop-color="#24def7"/><stop offset="0.09" stop-color="#24def0"/><stop offset="0.18" stop-color="#24deef"/><stop offset="0.27" stop-color="#24dfe7"/><stop offset="0.36" stop-color="#1ac2f8"/><stop offset="0.45" stop-color="#24e0de"/><stop offset="0.55" stop-color="#24dfe9"/><stop offset="0.64" stop-color="#24e0de"/><stop offset="0.73" stop-color="#24e0de"/><stop offset="0.82" stop-color="#24e0de"/><stop offset="0.91" stop-color="#1bc5f8"/><stop offset="1.00" stop-color="#24dfec"/></linearGradient><linearGradient id="g212" x2="0" y2="1"><stop offset="0.00" stop-color="#24e0de"/><stop offset="0.09" stop-color="#24e0de"/><stop offset="0.18" stop-color="#24e0de"/><stop offset="0.27" stop-color="#0c66ec"/><stop offset="0.36" stop-color="#24e0de"/><stop offset="0.45" stop-color="#18bdf8"/><stop offset="0.55" stop-color="#1eccf8"/><stop offset="0.64" stop-color="#24dfe3"/><stop offset="0.73" stop-color="#24e0de"/><stop offset="0.82" stop-color="#0a4ce7"/><stop offset="0.91" stop-color="#24e0de"/><stop offset="1.00" stop-color="#00159e"/></linearGradient><linearGradient id="g213" x2="0" y2="1"><stop offset="0.00" stop-color="#0a47e6"/><stop offset="0.09" stop-color="#0c65ec"/><stop offset="0.18" stop-color="#24dfeb"/><stop offset="0.27" stop-color="#0d78ef"/><stop offset="0.36" stop-color="#0841e0"/><stop offset="0.45" stop-color="#0329c3"/><stop offset="0.55" stop-color="#042dc9"/><stop offset="0.64" stop-color="#0017a5"/><stop offset="0.73" stop-color="#24def5"/><stop offset="0.82" stop-color="#0b64eb"/><stop offset="0.91" stop-color="#24e0de"/><stop offset="1.00" stop-color="#0943e3"/></linearGradient><linearGradient id="g214" x2="0" y2="1"><stop offset="0.00" stop-color="#1ecef8"/><stop offset="0.09" stop-color="#24e0de"/><stop offset="0.18" stop-color="#22d8f8"/><stop offset="0.27" stop-color="#21d7f8"/><stop offset="0.36" stop-color="#11a8f8"/><stop offset="0.45" stop-color="#24e0de"/><stop offset="0.55" stop-color="#0f9ef6"/><stop offset="0.64" stop-color="#24dfe4"/><stop offset="0.73" stop-color="#24dfe9"/><stop offset="0.82" stop-color="#24dfe8"/><stop offset="0.91" stop-color="#24e0de"/><stop offset="1.00" stop-color="#24e0de"/></linearGradient><linearGradient id="g215" x2="0" y2="1"><stop offset="0.00" stop-color="#18bbf8"/><stop offset="0.09" stop-color="#0a4fe7"/><stop offset="0.18" stop-color="#0018a7"/><stop offset="0.27" stop-color="#0225be"/><stop offset="0.36" stop-color="#0637d5"/><stop offset="0.45" stop-color="#001bb3"/><stop offset="0.55" stop-color="#0b57e9"/><stop offset="0.64" stop-color="#001bb1"/><stop offset="0.73" stop-color="#17bbf8"/><stop offset="0.82" stop-color="#0c68ec"/><stop offset="0.91" stop-color="#0122bb"/><stop offset="1.00" stop-color="#0533cf"/></linearGradient><linearGradient id="g216" x2="0" y2="1"><stop offset="0.00" stop-color="#24dfe8"/><stop offset="0.09" stop-color="#24dfe3"/><stop offset="0.18" stop-color="#24e0de"/><stop offset="0.27" stop-color="#24e0de"/><stop offset="0.36" stop-color="#1ac2f8"/><stop offset="0.45" stop-color="#24deee"/><stop offset="0.55" stop-color="#24e0de"/><stop offset="0.64" stop-color="#10a4f8"/><stop offset="0.73" stop-color="#24e0de"/><stop offset="0.82" stop-color="#24e0de"/><stop offset="0.91" stop-color="#24e0de"/><stop offset="1.00" stop-color="#18bcf8"/></linearGradient><linearGradient id="g217" x2="0" y2="1"><stop offset="0.00" stop-color="#1fd0f8"/><stop offset="0.09" stop-color="#13adf8"/><stop offset="0.18" stop-color="#0639d6"/><stop offset="0.27" stop-color="#0d7cf0"/><stop offset="0.36" stop-color="#21d5f8"/><stop offset="0.45" stop-color="#24dfec"/><stop offset="0.55" stop-color="#21d7f8"/><stop offset="0.64" stop-color="#24e0de"/><stop offset="0.73" stop-color="#24e0de"/><stop offset="0.82" stop-color="#24e0de"/><stop offset="0.91" stop-color="#21d6f8"/><stop offset="1.00" stop-color="#0840df"/></linearGradient><linearGradient id="g218" x2="0" y2="1"><stop offset="0.00" stop-color="#10a4f8"/><stop offset="0.09" stop-color="#24e0de"/><stop offset="0.18" stop-color="#1ecff8"/><stop offset="0.27" stop-color="#24e0de"/><stop offset="0.36" stop-color="#24e0de"/><stop offset="0.45" stop-color="#24e0de"/><stop offset="0.55" stop-color="#18bef8"/><stop offset="0.64" stop-color="#1fd0f8"/><stop offset="0.73" stop-color="#22daf8"/><stop offset="0.82" stop-color="#10a4f8"/><stop offset="0.91" stop-color="#0d83f1"/><stop offset="1.00" stop-color="#24e0de"/></linearGradient><linearGradient id="g219" x2="0" y2="1"><stop offset="0.00" stop-color="#24e0de"/><stop offset="0.09" stop-color="#0c6ced"/><stop offset="0.18" stop-color="#1fd1f8"/><stop offset="0.27" stop-color="#1ac1f8"/><stop offset="0.36" stop-color="#0840e0"/><stop offset="0.45" stop-color="#1cc7f8"/><stop offset="0.55" stop-color="#0e8cf3"/><stop offset="0.64" stop-color="#1fd2f8"/><stop offset="0.73" stop-color="#083ddc"/><stop offset="0.82" stop-color="#0f9af6"/><stop offset="0.91" stop-color="#22daf8"/><stop offset="1.00" stop-color="#0c71ee"/></linearGradient></defs><rect x="63" width="2" height="174" fill="url(#g0)"/><rect x="65" width="2" height="174" fill="url(#g1)"/><rect x="67" width="3" height="174" fill="url(#g2)"/><rect x="70" width="2" height="174" fill="url(#g3)"/><rect x="72" width="2" height="174" fill="url(#g4)"/><rect x="74" width="2" height="174" fill="url(#g5)"/><rect x="76" width="1" height="174" fill="url(#g6)"/><rect x="77" width="2" height="174" fill="url(#g7)"/><rect x="79" width="2" height="174" fill="url(#g8)"/><rect x="81" width="2" height="174" fill="url(#g9)"/><rect x="83" width="2" height="174" fill="url(#g10)"/><rect x="85" width="2" height="174" fill="url(#g11)"/><rect x="87" width="2" height="174" fill="url(#g12)"/><rect x="89" width="2" height="174" fill="url(#g13)"/><rect x="91" width="2" height="174" fill="url(#g14)"/><rect x="93" width="2" height="174" fill="url(#g15)"/><rect x="95" width="3" height="174" fill="url(#g16)"/><rect x="98" width="1" height="174" fill="url(#g17)"/><rect x="99" width="1" height="174" fill="url(#g18)"/><rect x="100" width="2" height="174" fill="url(#g19)"/><rect x="102" width="2" height="174" fill="url(#g20)"/><rect x="104" width="2" height="174" fill="url(#g21)"/><rect x="106" width="2" height="174" fill="url(#g22)"/><rect x="108" width="3" height="174" fill="url(#g23)"/><rect x="111" width="1" height="174" fill="url(#g24)"/><rect x="112" width="2" height="174" fill="url(#g25)"/><rect x="114" width="2" height="174" fill="url(#g26)"/><rect x="116" width="2" height="174" fill="url(#g27)"/><rect x="118" width="2" height="174" fill="url(#g28)"/><rect x="120" width="1" height="174" fill="url(#g29)"/><rect x="121" width="2" height="174" fill="url(#g30)"/><rect x="123" width="2" height="174" fill="url(#g31)"/><rect x="125" width="2" height="174" fill="url(#g32)"/><rect x="127" width="3" height="174" fill="url(#g33)"/><rect x="130" width="2" height="174" fill="url(#g34)"/><rect x="132" width="1" height="174" fill="url(#g35)"/><rect x="133" width="3" height="174" fill="url(#g36)"/><rect x="136" width="3" height="174" fill="url(#g37)"/><rect x="139" width="2" height="174" fill="url(#g38)"/><rect x="141" width="3" height="174" fill="url(#g39)"/><rect x="144" width="3" height="174" fill="url(#g40)"/><rect x="147" width="2" height="174" fill="url(#g41)"/><rect x="149" width="3" height="174" fill="url(#g42)"/><rect x="152" width="1" height="174" fill="url(#g43)"/><rect x="153" width="2" height="174" fill="url(#g44)"/><rect x="155" width="2" height="174" fill="url(#g45)"/><rect x="157" width="1" height="174" fill="url(#g46)"/><rect x="158" width="2" height="174" fill="url(#g47)"/><rect x="160" width="2" height="174" fill="url(#g48)"/><rect x="162" width="2" height="174" fill="url(#g49)"/><rect x="164" width="1" height="174" fill="url(#g50)"/><rect x="165" width="2" height="174" fill="url(#g51)"/><rect x="167" width="2" height="174" fill="url(#g52)"/><rect x="169" width="2" height="174" fill="url(#g53)"/><rect x="171" width="3" height="174" fill="url(#g54)"/><rect x="174" width="3" height="174" fill="url(#g55)"/><rect x="177" width="3" height="174" fill="url(#g56)"/><rect x="180" width="1" height="174" fill="url(#g57)"/><rect x="181" width="2" height="174" fill="url(#g58)"/><rect x="183" width="3" height="174" fill="url(#g59)"/><rect x="186" width="3" height="174" fill="url(#g60)"/><rect x="189" width="1" height="174" fill="url(#g61)"/><rect x="190" width="3" height="174" fill="url(#g62)"/><rect x="193" width="3" height="174" fill="url(#g63)"/><rect x="196" width="2" height="174" fill="url(#g64)"/><rect x="198" width="2" height="174" fill="url(#g65)"/><rect x="200" width="2" height="174" fill="url(#g66)"/><rect x="202" width="1" height="174" fill="url(#g67)"/><rect x="203" width="1" height="174" fill="url(#g68)"/><rect x="204" width="2" height="174" fill="url(#g69)"/><rect x="206" width="2" height="174" fill="url(#g70)"/><rect x="208" width="3" height="174" fill="url(#g71)"/><rect x="211" width="2" height="174" fill="url(#g72)"/><rect x="213" width="3" height="174" fill="url(#g73)"/><rect x="216" width="2" height="174" fill="url(#g74)"/><rect x="218" width="2" height="174" fill="url(#g75)"/><rect x="220" width="2" height="174" fill="url(#g76)"/><rect x="222" width="2" height="174" fill="url(#g77)"/><rect x="224" width="2" height="174" fill="url(#g78)"/><rect x="226" width="2" height="174" fill="url(#g79)"/><rect x="228" width="3" height="174" fill="url(#g80)"/><rect x="231" width="2" height="174" fill="url(#g81)"/><rect x="233" width="3" height="174" fill="url(#g82)"/><rect x="236" width="2" height="174" fill="url(#g83)"/><rect x="238" width="2" height="174" fill="url(#g84)"/><rect x="240" width="1" height="174" fill="url(#g85)"/><rect x="241" width="2" height="174" fill="url(#g86)"/><rect x="243" width="2" height="174" fill="url(#g87)"/><rect x="245" width="2" height="174" fill="url(#g88)"/><rect x="247" width="1" height="174" fill="url(#g89)"/><rect x="248" width="3" height="174" fill="url(#g90)"/><rect x="251" width="2" height="174" fill="url(#g91)"/><rect x="253" width="3" height="174" fill="url(#g92)"/><rect x="256" width="3" height="174" fill="url(#g93)"/><rect x="259" width="1" height="174" fill="url(#g94)"/><rect x="260" width="3" height="174" fill="url(#g95)"/><rect x="263" width="2" height="174" fill="url(#g96)"/><rect x="265" width="2" height="174" fill="url(#g97)"/><rect x="267" width="2" height="174" fill="url(#g98)"/><rect x="269" width="2" height="174" fill="url(#g99)"/><rect x="271" width="1" height="174" fill="url(#g100)"/><rect x="272" width="2" height="174" fill="url(#g101)"/><rect x="274" width="2" height="174" fill="url(#g102)"/><rect x="276" width="2" height="174" fill="url(#g103)"/><rect x="278" width="3" height="174" fill="url(#g104)"/><rect x="281" width="2" height="174" fill="url(#g105)"/><rect x="283" width="2" height="174" fill="url(#g106)"/><rect x="285" width="2" height="174" fill="url(#g107)"/><rect x="287" width="1" height="174" fill="url(#g108)"/><rect x="288" width="1" height="174" fill="url(#g109)"/><rect x="289" width="2" height="174" fill="url(#g110)"/><rect x="291" width="2" height="174" fill="url(#g111)"/><rect x="293" width="2" height="174" fill="url(#g112)"/><rect x="295" width="2" height="174" fill="url(#g113)"/><rect x="297" width="2" height="174" fill="url(#g114)"/><rect x="299" width="2" height="174" fill="url(#g115)"/><rect x="301" width="2" height="174" fill="url(#g116)"/><rect x="303" width="2" height="174" fill="url(#g117)"/><rect x="305" width="3" height="174" fill="url(#g118)"/><rect x="308" width="1" height="174" fill="url(#g119)"/><rect x="309" width="2" height="174" fill="url(#g120)"/><rect x="311" width="1" height="174" fill="url(#g121)"/><rect x="312" width="1" height="174" fill="url(#g122)"/><rect x="313" width="3" height="174" fill="url(#g123)"/><rect x="316" width="2" height="174" fill="url(#g124)"/><rect x="318" width="2" height="174" fill="url(#g125)"/><rect x="320" width="2" height="174" fill="url(#g126)"/><rect x="322" width="2" height="174" fill="url(#g127)"/><rect x="324" width="2" height="174" fill="url(#g128)"/><rect x="326" width="1" height="174" fill="url(#g129)"/><rect x="327" width="2" height="174" fill="url(#g130)"/><rect x="329" width="2" height="174" fill="url(#g131)"/><rect x="331" width="2" height="174" fill="url(#g132)"/><rect x="333" width="2" height="174" fill="url(#g133)"/><rect x="335" width="2" height="174" fill="url(#g134)"/><rect x="337" width="3" height="174" fill="url(#g135)"/><rect x="340" width="2" height="174" fill="url(#g136)"/><rect x="342" width="2" height="174" fill="url(#g137)"/><rect x="344" width="2" height="174" fill="url(#g138)"/><rect x="346" width="3" height="174" fill="url(#g139)"/><rect x="349" width="3" height="174" fill="url(#g140)"/><rect x="352" width="2" height="174" fill="url(#g141)"/><rect x="354" width="3" height="174" fill="url(#g142)"/><rect x="357" width="3" height="174" fill="url(#g143)"/><rect x="360" width="2" height="174" fill="url(#g144)"/><rect x="362" width="2" height="174" fill="url(#g145)"/><rect x="364" width="2" height="174" fill="url(#g146)"/><rect x="366" width="1" height="174" fill="url(#g147)"/><rect x="367" width="2" height="174" fill="url(#g148)"/><rect x="369" width="3" height="174" fill="url(#g149)"/><rect x="372" width="2" height="174" fill="url(#g150)"/><rect x="374" width="2" height="174" fill="url(#g151)"/><rect x="376" width="2" height="174" fill="url(#g152)"/><rect x="378" width="1" height="174" fill="url(#g153)"/><rect x="379" width="3" height="174" fill="url(#g154)"/><rect x="382" width="2" height="174" fill="url(#g155)"/><rect x="384" width="2" height="174" fill="url(#g156)"/><rect x="386" width="2" height="174" fill="url(#g157)"/><rect x="388" width="3" height="174" fill="url(#g158)"/><rect x="391" width="2" height="174" fill="url(#g159)"/><rect x="393" width="3" height="174" fill="url(#g160)"/><rect x="396" width="3" height="174" fill="url(#g161)"/><rect x="399" width="2" height="174" fill="url(#g162)"/><rect x="401" width="2" height="174" fill="url(#g163)"/><rect x="403" width="3" height="174" fill="url(#g164)"/><rect x="406" width="3" height="174" fill="url(#g165)"/><rect x="409" width="2" height="174" fill="url(#g166)"/><rect x="411" width="2" height="174" fill="url(#g167)"/><rect x="413" width="2" height="174" fill="url(#g168)"/><rect x="415" width="3" height="174" fill="url(#g169)"/><rect x="418" width="2" height="174" fill="url(#g170)"/><rect x="420" width="1" height="174" fill="url(#g171)"/><rect x="421" width="2" height="174" fill="url(#g172)"/><rect x="423" width="2" height="174" fill="url(#g173)"/><rect x="425" width="2" height="174" fill="url(#g174)"/><rect x="427" width="2" height="174" fill="url(#g175)"/><rect x="429" width="2" height="174" fill="url(#g176)"/><rect x="431" width="2" height="174" fill="url(#g177)"/><rect x="433" width="1" height="174" fill="url(#g178)"/><rect x="434" width="3" height="174" fill="url(#g179)"/><rect x="437" width="2" height="174" fill="url(#g180)"/><rect x="439" width="2" height="174" fill="url(#g181)"/><rect x="441" width="3" height="174" fill="url(#g182)"/><rect x="444" width="2" height="174" fill="url(#g183)"/><rect x="446" width="3" height="174" fill="url(#g184)"/><rect x="449" width="1" height="174" fill="url(#g185)"/><rect x="450" width="3" height="174" fill="url(#g186)"/><rect x="453" width="2" height="174" fill="url(#g187)"/><rect x="455" width="2" height="174" fill="url(#g188)"/><rect x="457" width="3" height="174" fill="url(#g189)"/><rect x="460" width="3" height="174" fill="url(#g190)"/><rect x="463" width="3" height="174" fill="url(#g191)"/><rect x="466" width="1" height="174" fill="url(#g192)"/><rect x="467" width="3" height="174" fill="url(#g193)"/><rect x="470" width="3" height="174" fill="url(#g194)"/><rect x="473" width="3" height="174" fill="url(#g195)"/><rect x="476" width="2" height="174" fill="url(#g196)"/><rect x="478" width="3" height="174" fill="url(#g197)"/><rect x="481" width="3" height="174" fill="url(#g198)"/><rect x="484" width="3" height="174" fill="url(#g199)"/><rect x="487" width="2" height="174" fill="url(#g200)"/><rect x="489" width="2" height="174" fill="url(#g201)"/><rect x="491" width="3" height="174" fill="url(#g202)"/><rect x="494" width="2" height="174" fill="url(#g203)"/><rect x="496" width="2" height="174" fill="url(#g204)"/><rect x="498" width="3" height="174" fill="url(#g205)"/><rect x="501" width="2" height="174" fill="url(#g206)"/><rect x="503" width="1" height="174" fill="url(#g207)"/><rect x="504" width="3" height="174" fill="url(#g208)"/><rect x="507" width="3" height="174" fill="url(#g209)"/><rect x="510" width="2" height="174" fill="url(#g210)"/><rect x="512" width="2" height="174" fill="url(#g211)"/><rect x="514" width="3" height="174" fill="url(#g212)"/><rect x="517" width="2" height="174" fill="url(#g213)"/><rect x="519" width="2" height="174" fill="url(#g214)"/><rect x="521" width="2" height="174" fill="url(#g215)"/><rect x="523" width="3" height="174" fill="url(#g216)"/><rect x="526" width="1" height="174" fill="url(#g217)"/><rect x="527" width="1" height="174" fill="url(#g218)"/><rect x="528" width="1" height="174" fill="url(#g219)"/><path d="M359.8 -18.8L362.6 5.0L363.2 28.8L360.4 5.0Z" fill="#001bb2"/><path d="M288.2 90.1L288.2 125.3L286.5 160.5L286.5 125.3Z" fill="#26ec68"/><path d="M81.8 -26.8L82.9 -4.7L82.5 17.4L81.4 -4.7Z" fill="#032ac4"/><path d="M230.2 110.0L230.9 128.2L229.3 146.3L228.7 128.2Z" fill="#24e1cd"/><path d="M227.4 65.8L227.7 94.0L225.7 122.1L225.4 94.0Z" fill="#25ea7c"/><path d="M149.1 -18.4L150.9 14.4L150.2 47.2L148.3 14.4Z" fill="#000c7f"/><path d="M322.0 111.7L324.0 161.3L323.6 210.9L321.7 161.3Z" fill="#24dfeb"/><path d="M314.8 124.6L314.0 169.3L311.2 214.1L312.0 169.3Z" fill="#24dfeb"/><path d="M270.9 -28.5L273.0 0.3L272.7 29.1L270.6 0.3Z" fill="#0227c1"/><path d="M163.3 142.6L164.2 170.4L162.8 198.1L161.9 170.4Z" fill="#30f541"/><path d="M166.7 143.8L166.7 170.3L165.2 196.7L165.2 170.3Z" fill="#13adf8"/><path d="M233.4 -1.5L236.2 40.8L237.1 83.0L234.4 40.8Z" fill="#24def0"/><path d="M340.0 110.8L340.7 127.5L338.9 144.1L338.1 127.5Z" fill="#001eb6"/><path d="M112.5 132.8L115.5 160.6L115.8 188.5L112.8 160.6Z" fill="#24dfeb"/><path d="M160.1 86.0L160.3 119.8L158.7 153.6L158.5 119.8Z" fill="#27ed62"/><path d="M493.6 -7.1L493.5 23.7L490.8 54.6L490.9 23.7Z" fill="#0225bf"/><path d="M458.7 106.0L458.3 156.1L455.6 206.3L456.0 156.1Z" fill="#0225bf"/><path d="M413.4 65.7L414.5 99.1L412.6 132.5L411.4 99.1Z" fill="#23ddf8"/><path d="M171.5 -0.2L172.7 23.2L171.5 46.6L170.3 23.2Z" fill="#24dfeb"/><path d="M148.4 165.3L149.8 190.0L149.6 214.7L148.2 190.0Z" fill="#0637d5"/><path d="M430.3 90.9L430.0 129.9L427.6 168.9L427.9 129.9Z" fill="#24dfeb"/><path d="M142.1 109.9L143.0 148.6L141.0 187.4L140.1 148.6Z" fill="#23dcf8"/><path d="M262.0 97.0L265.0 113.2L265.5 129.4L262.4 113.2Z" fill="#25ea7b"/><path d="M328.1 56.0L329.0 99.1L328.2 142.2L327.2 99.1Z" fill="#24def1"/><path d="M373.0 -16.5L372.9 20.7L371.0 57.8L371.2 20.7Z" fill="#24dfeb"/><path d="M489.2 17.6L491.5 33.5L491.3 49.3L489.0 33.5Z" fill="#0225bf"/><path d="M254.8 -19.6L254.9 5.0L252.3 29.6L252.2 5.0Z" fill="#001396"/><path d="M138.2 106.3L140.2 141.8L140.3 177.3L138.3 141.8Z" fill="#3ffe28"/><path d="M450.7 44.6L450.6 98.5L448.9 152.5L449.1 98.5Z" fill="#0225bf"/><path d="M177.0 116.5L178.3 151.6L178.1 186.6L176.7 151.6Z" fill="#40ff28"/><path d="M89.4 -37.5L90.3 -19.9L89.4 -2.2L88.4 -19.9Z" fill="#0226c0"/><path d="M362.8 127.0L363.7 152.9L362.3 178.9L361.5 152.9Z" fill="#24dfeb"/><path d="M104.2 44.6L107.6 91.9L108.2 139.2L104.8 91.9Z" fill="#000f87"/><path d="M451.2 104.7L451.0 124.1L448.7 143.5L448.9 124.1Z" fill="#0225bf"/><path d="M204.2 100.1L204.5 128.2L202.7 156.4L202.4 128.2Z" fill="#40ff28"/><path d="M507.2 -29.5L507.4 13.3L506.0 56.2L505.8 13.3Z" fill="#24dfeb"/><path d="M78.4 122.6L78.6 145.9L76.9 169.3L76.7 145.9Z" fill="#3cfc2e"/><path d="M120.5 -14.4L121.8 7.6L120.9 29.5L119.6 7.6Z" fill="#0225bf"/><path d="M488.5 65.2L488.3 119.1L485.1 173.0L485.3 119.1Z" fill="#24dfeb"/><path d="M370.2 111.3L370.6 156.8L369.2 202.3L368.8 156.8Z" fill="#24dfeb"/><path d="M112.0 82.7L113.5 124.8L113.3 166.9L111.8 124.8Z" fill="#000a75"/><path d="M484.1 143.5L487.4 193.7L487.9 244.0L484.5 193.7Z" fill="#24dfeb"/><path d="M77.6 95.7L78.1 122.5L76.9 149.2L76.4 122.5Z" fill="#1ac3f8"/><path d="M440.7 127.5L442.8 162.8L442.2 198.2L440.1 162.8Z" fill="#24dfeb"/><path d="M82.1 48.7L83.7 75.8L83.8 102.9L82.2 75.8Z" fill="#0d7ef0"/><path d="M258.9 -30.3L259.3 18.6L256.8 67.6L256.5 18.6Z" fill="#00159d"/><path d="M136.7 68.0L136.8 97.1L135.3 126.3L135.1 97.1Z" fill="#24e5a3"/><path d="M514.8 172.5L516.3 187.7L515.4 203.0L513.9 187.7Z" fill="#24dfeb"/><path d="M275.1 -32.8L275.4 16.1L273.4 65.1L273.1 16.1Z" fill="#0531cd"/><path d="M503.0 95.9L505.5 150.8L506.5 205.7L504.0 150.8Z" fill="#24dfeb"/><path d="M470.3 32.8L471.6 50.1L470.9 67.4L469.6 50.1Z" fill="#0225bf"/><path d="M108.9 -46.0L109.8 3.8L107.5 53.5L106.6 3.8Z" fill="#24deef"/><path d="M198.1 -14.4L200.2 10.4L200.5 35.2L198.4 10.4Z" fill="#0018a7"/><path d="M459.0 4.3L458.3 35.1L455.5 65.8L456.3 35.1Z" fill="#24dfeb"/><path d="M119.8 23.3L120.9 39.5L119.9 55.7L118.8 39.5Z" fill="#24dfeb"/><path d="M93.7 18.6L93.2 46.4L91.1 74.3L91.6 46.4Z" fill="#24dfeb"/><path d="M380.1 -24.1L381.4 -8.1L379.7 7.8L378.4 -8.1Z" fill="#0120b9"/><path d="M192.8 35.8L192.8 70.2L190.1 104.5L190.2 70.2Z" fill="#001aad"/><path d="M425.3 95.5L428.1 142.3L428.3 189.2L425.6 142.3Z" fill="#24dfeb"/><path d="M157.0 87.8L156.6 117.8L153.9 147.8L154.2 117.8Z" fill="#40ff28"/><path d="M402.3 129.9L402.9 175.8L401.4 221.6L400.8 175.8Z" fill="#24dfeb"/><path d="M453.3 45.3L454.1 76.6L453.1 107.9L452.4 76.6Z" fill="#24dfeb"/><path d="M267.0 43.5L268.2 90.8L267.0 138.1L265.8 90.8Z" fill="#0430cb"/><path d="M449.6 40.2L451.9 85.3L451.8 130.4L449.4 85.3Z" fill="#24dfeb"/><path d="M373.5 137.1L376.0 189.7L376.4 242.3L373.8 189.7Z" fill="#24dfeb"/><path d="M417.4 151.5L416.8 177.0L414.5 202.5L415.1 177.0Z" fill="#0224be"/><path d="M488.7 122.3L487.7 146.7L484.8 171.2L485.9 146.7Z" fill="#0225bf"/><path d="M127.5 70.1L129.4 104.3L128.4 138.4L126.5 104.3Z" fill="#25e888"/><path d="M284.4 92.2L285.8 113.1L285.4 134.0L284.0 113.1Z" fill="#2af14b"/><path d="M465.5 94.9L465.4 122.4L462.4 149.8L462.6 122.4Z" fill="#0225bf"/><path d="M68.0 101.8L67.9 151.3L65.7 200.7L65.9 151.3Z" fill="#0e85f2"/><path d="M164.9 128.3L166.7 146.3L165.5 164.3L163.7 146.3Z" fill="#40ff28"/><path d="M469.5 -22.0L469.4 7.6L466.3 37.2L466.4 7.6Z" fill="#0225bf"/><path d="M204.8 47.4L205.0 74.2L203.0 101.1L202.9 74.2Z" fill="#24dfeb"/><path d="M253.2 96.0L254.1 120.6L252.2 145.2L251.3 120.6Z" fill="#24e1d3"/><path d="M330.0 92.0L330.7 132.0L329.3 172.0L328.7 132.0Z" fill="#24dfeb"/><path d="M68.3 122.5L70.4 162.2L70.5 202.0L68.3 162.2Z" fill="#0e84f2"/><path d="M196.2 -25.7L198.3 -8.1L197.3 9.5L195.2 -8.1Z" fill="#001bb3"/><path d="M111.3 69.0L110.5 102.4L107.6 135.8L108.4 102.4Z" fill="#00086e"/><path d="M387.2 88.7L389.6 125.5L390.5 162.3L388.1 125.5Z" fill="#24def7"/><path d="M221.9 -5.2L221.6 31.3L219.8 67.9L220.1 31.3Z" fill="#0017a2"/><path d="M436.6 81.9L439.3 107.3L440.3 132.7L437.5 107.3Z" fill="#24dfeb"/><path d="M120.9 118.5L122.3 146.0L122.0 173.4L120.6 146.0Z" fill="#25e981"/><path d="M209.2 91.8L209.9 136.6L208.8 181.3L208.0 136.6Z" fill="#2bf24a"/><path d="M441.6 103.3L442.3 134.4L440.0 165.4L439.3 134.4Z" fill="#0225bf"/><path d="M443.0 -34.7L443.5 -13.7L442.0 7.3L441.4 -13.7Z" fill="#0635d2"/><path d="M119.9 31.5L120.5 48.3L118.5 65.1L118.0 48.3Z" fill="#001aaf"/><path d="M170.3 110.5L170.1 135.8L167.3 161.2L167.6 135.8Z" fill="#40ff28"/><path d="M351.0 43.8L351.2 79.2L348.3 114.6L348.1 79.2Z" fill="#0017a4"/><path d="M149.7 146.9L151.8 165.7L151.5 184.5L149.4 165.7Z" fill="#30f541"/><path d="M494.6 111.0L496.5 137.9L496.5 164.8L494.6 137.9Z" fill="#0225bf"/><path d="M286.9 10.3L288.6 47.1L287.8 83.9L286.0 47.1Z" fill="#0534d0"/><path d="M134.6 34.2L134.5 59.5L131.8 84.8L131.9 59.5Z" fill="#24dfeb"/><path d="M526.4 -61.0L528.6 -11.4L528.8 38.2L526.6 -11.4Z" fill="#24dfeb"/><path d="M256.4 43.6L255.7 83.5L252.4 123.4L253.2 83.5Z" fill="#032ac5"/><path d="M173.5 113.9L175.4 151.5L175.7 189.0L173.8 151.5Z" fill="#24e4b5"/><path d="M408.6 136.5L411.6 175.9L411.5 215.3L408.5 175.9Z" fill="#0124bd"/><path d="M410.6 20.8L410.2 54.5L406.9 88.2L407.3 54.5Z" fill="#0c66ec"/><path d="M198.8 -45.4L201.0 8.9L200.2 63.2L198.0 8.9Z" fill="#0018a8"/><path d="M467.7 16.9L467.2 48.4L464.4 79.9L464.9 48.4Z" fill="#0225bf"/><path d="M518.6 35.6L518.1 81.1L515.8 126.7L516.3 81.1Z" fill="#24dfeb"/><path d="M135.2 -51.2L134.7 -18.5L131.9 14.2L132.5 -18.5Z" fill="#24dfeb"/><path d="M323.6 79.4L323.3 104.3L320.2 129.3L320.5 104.3Z" fill="#22d9f8"/><path d="M99.3 -40.2L99.8 -17.4L98.1 5.4L97.7 -17.4Z" fill="#0226c0"/><path d="M234.3 153.3L235.0 183.2L232.7 213.0L232.0 183.2Z" fill="#24e793"/><path d="M502.9 142.6L506.2 184.4L506.4 226.2L503.1 184.4Z" fill="#24dfeb"/><path d="M380.0 19.2L381.2 43.0L380.0 66.8L378.7 43.0Z" fill="#0017a5"/><path d="M88.3 3.3L90.3 47.9L89.3 92.4L87.3 47.9Z" fill="#24dfeb"/><path d="M134.0 88.3L134.1 126.5L132.3 164.6L132.2 126.5Z" fill="#35f839"/><path d="M152.4 -9.7L154.6 18.5L155.3 46.6L153.1 18.5Z" fill="#1dcbf8"/><path d="M389.0 18.5L392.5 73.0L392.8 127.5L389.3 73.0Z" fill="#00159d"/><path d="M132.0 -1.6L133.9 44.4L133.9 90.5L131.9 44.4Z" fill="#24dfeb"/><path d="M319.7 51.8L322.3 91.2L322.5 130.6L319.9 91.2Z" fill="#1fd2f8"/><path d="M431.3 8.0L431.6 48.9L429.0 89.8L428.7 48.9Z" fill="#24def7"/><path d="M471.6 -33.4L471.6 -9.4L469.9 14.6L469.9 -9.4Z" fill="#0225bf"/><path d="M199.9 -19.3L200.5 28.7L199.4 76.8L198.7 28.7Z" fill="#23dbf8"/><path d="M68.9 58.5L71.7 111.6L72.2 164.7L69.3 111.6Z" fill="#2ff443"/><path d="M525.7 6.7L525.7 25.6L524.0 44.5L524.1 25.6Z" fill="#0225bf"/><path d="M143.4 57.5L145.6 72.7L144.7 87.9L142.6 72.7Z" fill="#24dfeb"/><path d="M313.9 -40.1L316.1 9.7L316.2 59.6L314.0 9.7Z" fill="#20d4f8"/><path d="M444.5 -25.3L443.8 9.0L440.9 43.3L441.5 9.0Z" fill="#25e88a"/><path d="M245.4 -29.5L245.3 12.9L242.1 55.3L242.2 12.9Z" fill="#073bd9"/><path d="M159.5 -29.0L160.9 -13.0L160.4 3.0L159.1 -13.0Z" fill="#24dfeb"/><path d="M200.4 6.2L201.3 46.2L199.3 86.2L198.3 46.2Z" fill="#24def5"/><path d="M106.1 127.1L105.8 163.3L103.4 199.6L103.7 163.3Z" fill="#25ea7a"/><path d="M249.4 -6.2L249.7 24.7L247.2 55.7L246.8 24.7Z" fill="#0841e0"/><path d="M213.0 3.2L214.5 20.1L213.8 37.1L212.2 20.1Z" fill="#0016a1"/><path d="M202.3 -48.7L201.8 -13.9L199.3 20.9L199.9 -13.9Z" fill="#24dfeb"/><path d="M136.5 128.2L138.6 158.1L138.2 188.1L136.1 158.1Z" fill="#2df346"/><path d="M359.7 30.7L360.9 61.2L359.2 91.6L358.0 61.2Z" fill="#0016a1"/><path d="M124.0 50.4L123.4 66.0L120.5 81.5L121.1 66.0Z" fill="#24dfeb"/><path d="M303.7 128.1L305.2 171.8L305.1 215.4L303.6 171.8Z" fill="#24dfeb"/><path d="M185.7 -42.1L185.5 4.0L182.5 50.1L182.7 4.0Z" fill="#00108d"/><path d="M92.1 16.1L92.4 56.4L90.6 96.8L90.3 56.4Z" fill="#25ea7d"/><path d="M355.1 -17.7L357.3 21.7L358.0 61.1L355.7 21.7Z" fill="#1ecdf8"/><path d="M205.0 -34.8L207.4 2.8L207.7 40.4L205.3 2.8Z" fill="#21d7f8"/><path d="M267.9 2.6L267.9 55.3L264.9 108.0L264.9 55.3Z" fill="#24dfeb"/><path d="M227.8 -19.0L229.7 14.4L229.8 47.8L227.9 14.4Z" fill="#19bef8"/><path d="M315.9 145.1L316.5 180.3L315.5 215.4L314.9 180.3Z" fill="#24dfeb"/><path d="M253.6 73.3L253.5 97.5L250.7 121.8L250.8 97.5Z" fill="#0942e2"/><path d="M322.9 22.6L323.2 43.8L320.5 65.0L320.1 43.8Z" fill="#20d4f8"/><path d="M175.4 79.6L174.9 97.3L172.6 115.0L173.0 97.3Z" fill="#0d83f1"/><path d="M354.3 91.9L357.0 133.7L357.5 175.6L354.8 133.7Z" fill="#24dfeb"/><path d="M524.9 68.0L526.7 120.6L525.5 173.2L523.6 120.6Z" fill="#24dfeb"/><path d="M109.9 56.6L110.5 89.9L109.4 123.2L108.9 89.9Z" fill="#0225bf"/><path d="M233.3 29.0L234.2 64.1L231.9 99.2L231.0 64.1Z" fill="#24dfeb"/><path d="M459.8 115.9L461.0 169.7L460.3 223.4L459.1 169.7Z" fill="#0225bf"/><path d="M288.0 24.2L287.3 48.4L284.0 72.6L284.7 48.4Z" fill="#24e4ae"/><path d="M310.6 122.4L312.8 151.0L313.1 179.6L310.9 151.0Z" fill="#24dfeb"/><path d="M501.6 22.5L504.3 73.9L505.2 125.3L502.6 73.9Z" fill="#24dfeb"/><path d="M474.5 -4.8L477.1 36.6L477.8 78.0L475.2 36.6Z" fill="#24dfeb"/><path d="M181.3 -27.8L182.8 21.9L182.0 71.7L180.5 21.9Z" fill="#000b79"/><path d="M483.2 -33.9L483.2 -14.2L481.0 5.6L481.0 -14.2Z" fill="#24dfeb"/><path d="M113.8 118.4L115.8 164.7L115.1 211.0L113.1 164.7Z" fill="#032ac5"/><path d="M71.9 56.4L72.4 85.9L71.2 115.4L70.7 85.9Z" fill="#18bcf8"/><path d="M411.8 55.7L412.6 85.0L410.7 114.2L409.8 85.0Z" fill="#1fd0f8"/><path d="M493.3 75.0L494.0 101.3L492.8 127.6L492.0 101.3Z" fill="#0225bf"/><path d="M131.0 117.6L131.5 167.1L129.8 216.5L129.3 167.1Z" fill="#26ed67"/><path d="M364.7 144.2L365.9 180.0L364.6 215.9L363.4 180.0Z" fill="#0123bd"/><path d="M398.8 58.5L401.2 101.7L400.9 144.9L398.4 101.7Z" fill="#1ecdf8"/><path d="M163.2 3.4L162.9 28.4L159.8 53.4L160.1 28.4Z" fill="#001bb2"/><path d="M458.2 104.9L460.3 151.7L460.1 198.5L458.1 151.7Z" fill="#24dfeb"/><path d="M455.0 136.7L454.8 185.6L451.8 234.5L452.0 185.6Z" fill="#24dfeb"/><path d="M364.3 92.6L367.0 122.1L366.8 151.6L364.1 122.1Z" fill="#24dfeb"/><path d="M444.1 -17.0L446.8 4.7L447.8 26.4L445.2 4.7Z" fill="#24dfeb"/><path d="M371.6 -23.7L372.6 14.1L370.9 52.0L369.9 14.1Z" fill="#001bb0"/><path d="M335.7 83.5L337.5 129.8L337.3 176.1L335.5 129.8Z" fill="#001fb8"/><path d="M485.3 3.5L486.4 56.5L485.0 109.6L484.0 56.5Z" fill="#24dfeb"/><path d="M363.4 111.2L365.1 160.1L365.0 209.0L363.4 160.1Z" fill="#0120b9"/><path d="M486.7 125.0L488.0 147.0L486.3 168.9L485.0 147.0Z" fill="#24dfeb"/><path d="M452.8 92.0L454.6 144.9L453.5 197.7L451.6 144.9Z" fill="#24dfeb"/><path d="M382.3 118.7L382.8 164.7L381.7 210.7L381.2 164.7Z" fill="#24dfeb"/><path d="M502.7 157.8L504.4 191.6L503.9 225.3L502.1 191.6Z" fill="#24dfeb"/><path d="M95.7 138.8L98.7 158.3L98.8 177.7L95.9 158.3Z" fill="#13adf8"/><path d="M449.4 -37.1L451.6 -8.0L451.0 21.0L448.9 -8.0Z" fill="#0226c0"/><path d="M288.5 82.8L290.2 129.2L289.9 175.6L288.2 129.2Z" fill="#27ef51"/><path d="M392.7 38.3L392.7 76.8L390.8 115.3L390.9 76.8Z" fill="#00159d"/><path d="M149.4 121.5L152.1 174.0L152.6 226.5L150.0 174.0Z" fill="#27ed63"/><path d="M483.3 121.9L486.5 153.3L487.3 184.8L484.1 153.3Z" fill="#24dfeb"/><path d="M279.5 107.1L282.6 157.8L282.7 208.5L279.6 157.8Z" fill="#40ff28"/><path d="M84.4 2.4L84.6 23.2L81.9 43.9L81.6 23.2Z" fill="#0531ce"/><path d="M317.5 -29.0L317.6 7.2L315.5 43.3L315.4 7.2Z" fill="#24dfeb"/><path d="M116.3 165.9L117.5 186.1L117.0 206.2L115.8 186.1Z" fill="#24dfeb"/><path d="M241.4 69.3L242.3 99.5L240.6 129.7L239.8 99.5Z" fill="#0a55e8"/><path d="M482.1 -27.1L482.1 21.8L479.5 70.7L479.5 21.8Z" fill="#0225bf"/><path d="M125.7 52.9L127.3 88.8L127.0 124.8L125.4 88.8Z" fill="#24dfeb"/><path d="M342.4 166.1L343.4 190.4L342.2 214.8L341.2 190.4Z" fill="#24dfeb"/><path d="M193.9 -53.0L194.2 0.0L192.2 53.0L191.8 0.0Z" fill="#0018a6"/><path d="M376.6 75.2L376.6 121.4L374.9 167.6L374.9 121.4Z" fill="#1cc7f8"/><path d="M352.5 -4.3L354.0 20.5L353.5 45.3L352.0 20.5Z" fill="#22d9f8"/><path d="M211.5 96.8L210.7 116.7L208.4 136.7L209.1 116.7Z" fill="#26ec6d"/><path d="M317.1 127.4L316.7 169.2L314.7 211.1L315.1 169.2Z" fill="#24dfeb"/><path d="M390.6 141.4L392.7 187.0L391.9 232.5L389.7 187.0Z" fill="#0124bd"/><path d="M195.3 29.3L198.5 58.4L198.8 87.4L195.6 58.4Z" fill="#001bb3"/><path d="M399.7 6.2L399.3 54.7L396.7 103.3L397.2 54.7Z" fill="#00108b"/><path d="M273.5 -17.0L274.5 34.3L273.6 85.5L272.6 34.3Z" fill="#24dfeb"/><path d="M314.7 72.2L316.4 114.9L315.2 157.6L313.5 114.9Z" fill="#24dfeb"/><path d="M239.3 138.5L239.9 180.4L238.2 222.2L237.6 180.4Z" fill="#26eb77"/><path d="M165.2 111.9L168.1 131.4L168.5 150.9L165.5 131.4Z" fill="#40ff28"/><path d="M119.4 -4.6L121.4 15.2L120.9 35.0L119.0 15.2Z" fill="#24dfeb"/><path d="M303.1 -24.2L304.5 3.2L303.9 30.5L302.5 3.2Z" fill="#001bb3"/><path d="M482.8 89.4L484.5 143.1L484.2 196.7L482.6 143.1Z" fill="#0225bf"/><path d="M254.7 -47.2L256.0 -10.3L255.2 26.5L254.0 -10.3Z" fill="#24dfeb"/><path d="M176.0 107.0L176.8 135.0L175.8 163.0L175.1 135.0Z" fill="#25ea7d"/><path d="M374.2 74.0L375.9 119.6L375.6 165.1L373.9 119.6Z" fill="#24dfeb"/><path d="M355.7 126.8L357.2 174.2L355.5 221.6L354.0 174.2Z" fill="#0123bd"/><path d="M327.6 132.1L327.3 182.2L325.2 232.3L325.5 182.2Z" fill="#0226c0"/><path d="M281.0 39.7L282.8 89.1L282.1 138.6L280.2 89.1Z" fill="#37f936"/><path d="M470.0 62.0L469.9 82.7L467.0 103.4L467.0 82.7Z" fill="#0225bf"/><path d="M66.7 162.4L69.9 183.6L70.0 204.8L66.8 183.6Z" fill="#24e69a"/><path d="M76.9 91.3L76.5 109.4L73.4 127.5L73.8 109.4Z" fill="#32f63e"/><path d="M295.3 18.5L294.8 35.2L292.3 51.9L292.9 35.2Z" fill="#21d5f8"/><path d="M273.4 28.5L273.6 80.1L272.1 131.7L271.9 80.1Z" fill="#25e980"/><path d="M205.2 26.3L205.6 71.4L204.5 116.5L204.0 71.4Z" fill="#0329c4"/><path d="M112.9 -8.7L112.2 12.2L109.8 33.2L110.6 12.2Z" fill="#24def1"/><path d="M260.3 -37.0L260.6 -13.0L258.4 11.0L258.1 -13.0Z" fill="#24dfeb"/><path d="M127.6 62.7L129.3 107.2L128.4 151.8L126.7 107.2Z" fill="#25e983"/><path d="M119.7 99.6L123.2 143.4L123.7 187.1L120.3 143.4Z" fill="#25e982"/><path d="M440.0 24.2L441.9 40.4L442.0 56.5L440.1 40.4Z" fill="#0a4ce7"/><path d="M395.4 -13.3L396.3 11.8L394.9 37.0L394.0 11.8Z" fill="#15b5f8"/><path d="M381.8 80.5L384.0 119.1L383.7 157.8L381.5 119.1Z" fill="#1cc8f8"/><path d="M323.3 112.0L326.5 149.2L326.6 186.3L323.4 149.2Z" fill="#0226c1"/><path d="M219.8 92.0L219.1 126.6L216.4 161.1L217.2 126.6Z" fill="#26eb71"/><path d="M326.3 128.2L327.2 157.9L325.7 187.5L324.9 157.9Z" fill="#24dfeb"/><path d="M493.5 45.1L495.3 68.0L495.2 90.9L493.4 68.0Z" fill="#24dfeb"/><path d="M458.7 -33.2L460.4 19.5L459.4 72.2L457.7 19.5Z" fill="#24dfeb"/><path d="M149.7 -24.6L152.5 -0.9L153.4 22.7L150.6 -0.9Z" fill="#24def5"/><path d="M323.1 41.9L326.1 66.5L326.5 91.2L323.4 66.5Z" fill="#0018a7"/><path d="M299.1 19.5L301.9 55.2L302.6 90.9L299.9 55.2Z" fill="#24dfeb"/><path d="M326.4 -31.8L327.7 15.0L326.7 61.8L325.3 15.0Z" fill="#0019ac"/><path d="M200.1 90.3L200.8 126.7L199.7 163.1L199.0 126.7Z" fill="#2af14b"/><path d="M265.0 87.8L264.5 113.7L262.3 139.5L262.9 113.7Z" fill="#0c6fee"/><path d="M246.5 -12.0L249.1 33.9L248.6 79.7L246.0 33.9Z" fill="#0c74ee"/><path d="M440.1 21.5L442.4 41.1L442.9 60.7L440.7 41.1Z" fill="#0942e1"/><path d="M318.1 61.3L320.6 85.4L321.1 109.5L318.7 85.4Z" fill="#24dfec"/><path d="M454.6 119.6L456.8 140.8L457.3 162.1L455.1 140.8Z" fill="#24dfeb"/><path d="M278.6 -29.6L279.5 16.6L279.0 62.7L278.0 16.6Z" fill="#0b56e9"/><path d="M256.7 -1.9L258.8 48.0L258.7 98.0L256.6 48.0Z" fill="#001bb1"/><path d="M371.6 15.6L372.9 45.0L372.2 74.4L370.9 45.0Z" fill="#20d3f8"/><path d="M483.4 118.6L485.6 159.7L484.6 200.8L482.5 159.7Z" fill="#0225bf"/><path d="M328.3 23.6L330.5 78.0L330.5 132.5L328.3 78.0Z" fill="#0018a8"/><path d="M152.3 25.1L155.0 52.8L155.3 80.4L152.6 52.8Z" fill="#001bb2"/><path d="M85.9 116.5L85.4 153.4L82.8 190.4L83.3 153.4Z" fill="#40ff28"/><path d="M408.8 103.4L411.1 143.5L410.9 183.7L408.6 143.5Z" fill="#001fb8"/><path d="M423.0 152.2L423.3 168.0L420.5 183.9L420.2 168.0Z" fill="#0224be"/><path d="M206.3 35.6L205.6 72.6L202.4 109.7L203.1 72.6Z" fill="#032ac5"/><path d="M386.1 100.4L385.0 138.2L382.1 175.9L383.2 138.2Z" fill="#001aaf"/><path d="M515.6 113.8L515.4 135.8L512.5 157.9L512.7 135.8Z" fill="#24dfeb"/><path d="M307.2 90.8L308.0 133.4L306.9 176.0L306.1 133.4Z" fill="#24dfeb"/><path d="M235.0 76.6L237.7 119.8L237.5 163.0L234.8 119.8Z" fill="#40ff28"/><path d="M168.4 126.7L167.4 170.5L164.6 214.3L165.6 170.5Z" fill="#29f14d"/><path d="M459.9 151.5L462.2 193.2L462.5 234.9L460.2 193.2Z" fill="#0225bf"/><path d="M238.9 -7.2L241.0 36.9L241.3 81.0L239.2 36.9Z" fill="#001190"/><path d="M493.7 111.9L496.7 135.4L497.3 158.8L494.3 135.4Z" fill="#24dfeb"/><path d="M103.4 0.9L102.7 48.4L100.2 95.9L100.9 48.4Z" fill="#0228c2"/><path d="M482.5 16.7L482.5 70.1L480.1 123.6L480.2 70.1Z" fill="#0225bf"/><path d="M70.5 57.5L71.3 87.1L69.5 116.8L68.7 87.1Z" fill="#38fa34"/><path d="M205.6 -56.2L208.3 -19.9L208.7 16.4L206.0 -19.9Z" fill="#24dfeb"/><path d="M515.5 141.9L517.1 180.7L515.6 219.5L514.0 180.7Z" fill="#0225bf"/><path d="M232.3 -7.9L231.8 15.3L229.2 38.6L229.8 15.3Z" fill="#00159b"/><path d="M118.6 -8.3L117.8 7.7L115.4 23.7L116.2 7.7Z" fill="#001eb7"/><path d="M154.8 -71.3L153.9 -17.2L151.2 36.8L152.1 -17.2Z" fill="#0121ba"/><path d="M128.8 88.2L129.0 119.7L126.0 151.2L125.9 119.7Z" fill="#27ee5e"/><path d="M272.6 84.4L274.0 102.0L273.8 119.6L272.5 102.0Z" fill="#26ed65"/><path d="M150.6 107.1L149.9 150.9L147.4 194.7L148.1 150.9Z" fill="#40ff28"/><path d="M204.2 18.6L203.5 50.2L200.3 81.9L201.0 50.2Z" fill="#001bb2"/><path d="M64.5 52.1L65.1 84.6L62.8 117.1L62.2 84.6Z" fill="#29f04d"/><path d="M63.5 -15.8L65.0 27.8L64.7 71.5L63.2 27.8Z" fill="#26ec6e"/><path d="M384.3 66.9L384.2 87.6L382.4 108.4L382.5 87.6Z" fill="#00159c"/><path d="M304.2 73.3L305.6 90.8L304.4 108.2L302.9 90.8Z" fill="#24dfeb"/><path d="M75.7 4.3L77.4 42.8L77.5 81.3L75.8 42.8Z" fill="#26ec6b"/><path d="M292.9 125.6L293.9 176.7L292.8 227.7L291.8 176.7Z" fill="#24e5a3"/><path d="M382.6 140.0L384.0 164.8L383.3 189.7L381.9 164.8Z" fill="#24dfeb"/><path d="M507.6 34.9L509.7 72.9L509.3 111.0L507.2 72.9Z" fill="#24dfeb"/><path d="M289.1 -1.5L291.7 33.1L291.8 67.7L289.3 33.1Z" fill="#001db6"/><path d="M188.8 -41.6L189.2 -19.8L186.6 1.9L186.2 -19.8Z" fill="#24dfeb"/><path d="M235.1 38.8L237.7 87.7L237.3 136.6L234.7 87.7Z" fill="#24dfeb"/><path d="M376.4 -23.0L376.8 21.0L375.4 64.9L375.1 21.0Z" fill="#24def3"/><path d="M134.9 61.5L135.5 92.1L134.4 122.6L133.7 92.1Z" fill="#073bd9"/><path d="M225.3 -18.4L226.5 3.9L225.3 26.1L224.2 3.9Z" fill="#24deee"/><path d="M259.0 -16.7L260.6 36.4L260.7 89.4L259.1 36.4Z" fill="#1ecef8"/><path d="M422.9 155.9L424.7 171.3L423.7 186.8L421.8 171.3Z" fill="#24dfeb"/><path d="M338.0 34.6L340.3 87.5L340.4 140.4L338.1 87.5Z" fill="#1cc8f8"/><path d="M163.6 59.2L164.9 85.3L164.2 111.3L162.9 85.3Z" fill="#25e889"/><path d="M305.7 93.0L306.3 139.6L304.6 186.3L304.0 139.6Z" fill="#0637d4"/><path d="M69.3 -55.2L69.2 -9.1L66.1 37.1L66.2 -9.1Z" fill="#083fde"/><path d="M248.9 63.2L251.9 83.1L252.5 103.1L249.5 83.1Z" fill="#032bc6"/><path d="M416.4 53.3L415.9 94.1L412.8 134.9L413.3 94.1Z" fill="#001aad"/><path d="M245.6 62.1L248.0 85.9L248.4 109.7L246.0 85.9Z" fill="#24dfeb"/><path d="M425.8 81.5L429.1 132.8L429.7 184.1L426.4 132.8Z" fill="#0123bd"/><path d="M197.3 118.3L198.5 153.9L197.1 189.5L195.9 153.9Z" fill="#24e3bd"/><path d="M214.9 161.8L215.9 185.7L215.1 209.7L214.0 185.7Z" fill="#25e888"/><path d="M359.1 -58.8L359.3 -8.8L357.9 41.2L357.8 -8.8Z" fill="#24deef"/><path d="M130.5 47.0L130.5 98.9L128.0 150.9L128.0 98.9Z" fill="#24dfeb"/><path d="M444.5 -65.5L446.4 -14.1L445.7 37.3L443.8 -14.1Z" fill="#24dfeb"/><path d="M92.7 -20.9L93.5 16.1L92.3 53.0L91.6 16.1Z" fill="#24dfeb"/><path d="M514.7 111.9L515.4 153.3L513.5 194.6L512.7 153.3Z" fill="#24dfeb"/><path d="M172.2 2.4L173.2 21.3L171.8 40.1L170.8 21.3Z" fill="#001aad"/><path d="M325.6 -35.0L325.7 8.0L323.9 51.0L323.7 8.0Z" fill="#001aaf"/><path d="M198.2 140.9L200.3 188.3L199.8 235.8L197.7 188.3Z" fill="#24e69b"/></svg>
<div class="a" style="left:102px;top:469px;width:539px;height:25px;background:#cdd4da;border-top:3px solid #c4ccd4;border-bottom:1px solid #50586a"></div>
<div class="a" style="left:102px;top:472px;width:539px;height:1px;background:#7c84a0"></div>
<svg class="a" style="left:0;top:477px" width="800" height="4"><rect x="267" y="0" width="2" height="2" fill="#505050"/><rect x="283" y="0" width="2" height="2" fill="#505050"/><rect x="299" y="0" width="2" height="2" fill="#505050"/><rect x="315" y="0" width="2" height="2" fill="#505050"/><rect x="331" y="0" width="2" height="2" fill="#505050"/><rect x="347" y="0" width="2" height="2" fill="#505050"/><rect x="363" y="0" width="2" height="2" fill="#505050"/><rect x="379" y="0" width="2" height="2" fill="#505050"/><rect x="395" y="0" width="2" height="2" fill="#505050"/><rect x="411" y="0" width="2" height="2" fill="#505050"/></svg>
<div class="t" style="left:265px;top:481px;font-family:'Liberation Mono',monospace;font-size:10.5px;color:#202020;transform:none;letter-spacing:0px">1:46.5</div>
<div class="t" style="left:345px;top:481px;font-family:'Liberation Mono',monospace;font-size:10.5px;color:#202020;transform:none;letter-spacing:0px">1:47.0</div>
<div class="a" style="left:102px;top:495px;width:539px;height:19px;background:#fcfcfc;border-bottom:2px solid #50586a"></div>
<div class="a" style="left:102px;top:516px;width:539px;height:28px;background:#c8d0d6;border-bottom:1px solid #fff"></div>
<svg class="a" style="left:0;top:0" width="800" height="600"><path d="M260.5 528V534M261.5 527V535M262.5 526V536M263.5 527V535M264.5 526V536M265.5 526V536M266.5 527V535M267.5 527V535M268.5 526V536M269.5 526V536M270.5 526V536M271.5 525V537M272.5 525V537M273.5 526V536M274.5 526V536M275.5 526V536M276.5 526V536M277.5 524V538M278.5 525V537M279.5 524V538M280.5 525V537M281.5 524V538M282.5 526V536M283.5 525V537M284.5 524V538M285.5 524V538M286.5 525V537M287.5 524V538M288.5 523V539M289.5 524V538M290.5 523V539M291.5 525V537M292.5 523V539M293.5 523V539M294.5 525V537M295.5 524V538M296.5 522V540M297.5 522V540M298.5 522V540M299.5 523V539M300.5 522V540M301.5 522V540M302.5 522V540M303.5 525V537M304.5 523V539M305.5 524V538M306.5 523V539M307.5 524V538M308.5 523V539M309.5 522V540M310.5 523V539M311.5 524V538M312.5 523V539M313.5 523V539M314.5 522V540M315.5 524V538M316.5 524V538M317.5 523V539M318.5 525V537M319.5 523V539M320.5 522V540M321.5 523V539M322.5 524V538M323.5 525V537M324.5 526V536M325.5 528V534M326.5 529V533M327.5 529V533M328.5 528V534M329.5 528V534M330.5 528V534M331.5 528V534M332.5 528V534M333.5 526V536M334.5 524V538M335.5 525V537M336.5 525V537M337.5 525V537M338.5 526V536M339.5 524V538M340.5 525V537M341.5 525V537M342.5 525V537M343.5 525V537M344.5 526V536M345.5 526V536M346.5 526V536M347.5 525V537M348.5 525V537M349.5 525V537M350.5 526V536M351.5 525V537M352.5 524V538M353.5 526V536M354.5 525V537M355.5 525V537M356.5 525V537M357.5 523V539M358.5 525V537M359.5 524V538M360.5 526V536M361.5 526V536M362.5 524V538M363.5 525V537M364.5 526V536M365.5 525V537M366.5 525V537M367.5 524V538M368.5 526V536M369.5 525V537M370.5 523V539M371.5 524V538M372.5 526V536M373.5 525V537M374.5 525V537M375.5 524V538M376.5 524V538M377.5 523V539M378.5 524V538M379.5 524V538M380.5 524V538M381.5 524V538M382.5 524V538M383.5 524V538M384.5 524V538M385.5 524V538M386.5 523V539M387.5 525V537M388.5 523V539M389.5 526V536M390.5 523V539M391.5 524V538M392.5 524V538M393.5 523V539M394.5 524V538M395.5 524V538M396.5 523V539M397.5 523V539M398.5 524V538M399.5 525V537M400.5 525V537M401.5 526V536M402.5 526V536M403.5 527V535M404.5 528V534M405.5 528V534M406.5 529V533M407.5 529V533M408.5 529V533M409.5 529V533M410.5 529V533M411.5 529V533M412.5 529V533M413.5 529V533" stroke="#080808" stroke-width="1" fill="none"/><rect x="258" y="520" width="2" height="21" fill="#f0f0f0"/></svg>
<div class="a" style="left:102px;top:544px;width:539px;height:5px;background:#d4dade;border-top:1px solid #60687a;border-bottom:1px solid #60687a"></div>
<div class="a" style="left:102px;top:548px;width:539px;height:25px;background:#bac6cf"></div>
<div class="t" style="left:259px;top:555px;font-size:12.5px;color:#202020;transform:scaleX(.83)">t For You.frm: 01:46.078,</div>
<div class="dlg" style="left:97px;top:-30px;width:261px;height:252px">
<div class="t" style="left:-78px;width:200px;text-align:center;top:25px;transform-origin:50% 0;">In</div>
<div class="t" style="left:-36px;width:200px;text-align:center;top:25px;transform-origin:50% 0;">Out</div>
<div class="vtrk" style="left:20px;top:39px;height:88px"></div>
<div class="vtrk" style="left:62px;top:39px;height:88px"></div>
<svg class="a" style="left:13px;top:78px" width="19" height="11"><path d="M1 1.5H13L17.5 5.5L13 9.5H1Z" fill="#f4f6f0" stroke="#8c9c8c" stroke-width="1"/><rect x="1" y="1.5" width="3" height="8" rx="1" fill="#58bc58"/></svg>
<svg class="a" style="left:55px;top:78px" width="19" height="11"><path d="M1 1.5H13L17.5 5.5L13 9.5H1Z" fill="#f4f6f0" stroke="#8c9c8c" stroke-width="1"/><rect x="1" y="1.5" width="3" height="8" rx="1" fill="#58bc58"/></svg>
<div class="edit" style="left:5px;top:130px;width:22px;height:18px"><span class="sx">50.0</span></div>
<div class="t" style="left:27px;top:132px;">%</div>
<div class="edit" style="left:47px;top:130px;width:22px;height:18px"><span class="sx">50.0</span></div>
<div class="t" style="left:69px;top:132px;">%</div>
<div class="btn" style="left:91px;top:67px;width:66px;font-size:12px"><span class="sx">+</span></div>
<div class="a" style="left:92px;top:89px;width:65px;height:18px;background:#eeecdc;border-radius:2px;text-align:center;color:#b0b0a0;line-height:17px">-</div>
<div class="a" style="left:162px;top:16px;width:90px;height:138px;border-left:1px solid #e0e8ee;border-right:1px solid #8a96a0;border-bottom:2px solid #8a96a0"></div>
<div class="t" style="left:106px;width:200px;text-align:center;top:24px;transform-origin:50% 0;">Echo 1</div>
<div class="vtrk" style="left:184px;top:39px;height:88px"></div>
<div class="vtrk" style="left:227px;top:39px;height:88px"></div>
<svg class="a" style="left:177px;top:108px" width="19" height="11"><path d="M1 1.5H13L17.5 5.5L13 9.5H1Z" fill="#f4f6f0" stroke="#8c9c8c" stroke-width="1"/><rect x="1" y="1.5" width="3" height="8" rx="1" fill="#58bc58"/></svg>
<svg class="a" style="left:220px;top:87px" width="19" height="11"><path d="M1 1.5H13L17.5 5.5L13 9.5H1Z" fill="#f4f6f0" stroke="#8c9c8c" stroke-width="1"/><rect x="1" y="1.5" width="3" height="8" rx="1" fill="#58bc58"/></svg>
<div class="edit" style="left:167px;top:130px;width:22px;height:18px"><span class="sx">40.0</span></div>
<div class="t" style="left:189px;top:132px;">ms</div>
<div class="edit" style="left:211px;top:130px;width:22px;height:18px"><span class="sx">40.0</span></div>
<div class="t" style="left:232px;top:132px;">%</div>
<div class="chk" style="left:3px;top:159px"><svg class="a" style="left:1px;top:1px" width="9" height="9"><path d="M1 4L3.5 7L8 1.5" stroke="#48a040" stroke-width="1.8" fill="none"/></svg></div>
<div class="t" style="left:17px;top:158px;">Drain beyond selection</div>
<div class="pbtn" style="left:5px;top:175px"><svg class="a" style="left:6px;top:6px" width="14" height="14"><path d="M1 0V13L13 6.5Z" fill="#000"/></svg></div>
<div class="pbtn" style="left:38px;top:175px"><svg class="a" style="left:7px;top:7px" width="12" height="12"><rect width="11" height="11" fill="#000"/></svg></div>
<div class="btn" style="left:31px;top:216px;width:66px"><span class="sx">OK</span></div>
<div class="btn" style="left:156px;top:216px;width:66px"><span class="sx">Cancel</span></div>
</div>
<div class="dlg" style="left:606px;top:-30px;width:173px;height:302px">
<div class="tb" style="top:0;height:30px"></div>
<div class="tbtn bmin" style="left:107px;top:12px"></div>
<div class="tbtn bmax" style="left:127px;top:12px"></div>
<div class="tbtn bcls" style="left:147px;top:12px"></div>
<div class="t" style="left:-18px;width:200px;text-align:center;top:34px;transform-origin:50% 0;">Fade direction:</div>
<div class="rad on" style="left:4px;top:52px"></div>
<div class="t" style="left:18px;top:52px;">In</div>
<div class="rad " style="left:4px;top:69px"></div>
<div class="t" style="left:18px;top:69px;">Out</div>
<div class="t" style="left:-18px;width:200px;text-align:center;top:87px;transform-origin:50% 0;">Fade type:</div>
<div class="rad on" style="left:4px;top:105px"></div>
<div class="t" style="left:18px;top:105px;">Linear</div>
<div class="rad " style="left:4px;top:122px"></div>
<div class="t" style="left:18px;top:122px;">Logarithmic</div>
<div class="rad " style="left:4px;top:139px"></div>
<div class="t" style="left:18px;top:139px;">Exponential</div>
<svg class="a" style="left:50px;top:151px" width="64" height="62"><path d="M6 56L57 6" stroke="#202020" stroke-width="1.1"/></svg>
<div class="t" style="left:-19px;width:200px;text-align:center;top:216px;transform-origin:50% 0;">Fade floor:</div>
<div class="trk" style="left:5px;top:238px;width:85px"></div>
<svg class="a" style="left:3px;top:232px" width="11" height="17"><path d="M1.5 16V5L5.5 1L9.5 5V16Z" fill="#f4f6f0" stroke="#8c9c8c" stroke-width="1"/><rect x="1.5" y="13" width="8" height="3" rx="1" fill="#48b448"/></svg>
<div class="edit" style="left:92px;top:231px;width:31px"><span class="sx">0.0</span></div>
<div class="t" style="left:126px;top:234px;">%</div>
<div class="btn" style="left:9px;top:267px;width:66px"><span class="sx">OK</span></div>
<div class="btn" style="left:91px;top:267px;width:66px"><span class="sx">Cancel</span></div>
</div>
<div class="dlg" style="left:13px;top:260px;width:156px;height:195px;border-radius:7px 7px 0 0">
<div class="tb" style="top:-4px;left:-4px;right:-4px;height:26px;border-radius:6px 6px 0 0"><svg class="a" style="left:6px;top:5px" width="18" height="15"><g fill="none" stroke-linecap="round" stroke-linejoin="round"><path d="M2.5 4.5C5 2.5 7.5 3.5 10.5 2.5L5.5 12.5M10.5 9.5C10.5 6 12.5 3 15.5 2.5M10.5 9.5C10.5 12.5 14.5 12.5 15 9.5C15.3 7.5 12.5 7.5 11 9" stroke="#6a2050" stroke-width="3.6" opacity=".55"/><path d="M2.5 4.5C5 2.5 7.5 3.5 10.5 2.5L5.5 12.5M10.5 9.5C10.5 6 12.5 3 15.5 2.5M10.5 9.5C10.5 12.5 14.5 12.5 15 9.5C15.3 7.5 12.5 7.5 11 9" stroke="#d0203c" stroke-width="2.4"/></g></svg><div class="ttl" style="left:25px;top:7px">Sonogram C</div><div class="tbtn bmin" style="left:93px;top:5px"></div><div class="tbtn bmax" style="left:114px;top:5px"></div><div class="tbtn bcls" style="left:135px;top:5px"><svg class="a" style="left:3px;top:3px" width="11" height="11"><path d="M1 1L10 10M10 1L1 10" stroke="#fff" stroke-width="2"/></svg></div></div>
<div class="a" style="left:49px;top:25px;width:91px;height:91px;border-left:1px solid #e4ecf0;border-top:1px solid #e4ecf0;border-right:2px solid #6a7480;border-bottom:2px solid #6a7480"></div>
<div class="a" style="left:89px;top:66px;width:6px;height:6px;background:#000"></div>
<div class="t" style="left:2px;top:99px;">Contrast</div>
<div class="t" style="left:-6px;width:200px;text-align:center;top:120px;transform-origin:50% 0;">Brightness</div>
<div class="t" style="left:43px;top:135px;">Analysis window length:</div>
<div class="t" style="left:46px;top:154px;">79</div>
<div class="trk" style="left:44px;top:174px;width:104px"></div>
<svg class="a" style="left:47px;top:168px" width="11" height="17"><path d="M1.5 16V5L5.5 1L9.5 5V16Z" fill="#f4f6f0" stroke="#8c9c8c" stroke-width="1"/><rect x="1.5" y="13" width="8" height="3" rx="1" fill="#48b448"/></svg>
</div>
<div class="dlg" style="left:571px;top:306px;width:170px;height:124px;border-radius:7px 7px 0 0">
<div class="tb" style="top:-4px;left:-4px;right:-4px;height:26px;border-radius:6px 6px 0 0"><svg class="a" style="left:6px;top:5px" width="18" height="15"><g fill="none" stroke-linecap="round" stroke-linejoin="round"><path d="M2.5 4.5C5 2.5 7.5 3.5 10.5 2.5L5.5 12.5M10.5 9.5C10.5 6 12.5 3 15.5 2.5M10.5 9.5C10.5 12.5 14.5 12.5 15 9.5C15.3 7.5 12.5 7.5 11 9" stroke="#6a2050" stroke-width="3.6" opacity=".55"/><path d="M2.5 4.5C5 2.5 7.5 3.5 10.5 2.5L5.5 12.5M10.5 9.5C10.5 6 12.5 3 15.5 2.5M10.5 9.5C10.5 12.5 14.5 12.5 15 9.5C15.3 7.5 12.5 7.5 11 9" stroke="#d0203c" stroke-width="2.4"/></g></svg><div class="ttl" style="left:25px;top:7px">Amplify</div><div class="tbtn bmin" style="left:109px;top:5px"></div><div class="tbtn bmaxd" style="left:129px;top:5px"></div><div class="tbtn bcls" style="left:149px;top:5px"><svg class="a" style="left:3px;top:3px" width="11" height="11"><path d="M1 1L10 10M10 1L1 10" stroke="#fff" stroke-width="2"/></svg></div></div>
<div class="t" style="left:-1px;top:24px;">Amplify by:</div>
<div class="trk" style="left:1px;top:46px;width:87px"></div>
<svg class="a" style="left:27px;top:41px" width="11" height="17"><path d="M1.5 16V5L5.5 1L9.5 5V16Z" fill="#f4f6f0" stroke="#8c9c8c" stroke-width="1"/><rect x="1.5" y="13" width="8" height="3" rx="1" fill="#48b448"/></svg>
<div class="edit" style="left:89px;top:39px;width:31px"><span class="sx">100.0</span></div>
<div class="t" style="left:122px;top:42px;">%</div>
<div class="chk" style="left:1px;top:62px"></div>
<div class="t" style="left:15px;top:63px;">Decibels</div>
<div class="btn" style="left:7px;top:89px;width:66px"><span class="sx">OK</span></div>
<div class="btn" style="left:89px;top:89px;width:66px"><span class="sx">Cancel</span></div>
</div>
<div class="dlg" style="left:84px;top:458px;width:172px;height:150px;border-radius:7px 7px 0 0">
<div class="tb" style="top:-4px;left:-4px;right:-4px;height:26px;border-radius:6px 6px 0 0"><svg class="a" style="left:6px;top:5px" width="18" height="15"><g fill="none" stroke-linecap="round" stroke-linejoin="round"><path d="M2.5 4.5C5 2.5 7.5 3.5 10.5 2.5L5.5 12.5M10.5 9.5C10.5 6 12.5 3 15.5 2.5M10.5 9.5C10.5 12.5 14.5 12.5 15 9.5C15.3 7.5 12.5 7.5 11 9" stroke="#6a2050" stroke-width="3.6" opacity=".55"/><path d="M2.5 4.5C5 2.5 7.5 3.5 10.5 2.5L5.5 12.5M10.5 9.5C10.5 6 12.5 3 15.5 2.5M10.5 9.5C10.5 12.5 14.5 12.5 15 9.5C15.3 7.5 12.5 7.5 11 9" stroke="#d0203c" stroke-width="2.4"/></g></svg><div class="ttl" style="left:25px;top:7px">Normalize</div><div class="tbtn bmin" style="left:110px;top:5px"></div><div class="tbtn bmax" style="left:130px;top:5px"></div><div class="tbtn bcls" style="left:151px;top:5px"><svg class="a" style="left:3px;top:3px" width="11" height="11"><path d="M1 1L10 10M10 1L1 10" stroke="#fff" stroke-width="2"/></svg></div></div>
<div class="t" style="left:-19px;width:200px;text-align:center;top:24px;transform-origin:50% 0;">Normalize to:</div>
<div class="trk" style="left:3px;top:47px;width:82px"></div>
<svg class="a" style="left:79px;top:41px" width="11" height="17"><path d="M1.5 16V5L5.5 1L9.5 5V16Z" fill="#f4f6f0" stroke="#8c9c8c" stroke-width="1"/><rect x="1.5" y="13" width="8" height="3" rx="1" fill="#48b448"/></svg>
<div class="edit" style="left:90px;top:40px;width:31px"><span class="sx">100.0</span></div>
<div class="t" style="left:123px;top:43px;">%</div>
<div class="chk" style="left:2px;top:63px"></div>
<div class="t" style="left:16px;top:64px;">Decibels</div>
<div class="chk" style="left:2px;top:80px"><svg class="a" style="left:1px;top:1px" width="9" height="9"><path d="M1 4L3.5 7L8 1.5" stroke="#48a040" stroke-width="1.8" fill="none"/></svg></div>
<div class="t" style="left:16px;top:81px;">Normalize all channels equally</div>
<div class="btn" style="left:8px;top:106px;width:66px"><span class="sx">OK</span></div>
<div class="btn" style="left:90px;top:106px;width:66px"><span class="sx">Cancel</span></div>
</div>
<div class="dlg" style="left:415px;top:430px;width:252px;height:180px;border-radius:7px 7px 0 0">
<div class="tb" style="top:-4px;left:-4px;right:-4px;height:26px;border-radius:6px 6px 0 0"><svg class="a" style="left:6px;top:5px" width="18" height="15"><g fill="none" stroke-linecap="round" stroke-linejoin="round"><path d="M2.5 4.5C5 2.5 7.5 3.5 10.5 2.5L5.5 12.5M10.5 9.5C10.5 6 12.5 3 15.5 2.5M10.5 9.5C10.5 12.5 14.5 12.5 15 9.5C15.3 7.5 12.5 7.5 11 9" stroke="#6a2050" stroke-width="3.6" opacity=".55"/><path d="M2.5 4.5C5 2.5 7.5 3.5 10.5 2.5L5.5 12.5M10.5 9.5C10.5 6 12.5 3 15.5 2.5M10.5 9.5C10.5 12.5 14.5 12.5 15 9.5C15.3 7.5 12.5 7.5 11 9" stroke="#d0203c" stroke-width="2.4"/></g></svg><div class="ttl" style="left:25px;top:7px">Mix Channels</div><div class="tbtn bmin" style="left:189px;top:5px"></div><div class="tbtn bmax" style="left:210px;top:5px"></div><div class="tbtn bcls" style="left:231px;top:5px"><svg class="a" style="left:3px;top:3px" width="11" height="11"><path d="M1 1L10 10M10 1L1 10" stroke="#fff" stroke-width="2"/></svg></div></div>
<div class="t" style="left:2px;top:25px;">New channel</div>
<div class="t" style="left:4px;width:200px;text-align:center;top:25px;transform-origin:50% 0;">Channel Left</div>
<div class="t" style="left:97px;width:200px;text-align:center;top:25px;transform-origin:50% 0;">Channel Right</div>
<div class="t" style="left:-71px;width:200px;text-align:center;top:55px;transform-origin:50% 0;">Left</div>
<div class="t" style="left:-71px;width:200px;text-align:center;top:102px;transform-origin:50% 0;">Right</div>
<div class="a" style="left:59px;top:39px;width:92px;height:46px;border-left:1px solid #e8eef2;border-top:1px solid #e8eef2;border-right:1px solid #707a84;border-bottom:2px solid #707a84"></div>
<div class="trk" style="left:62px;top:49px;width:86px"></div>
<svg class="a" style="left:139px;top:43px" width="11" height="17"><path d="M1.5 16V5L5.5 1L9.5 5V16Z" fill="#f4f6f0" stroke="#8c9c8c" stroke-width="1"/><rect x="1.5" y="13" width="8" height="3" rx="1" fill="#48b448"/></svg>
<div class="edit" style="left:84px;top:63px;width:28px;height:18px"><span class="sx">100.0</span></div>
<div class="t" style="left:113px;top:65px;">%</div>
<div class="a" style="left:152px;top:39px;width:92px;height:46px;border-left:1px solid #e8eef2;border-top:1px solid #e8eef2;border-right:1px solid #707a84;border-bottom:2px solid #707a84"></div>
<div class="trk" style="left:155px;top:49px;width:86px"></div>
<svg class="a" style="left:192px;top:43px" width="11" height="17"><path d="M1.5 16V5L5.5 1L9.5 5V16Z" fill="#f4f6f0" stroke="#8c9c8c" stroke-width="1"/><rect x="1.5" y="13" width="8" height="3" rx="1" fill="#48b448"/></svg>
<div class="edit" style="left:177px;top:63px;width:28px;height:18px"><span class="sx">0.0</span></div>
<div class="t" style="left:206px;top:65px;">%</div>
<div class="a" style="left:59px;top:85px;width:92px;height:46px;border-left:1px solid #e8eef2;border-top:1px solid #e8eef2;border-right:1px solid #707a84;border-bottom:2px solid #707a84"></div>
<div class="trk" style="left:62px;top:95px;width:86px"></div>
<svg class="a" style="left:99px;top:89px" width="11" height="17"><path d="M1.5 16V5L5.5 1L9.5 5V16Z" fill="#f4f6f0" stroke="#8c9c8c" stroke-width="1"/><rect x="1.5" y="13" width="8" height="3" rx="1" fill="#48b448"/></svg>
<div class="edit" style="left:84px;top:109px;width:28px;height:18px"><span class="sx">0.0</span></div>
<div class="t" style="left:113px;top:111px;">%</div>
<div class="a" style="left:152px;top:85px;width:92px;height:46px;border-left:1px solid #e8eef2;border-top:1px solid #e8eef2;border-right:1px solid #707a84;border-bottom:2px solid #707a84"></div>
<div class="trk" style="left:155px;top:95px;width:86px"></div>
<svg class="a" style="left:232px;top:89px" width="11" height="17"><path d="M1.5 16V5L5.5 1L9.5 5V16Z" fill="#f4f6f0" stroke="#8c9c8c" stroke-width="1"/><rect x="1.5" y="13" width="8" height="3" rx="1" fill="#48b448"/></svg>
<div class="edit" style="left:177px;top:109px;width:28px;height:18px"><span class="sx">100.0</span></div>
<div class="t" style="left:206px;top:111px;">%</div>
<div class="pbtn" style="left:5px;top:135px;width:25px;height:26px"><svg class="a" style="left:6px;top:6px" width="14" height="14"><path d="M1 0V13L13 6.5Z" fill="#000"/></svg></div>
<div class="pbtn" style="left:38px;top:135px;width:25px;height:26px"><svg class="a" style="left:6px;top:6px" width="12" height="12"><rect width="11" height="11" fill="#000"/></svg></div>
</div>
</body></html>
